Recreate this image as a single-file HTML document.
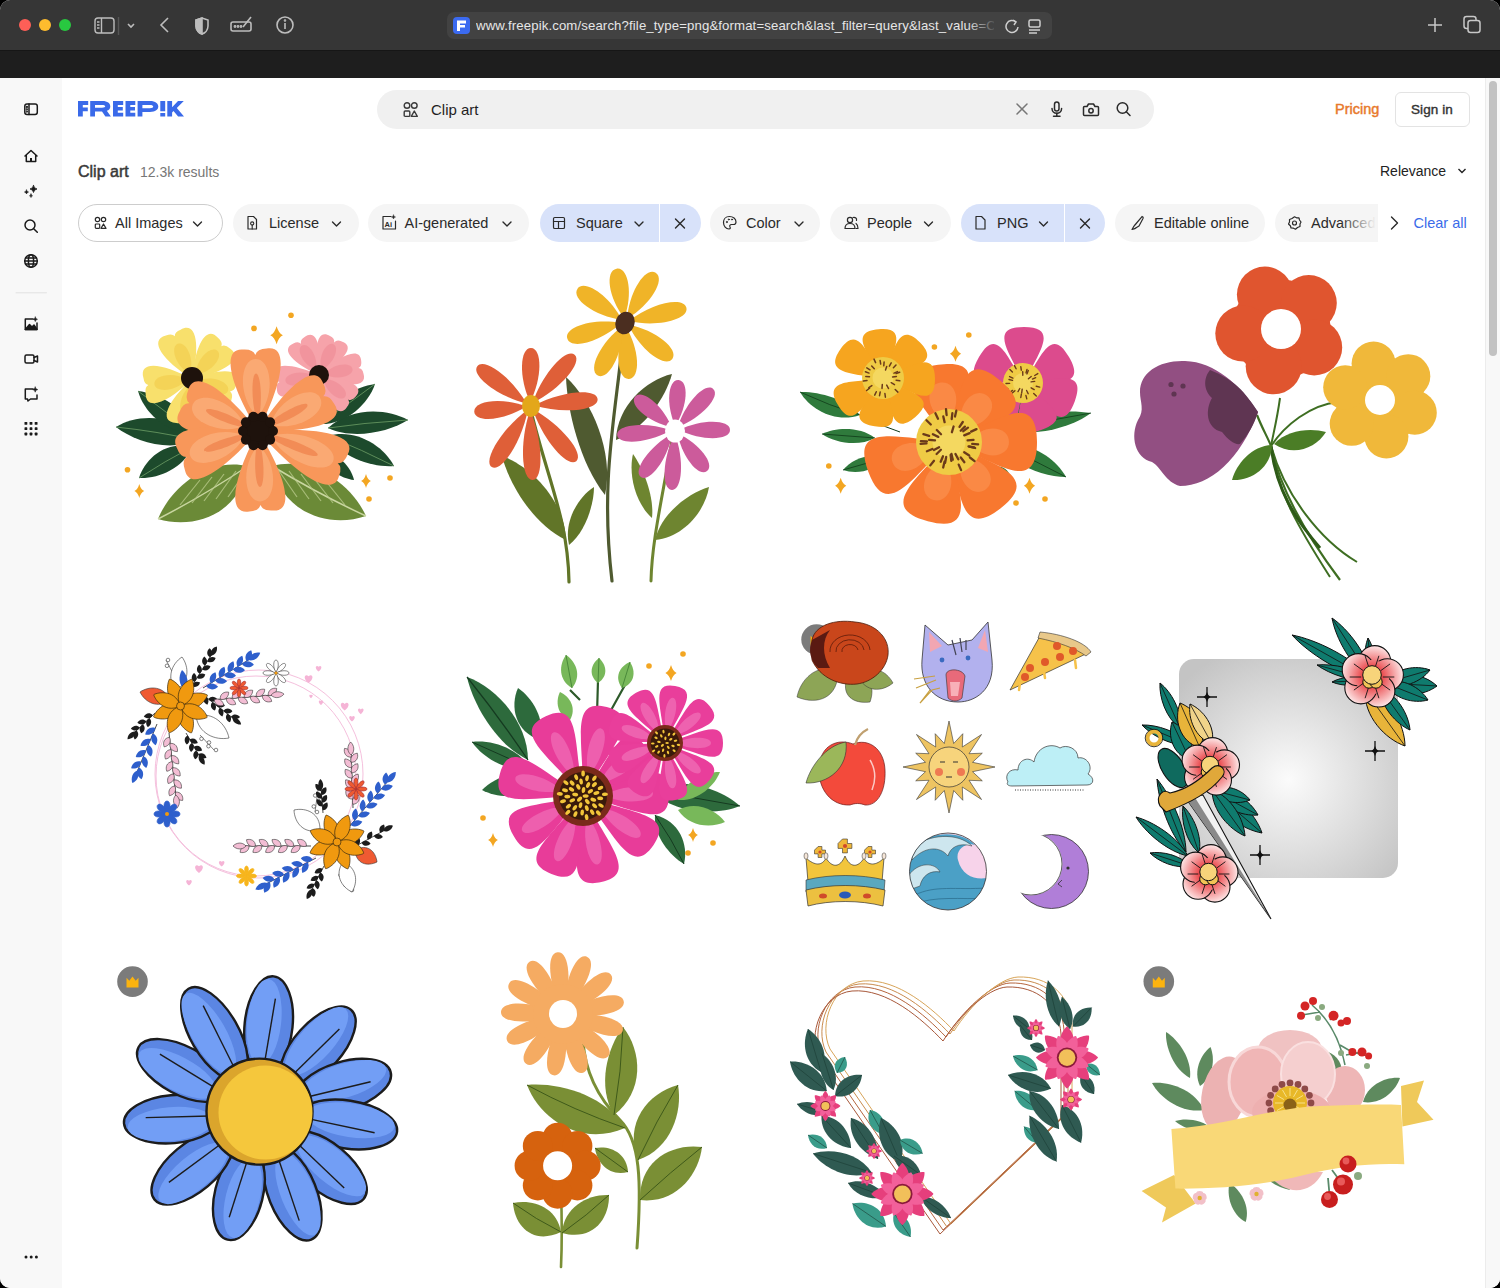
<!DOCTYPE html>
<html><head><meta charset="utf-8">
<style>
*{box-sizing:border-box;margin:0;padding:0}
html,body{width:1500px;height:1288px;overflow:hidden;background:#000;font-family:"Liberation Sans",sans-serif}
#win{position:absolute;left:0;top:0;width:1500px;height:1288px;border-radius:10px;overflow:hidden;background:#fff}
#title{position:absolute;left:0;top:0;width:1500px;height:51px;background:#363636;border-bottom:1px solid #161616}
#strip{position:absolute;left:0;top:51px;width:1500px;height:27px;background:#1e1e1e}
.dot{position:absolute;top:19px;width:12px;height:12px;border-radius:50%}
#url{position:absolute;left:447px;top:12px;width:605px;height:27px;border-radius:7px;background:#424242}
#url .txt{position:absolute;left:29px;top:6px;width:518px;overflow:hidden;font-size:13.2px;color:#e6e6e6;white-space:nowrap;letter-spacing:0.12px}
#side{position:absolute;left:0;top:78px;width:62px;height:1210px;background:#f8f8f8}
#main{position:absolute;left:62px;top:78px;width:1438px;height:1210px;background:#fff}
.ic{position:absolute}
#search{position:absolute;left:377px;top:90px;width:777px;height:39px;border-radius:20px;background:#f0f0f0}
.chip{position:absolute;top:204px;height:38px;border-radius:19px;background:#f5f5f5;font-size:14.5px;color:#333;white-space:nowrap}
.chip .t{position:absolute;top:11px}
.chip.sel{background:#d8e2fb}
.chip.out{background:#fff;border:1px solid #cfcfcf}
#scroll{position:absolute;left:1485px;top:78px;width:15px;height:1210px;background:#f8f8f8;border-left:1px solid #ececec}
#thumb{position:absolute;left:1489px;top:81px;width:8px;height:275px;border-radius:4px;background:#c2c2c2}
.tile{position:absolute}
.ct{position:absolute;top:215px;font-size:14.5px;color:#2a2a2a;white-space:nowrap;line-height:17px}
</style></head><body>
<div id="win">
 <div id="title">
  <div class="dot" style="left:19px;background:#fe5f57"></div>
  <div class="dot" style="left:39px;background:#febc2e"></div>
  <div class="dot" style="left:59px;background:#28c840"></div>
  <svg class="ic" style="left:94px;top:15px" width="60" height="22" viewBox="0 0 60 22" fill="none" stroke="#bdbdbd" stroke-width="1.4">
   <rect x="1" y="3" width="19" height="15" rx="3"/><line x1="7.5" y1="3" x2="7.5" y2="18"/>
   <line x1="3" y1="7" x2="5.5" y2="7"/><line x1="3" y1="10" x2="5.5" y2="10"/><line x1="3" y1="13" x2="5.5" y2="13"/>
   <line x1="24.5" y1="2" x2="24.5" y2="20" stroke="#555"/>
   <polyline points="34,9 37,12 40,9" stroke-width="1.6"/>
  </svg>
  <svg class="ic" style="left:155px;top:14px" width="145" height="24" viewBox="0 0 145 24" fill="none" stroke="#bdbdbd" stroke-width="1.6">
   <polyline points="13,4 6,11 13,18"/>
   <path d="M47,4 L41,6 L41,12 C41,16 44,19 47,20 C50,19 53,16 53,12 L53,6 Z"/><path d="M47,4 L47,20 C44,19 41,16 41,12 L41,6 Z" fill="#bdbdbd"/>
   <rect x="76" y="8" width="20" height="9" rx="2"/><path d="M88,13 L96,3"/>
   <circle cx="80" cy="12.5" r="0.6"/><circle cx="83" cy="12.5" r="0.6"/><circle cx="86" cy="12.5" r="0.6"/>
   <circle cx="130" cy="11" r="8"/><line x1="130" y1="9" x2="130" y2="15"/><circle cx="130" cy="6.5" r="0.5"/>
  </svg>
  <div id="url">
   <svg class="ic" style="left:6px;top:5px" width="17" height="17" viewBox="0 0 17 17"><rect width="17" height="17" rx="4" fill="#3b6af0"/><path d="M4,3.5h9v3h-6v1.5h5v2.5h-5v3.5h-3z" fill="#fff"/></svg>
   <div class="txt">www.freepik.com/search?file_type=png&amp;format=search&amp;last_filter=query&amp;last_value=C</div>
   <div style="position:absolute;left:520px;top:0;width:30px;height:27px;background:linear-gradient(90deg,rgba(66,66,66,0),#424242)"></div>
   <svg class="ic" style="left:556px;top:5px" width="45" height="18" viewBox="0 0 45 18" fill="none" stroke="#cfcfcf" stroke-width="1.5">
    <path d="M13,5 A6,6 0 1 0 15,10"/><polyline points="10,3 13,5 11,8"/>
    <rect x="26" y="3" width="11" height="7" rx="1.5"/><line x1="26" y1="13" x2="37" y2="13"/><line x1="26" y1="16" x2="34" y2="16"/>
   </svg>
  </div>
  <svg class="ic" style="left:1425px;top:15px" width="60" height="22" viewBox="0 0 60 22" fill="none" stroke="#c8c8c8" stroke-width="1.5">
   <line x1="10" y1="3" x2="10" y2="17"/><line x1="3" y1="10" x2="17" y2="10"/>
   <rect x="39" y="1.5" width="12" height="12" rx="2.5"/><rect x="43" y="5.5" width="12" height="12" rx="2.5" fill="#363636"/>
  </svg>
 </div>
 <div id="strip"></div>
 <div id="side"></div>
 <div id="main"></div>
 <div id="scroll"></div><div id="thumb"></div>
 <div id="search"></div>

 <!-- sidebar icons -->
 <svg class="ic" style="left:0;top:78px" width="62" height="1210" viewBox="0 78 62 1210" fill="none" stroke="#1a1a1a" stroke-width="1.5" stroke-linecap="round" stroke-linejoin="round">
  <rect x="24.8" y="104" width="12.5" height="10.5" rx="2.2"/><line x1="29" y1="104" x2="29" y2="114.5"/>
  <circle cx="26.9" cy="107" r="0.4" fill="#1a1a1a"/><circle cx="26.9" cy="109.3" r="0.4" fill="#1a1a1a"/><circle cx="26.9" cy="111.6" r="0.4" fill="#1a1a1a"/>
  <path d="M25,156 L31,150.5 L37,156 M26.3,155 V161.5 H35.7 V155"/><rect x="30" y="158" width="2" height="3.5" fill="#1a1a1a" stroke="none"/>
  <path d="M33.5,185.5 Q34,188.5 37,189 Q34,189.5 33.5,192.5 Q33,189.5 30,189 Q33,188.5 33.5,185.5Z" fill="#1a1a1a" stroke-width="0.8"/>
  <path d="M26.5,190 Q26.8,191.8 28.5,192 Q26.8,192.3 26.5,194 Q26.2,192.3 24.5,192 Q26.2,191.8 26.5,190Z" fill="#1a1a1a" stroke-width="0.6"/>
  <path d="M31,194 Q31.2,195.5 32.5,195.8 Q31.2,196.1 31,197.5 Q30.8,196.1 29.5,195.8 Q30.8,195.5 31,194Z" fill="#1a1a1a" stroke-width="0.6"/>
  <circle cx="30" cy="225" r="5"/><line x1="33.7" y1="228.7" x2="37.3" y2="232.3"/>
  <circle cx="31" cy="261" r="6.3"/><ellipse cx="31" cy="261" rx="2.6" ry="6.3"/><line x1="24.7" y1="261" x2="37.3" y2="261"/><line x1="25.6" y1="258" x2="36.4" y2="258"/><line x1="25.6" y1="264" x2="36.4" y2="264"/>
  <line x1="16" y1="292.8" x2="46.5" y2="292.8" stroke="#e2e2e2" stroke-width="1"/>
  <path d="M33,319 H25.3 V329.5 H37 V323"/><path d="M25.3,329.5 L29.5,324.5 L32,327 L34,325 L37,329.5Z" fill="#1a1a1a"/>
  <path d="M35.3,317 Q35.5,319 37.5,319.3 Q35.5,319.6 35.3,321.6 Q35.1,319.6 33.1,319.3 Q35.1,319 35.3,317Z" fill="#1a1a1a" stroke-width="0.5"/>
  <rect x="25" y="355" width="9" height="8" rx="1.5"/><path d="M34,357.5 L37.5,356 V362 L34,360.5"/>
  <path d="M33,389 H25.3 V399 H27.5 L28,401 L30.5,399 H37 V395"/>
  <path d="M35.2,387 Q35.5,389.3 37.8,389.6 Q35.5,390 35.2,392.2 Q34.9,390 32.6,389.6 Q34.9,389.3 35.2,387Z" fill="#1a1a1a" stroke-width="0.5"/>
  <g fill="#1a1a1a" stroke="none"><rect x="24.5" y="422" width="2.8" height="2.8" rx="0.6"/><rect x="29.6" y="422" width="2.8" height="2.8" rx="0.6"/><rect x="34.7" y="422" width="2.8" height="2.8" rx="0.6"/>
  <rect x="24.5" y="427.3" width="2.8" height="2.8" rx="0.6"/><rect x="29.6" y="427.3" width="2.8" height="2.8" rx="0.6"/><rect x="34.7" y="427.3" width="2.8" height="2.8" rx="0.6"/>
  <rect x="24.5" y="432.6" width="2.8" height="2.8" rx="0.6"/><rect x="29.6" y="432.6" width="2.8" height="2.8" rx="0.6"/><rect x="34.7" y="432.6" width="2.8" height="2.8" rx="0.6"/>
  <circle cx="26" cy="1257" r="1.5"/><circle cx="31.2" cy="1257" r="1.5"/><circle cx="36.4" cy="1257" r="1.5"/></g>
 </svg>
 <!-- logo -->
 <svg class="ic" style="left:78px;top:101px" width="106" height="16" viewBox="0 0 106 16" fill="#3a6ae9">
  <path d="M0,0H10.2V3.9H4.8V6.5H9.8V10.2H4.8V15.6H0Z"/>
  <path d="M12.2,0H24.5C29.5,0 32.3,2.3 32.3,5.4C32.3,7.6 31,9.1 28.8,9.8L32.9,15.6H27.4L24,10.6H17V15.6H12.2ZM17,3.9V6.8H24C26.3,6.8 27.2,6.2 27.2,5.35C27.2,4.5 26.3,3.9 24,3.9Z"/>
  <path d="M35,0H45.2V3.9H39.8V5.9H44.8V9.6H39.8V11.7H45.2V15.6H35Z"/>
  <path d="M47.5,0H57.3V3.9H52.3V5.9H57V9.6H52.3V11.7H57.3V15.6H47.5Z"/>
  <path d="M59.6,0H72C77.5,0 80.3,2.5 80.3,5.6C80.3,8.7 77.5,11 72,11H64.4V15.6H59.6ZM64.4,3.9V7.2H71.8C74.2,7.2 75.2,6.5 75.2,5.55C75.2,4.6 74.2,3.9 71.8,3.9Z"/>
  <path d="M82.3,0H87.2V10.2H82.3ZM82.3,12H87.2V15.6H82.3Z"/>
  <path d="M89.3,0H94.1V6.3L100,0H105.8L98.8,7.1L106,15.6H100.1L95.5,10L94.1,11.4V15.6H89.3Z"/>
 </svg>
 <!-- search contents -->
 <svg class="ic" style="left:402px;top:101px" width="18" height="17" viewBox="0 0 18 17" fill="none" stroke="#3a3a3a" stroke-width="1.4">
  <circle cx="5" cy="4.5" r="2.8"/><circle cx="12.3" cy="4.5" r="2.8"/><rect x="2.2" y="10" width="5.6" height="5.4" rx="1"/><path d="M12.3,10 L15.3,15.4 H9.3Z" stroke-linejoin="round"/>
 </svg>
 <div style="position:absolute;left:431px;top:101px;font-size:15px;color:#1f1f1f">Clip art</div>
 <svg class="ic" style="left:1013px;top:100px" width="125" height="19" viewBox="0 0 125 19" fill="none" stroke="#2a2a2a" stroke-width="1.5" stroke-linecap="round">
  <line x1="4" y1="4" x2="14" y2="14" stroke="#777"/><line x1="14" y1="4" x2="4" y2="14" stroke="#777"/>
  <rect x="41.5" y="2" width="4.5" height="9" rx="2.25"/><path d="M39,8.5 A4.8,4.8 0 0 0 48.6,8.5"/><line x1="43.8" y1="13.3" x2="43.8" y2="16"/><line x1="40.5" y1="16.2" x2="47" y2="16.2"/>
  <path d="M71.5,6.5 H74 L75.5,4 H80.5 L82,6.5 H84.5 Q85.5,6.5 85.5,7.5 V14.5 Q85.5,15.5 84.5,15.5 H71.5 Q70.5,15.5 70.5,14.5 V7.5 Q70.5,6.5 71.5,6.5Z" stroke-linejoin="round"/><circle cx="78" cy="10.8" r="2.2"/>
  <circle cx="109.5" cy="8" r="5.3"/><line x1="113.3" y1="11.8" x2="117" y2="15.5"/>
 </svg>
 <div style="position:absolute;left:1335px;top:101px;font-size:14.5px;font-weight:normal;-webkit-text-stroke:0.45px #e8792b;color:#e8792b;letter-spacing:0px">Pricing</div>
 <div style="position:absolute;left:1395px;top:92px;width:75px;height:35px;border:1px solid #e3e3e3;border-radius:6px;background:#fff"></div>
 <div style="position:absolute;left:1411px;top:102px;font-size:13.5px;font-weight:normal;-webkit-text-stroke:0.4px #333;color:#333;letter-spacing:0.1px">Sign in</div>

 <!-- chips -->
 <div style="position:absolute;left:78px;top:204px;width:145px;height:38px;border:1px solid #cdcdcd;border-radius:19px;background:#fff"></div>
 <div style="position:absolute;left:233px;top:204px;width:126px;height:38px;border-radius:19px;background:#f5f5f5"></div>
 <div style="position:absolute;left:368px;top:204px;width:161px;height:38px;border-radius:19px;background:#f5f5f5"></div>
 <div style="position:absolute;left:539.5px;top:204px;width:161px;height:38px;border-radius:19px;background:#d8e2fa"></div>
 <div style="position:absolute;left:658.5px;top:204px;width:1.2px;height:38px;background:#fff"></div>
 <div style="position:absolute;left:710px;top:204px;width:110px;height:38px;border-radius:19px;background:#f5f5f5"></div>
 <div style="position:absolute;left:830px;top:204px;width:120.5px;height:38px;border-radius:19px;background:#f5f5f5"></div>
 <div style="position:absolute;left:961px;top:204px;width:144px;height:38px;border-radius:19px;background:#d8e2fa"></div>
 <div style="position:absolute;left:1063.5px;top:204px;width:1.2px;height:38px;background:#fff"></div>
 <div style="position:absolute;left:1115px;top:204px;width:149.5px;height:38px;border-radius:19px;background:#f5f5f5"></div>
 <div style="position:absolute;left:1274.5px;top:204px;width:110px;height:38px;border-radius:19px 0 0 19px;background:#f5f5f5"></div>
 <div class="ct" style="left:115px">All Images</div>
 <div class="ct" style="left:269px">License</div>
 <div class="ct" style="left:404.5px">AI-generated</div>
 <div class="ct" style="left:576px">Square</div>
 <div class="ct" style="left:746px">Color</div>
 <div class="ct" style="left:867px">People</div>
 <div class="ct" style="left:997px">PNG</div>
 <div class="ct" style="left:1154px">Editable online</div>
 <div class="ct" style="left:1311px">Advanced</div>
 <div style="position:absolute;left:1340px;top:206px;width:45px;height:34px;background:linear-gradient(90deg,rgba(245,245,245,0),#f5f5f5 80%)"></div>
 <div style="position:absolute;left:1378px;top:204px;width:10px;height:38px;background:#fff"></div>
 <div class="ct" style="left:1413.5px;color:#3a6be9">Clear all</div>
 <svg class="ic" style="left:0;top:195px" width="1500" height="55" viewBox="0 195 1500 55" fill="none" stroke="#2a2a2a" stroke-width="1.35" stroke-linecap="round" stroke-linejoin="round">
  <!-- chevrons -->
  <polyline points="193.5,222 197.5,226 201.5,222"/>
  <polyline points="332.5,222 336.5,226 340.5,222"/>
  <polyline points="503,222 507,226 511,222"/>
  <polyline points="635,222 639,226 643,222"/>
  <polyline points="795,222 799,226 803,222"/>
  <polyline points="924.5,222 928.5,226 932.5,222"/>
  <polyline points="1039.5,222 1043.5,226 1047.5,222"/>
  <polyline points="1391.5,217 1397.5,223 1391.5,229" stroke-width="1.4"/>
  <!-- x -->
  <line x1="675.5" y1="219" x2="684.5" y2="228"/><line x1="684.5" y1="219" x2="675.5" y2="228"/>
  <line x1="1080.5" y1="219" x2="1089.5" y2="228"/><line x1="1089.5" y1="219" x2="1080.5" y2="228"/>
  <!-- all images icon -->
  <circle cx="97.5" cy="219.5" r="2.2" stroke-width="1.2"/><circle cx="103.5" cy="219.5" r="2.2" stroke-width="1.2"/><rect x="95.3" y="224" width="4.4" height="4.4" rx="0.8" stroke-width="1.2"/><path d="M103.5,224 L106,228.4 H101Z" stroke-width="1.2"/>
  <!-- license -->
  <path d="M248,216.5 H253.5 L256.5,219.5 V229 H248Z" stroke-width="1.2"/><circle cx="252.2" cy="223.5" r="1.6" stroke-width="1.1"/><line x1="252.2" y1="225" x2="252.2" y2="229" stroke-width="1.1"/>
  <!-- ai -->
  <path d="M391,216.5 H383 V229 H395.5 V221" stroke-width="1.2"/><text x="384.5" y="227" font-size="7.5" font-family="Liberation Sans" font-weight="bold" fill="#2a2a2a" stroke="none">Ai</text>
  <path d="M393.5,215 Q393.7,216.8 395.5,217 Q393.7,217.2 393.5,219 Q393.3,217.2 391.5,217 Q393.3,216.8 393.5,215Z" fill="#2a2a2a" stroke-width="0.5"/>
  <!-- square -->
  <rect x="553.5" y="217.5" width="11" height="11" rx="1.3" stroke-width="1.2"/><line x1="553.5" y1="221.5" x2="564.5" y2="221.5" stroke-width="1.2"/><line x1="558.5" y1="221.5" x2="558.5" y2="228.5" stroke-width="1.2"/>
  <!-- color palette -->
  <path d="M729.5,216.5 C725.5,216.5 723.5,219.5 723.5,222.5 C723.5,226 726,229 729,229 C730.5,229 730.5,227.8 730,227 C729.3,225.8 730,224.5 731.5,224.5 H733.5 C735,224.5 736,223.5 736,222 C736,218.8 733,216.5 729.5,216.5Z" stroke-width="1.2"/>
  <circle cx="726.8" cy="222" r="0.6" fill="#2a2a2a" stroke-width="0.8"/><circle cx="728.8" cy="219.5" r="0.6" fill="#2a2a2a" stroke-width="0.8"/><circle cx="732" cy="219.5" r="0.6" fill="#2a2a2a" stroke-width="0.8"/>
  <!-- people -->
  <circle cx="850" cy="220" r="2.6" stroke-width="1.2"/><path d="M845,228.5 C845,225 847,223.5 850,223.5 C853,223.5 855,225 855,228.5Z" stroke-width="1.2"/><path d="M853,217.5 C855.5,217 857,218.5 856.5,220.5 M856,223.5 C857.5,224.5 858,226 858,228.5 H856" stroke-width="1.2"/>
  <!-- png doc -->
  <path d="M976,216.5 H981.5 L985,220 V229 H976Z" stroke-width="1.2"/>
  <!-- brush -->
  <path d="M1142,216.5 L1136,224 M1139,226 L1143,218.5 C1143.5,217.5 1142.8,216.3 1141.8,216.8 L1134.5,225.5 C1133.5,226.5 1133,228 1132,229.5 C1134,229 1135.5,228.5 1136.5,227.5Z" stroke-width="1.2"/>
  <!-- gear -->
  <circle cx="1294.5" cy="223" r="2" stroke-width="1.2"/><path d="M1294.5,216.8 L1296.5,217.8 L1299,217.8 L1299.5,220 L1301,222 L1300,224 L1300,226.5 L1297.5,227.5 L1295.5,229.2 L1293.5,228.2 L1291,228 L1290.5,226 L1288.5,224 L1289.5,222 L1289.5,219.5 L1292,218.5Z" stroke-width="1.2"/>
 </svg>
 <svg class="ic" style="left:0;top:0" width="1500" height="1288" viewBox="0 0 1500 1288">
<!-- t01.py -->
<path d="M196,440 C175.6,413.9 138.8,413.2 116,427 C134.2,441.4 169.4,452.4 196,440 Z" fill="#1d4a2c" /><path d="M196,440 Q156.4,431.3 116,427" stroke="#5d8d5a" stroke-width="1.2" fill="none"/>
<path d="M195,432 C186.4,407.9 158.1,393.1 138,391 C144,412.7 167.1,434.7 195,432 Z" fill="#1d4a2c" /><path d="M195,432 Q165.6,412.7 138,391" stroke="#5d8d5a" stroke-width="1" fill="none"/>
<path d="M192,447 C166.8,440.3 145.1,458.1 139,478 C157.3,479 183.4,468.8 192,447 Z" fill="#1d4a2c" /><path d="M192,447 Q164.7,461.2 139,478" stroke="#5d8d5a" stroke-width="1" fill="none"/>
<path d="M328,428 C353.4,440 389,432 408,420 C386.6,408 350.2,407.2 328,428 Z" fill="#1d4a2c" /><path d="M328,428 Q367.9,422.5 408,420" stroke="#5d8d5a" stroke-width="1.2" fill="none"/>
<path d="M318,424 C344.9,425.9 368.2,404.6 375,384 C355.6,386.6 327.6,401.4 318,424 Z" fill="#1d4a2c" /><path d="M318,424 Q347.4,405.2 375,384" stroke="#5d8d5a" stroke-width="1" fill="none"/>
<path d="M328,436 C341.8,458.2 373.3,467.7 394,466 C383.3,445.7 355.5,428.2 328,436 Z" fill="#1d4a2c" /><path d="M328,436 Q361.6,449.6 394,466" stroke="#5d8d5a" stroke-width="1" fill="none"/>
<path d="M322,452 C324.7,468.3 340.9,478.8 354,480 C351.1,467.2 338.5,452.5 322,452 Z" fill="#1d4a2c" />
<path d="M248,466 C206.3,456.9 170.2,488.3 158,519 C194.8,530 239.8,513.8 248,466 Z" fill="#6b8a37" /><path d="M248,466 Q204.5,495.1 158,519" stroke="#c9d6a0" stroke-width="1.5" fill="none"/>
<path d="M272,466 C282.8,513.7 329.3,528.4 366,516 C352,485.7 313.8,455.4 272,466 Z" fill="#6b8a37" /><path d="M272,466 Q317.6,493.6 366,516" stroke="#c9d6a0" stroke-width="1.5" fill="none"/>
<line x1="180" y1="505" x2="200" y2="480" stroke="#b8c98a" stroke-width="1.2" opacity="0.8"/>
<line x1="345" y1="505" x2="325" y2="480" stroke="#b8c98a" stroke-width="1.2" opacity="0.8"/>
<line x1="192" y1="503" x2="212" y2="477" stroke="#b8c98a" stroke-width="1.2" opacity="0.8"/>
<line x1="333" y1="503" x2="313" y2="477" stroke="#b8c98a" stroke-width="1.2" opacity="0.8"/>
<line x1="204" y1="501" x2="224" y2="474" stroke="#b8c98a" stroke-width="1.2" opacity="0.8"/>
<line x1="321" y1="501" x2="301" y2="474" stroke="#b8c98a" stroke-width="1.2" opacity="0.8"/>
<line x1="216" y1="499" x2="236" y2="471" stroke="#b8c98a" stroke-width="1.2" opacity="0.8"/>
<line x1="309" y1="499" x2="289" y2="471" stroke="#b8c98a" stroke-width="1.2" opacity="0.8"/>
<line x1="228" y1="497" x2="248" y2="468" stroke="#b8c98a" stroke-width="1.2" opacity="0.8"/>
<line x1="297" y1="497" x2="277" y2="468" stroke="#b8c98a" stroke-width="1.2" opacity="0.8"/>
<path d="M192,379 C200.1,346.1 196.9,320.7 180.6,329.7 Q174.5,332.1 174.8,336.3 Q172,333.1 165.9,335.6 C148,340.5 163.3,360.9 192,379 Z" fill="#f8e06c" />
<path d="M192,379 C224.4,372.6 245.2,359.4 230,348.6 Q225.1,344.2 221.4,346.3 Q223.1,342.4 218.2,338 C206,324 195,346.1 192,379 Z" fill="#f8e06c" />
<path d="M192,379 C208.9,405.3 227.8,418.4 231.4,400.1 Q233.4,393.9 230,391.4 Q234.3,391.3 236.3,385.1 C244.1,368.2 221.1,367.6 192,379 Z" fill="#f8e06c" />
<path d="M192,379 C168.1,400.5 157.6,421.9 176.2,422.9 Q182.7,424.1 184.7,420.4 Q185.3,424.5 191.8,425.7 C209.6,431.1 207.1,407.4 192,379 Z" fill="#f8e06c" />
<path d="M192,379 C163.1,363.1 138.6,359.8 143.4,377.8 Q144.3,384.4 148.4,385.1 Q144.7,387 145.6,393.5 C146,412.1 168.6,402.3 192,379 Z" fill="#f8e06c" />
<path d="M189.8,373.4 C195.3,359.1 185.8,340.5 177.8,343.8 C169.7,347 175.8,367 189.8,373.4 Z" fill="#f2c94a" opacity="0.6"/>
<path d="M196,374.5 C211.3,373.2 223.9,356.6 217.4,350.8 C211,345 195.7,359.2 196,374.5 Z" fill="#f2c94a" opacity="0.6"/>
<path d="M197.7,380.9 C205.1,394.3 225.5,399 228.1,390.7 C230.8,382.5 211.6,374.3 197.7,380.9 Z" fill="#f2c94a" opacity="0.6"/>
<path d="M191,384.9 C178.7,394.1 176.9,414.9 185.4,416.4 C193.9,417.9 199.4,397.8 191,384.9 Z" fill="#f2c94a" opacity="0.6"/>
<path d="M186.1,379.8 C173.5,371 153.2,375.7 154.4,384.3 C155.6,392.9 176.4,391.8 186.1,379.8 Z" fill="#f2c94a" opacity="0.6"/>
<circle cx="192" cy="378" r="11" fill="#1e120c"/>
<path d="M319,375 C322,347.8 316.8,328 304.6,337.1 Q299.9,339.8 301,343.8 Q298.1,340.9 293.4,343.6 C279.4,349.6 294,364 319,375 Z" fill="#f6a3aa" />
<path d="M319,375 C343,361.9 356.2,346.2 341.8,341.5 Q336.9,339.2 334.2,342.4 Q334.9,338.3 330,336 C317.1,328 313.6,348.2 319,375 Z" fill="#f6a3aa" />
<path d="M319,375 C345.6,386.8 367.9,388.3 363.5,373.7 Q362.5,368.4 358.4,368.1 Q362.1,366.3 361.2,361 C360.4,345.8 340,354.8 319,375 Z" fill="#f6a3aa" />
<path d="M319,375 C326.3,402.3 338.7,419.7 347,407 Q350.5,402.8 348.1,399.4 Q351.9,401.2 355.3,397 C366.4,386.6 347.1,377.4 319,375 Z" fill="#f6a3aa" />
<path d="M319,375 C299.2,393.9 290.5,412.4 305.7,413.3 Q311,414.2 312.7,410.5 Q313.1,414.6 318.4,415.5 C333,419.9 331.1,399.5 319,375 Z" fill="#f6a3aa" />
<path d="M319,375 C292.4,363.2 270.1,361.7 274.5,376.3 Q275.5,381.6 279.6,381.9 Q275.9,383.7 276.8,389 C277.6,404.2 298,395.2 319,375 Z" fill="#f6a3aa" />
<path d="M316,369.8 C318.9,356.8 308.4,341.8 302,345.6 C295.6,349.3 303.3,365.8 316,369.8 Z" fill="#ee8a94" opacity="0.6"/>
<path d="M321.5,369.6 C333.8,364.5 340.1,347.3 333.4,344.2 C326.6,341 317.5,356.9 321.5,369.6 Z" fill="#ee8a94" opacity="0.6"/>
<path d="M324.9,374 C336.1,381.1 353.8,376.4 352.5,369.1 C351.2,361.8 333,363.4 324.9,374 Z" fill="#ee8a94" opacity="0.6"/>
<path d="M323.6,378.9 C325.3,392.1 340.3,402.6 345,396.9 C349.8,391.2 336.9,378.3 323.6,378.9 Z" fill="#ee8a94" opacity="0.6"/>
<path d="M318,380.9 C307.4,389 305.8,407.2 313.1,408.5 C320.4,409.8 325.1,392.1 318,380.9 Z" fill="#ee8a94" opacity="0.6"/>
<path d="M313.1,376 C301.9,368.9 284.2,373.6 285.5,380.9 C286.8,388.2 305,386.6 313.1,376 Z" fill="#ee8a94" opacity="0.6"/>
<circle cx="319" cy="375" r="10" fill="#1e120c"/>
<path d="M258,431 C282,385 290.2,344.6 266.7,348.6 Q257.1,349 255.3,355 Q253.2,349.1 243.6,349.5 C219.8,347.1 230.8,386.8 258,431 Z" fill="#f8975a" />
<path d="M258,431 C226.8,390.8 194,367.2 188.1,390.4 Q184.5,399.3 189.4,403.3 Q183.1,402.8 179.5,411.7 C167.7,432.5 207.6,438.3 258,431 Z" fill="#f8975a" />
<path d="M258,431 C206.9,422.4 165.9,427.1 177,448.2 Q180.3,457.2 186.6,457 Q181.6,460.8 184.9,469.9 C190,493.2 224.4,470.5 258,431 Z" fill="#f8975a" />
<path d="M258,431 C234,475.9 225.7,515.4 249.3,511.4 Q258.9,511 260.6,505 Q262.7,510.9 272.3,510.5 C296.1,512.9 285.1,474.1 258,431 Z" fill="#f8975a" />
<path d="M258,431 C295.3,473.7 333.1,499.3 339,476.1 Q342.6,467.2 337.7,463.2 Q344,463.7 347.6,454.8 C359.5,434 314.5,426.2 258,431 Z" fill="#f8975a" />
<path d="M258,431 C308.9,432.9 348,423 334,403.6 Q329.5,395.1 323.3,396.3 Q327.7,391.7 323.2,383.3 C314.9,360.9 284.8,387.7 258,431 Z" fill="#f8975a" />
<path d="M257.5,417 C276.3,396 271.6,358.3 255.5,358.9 C239.4,359.4 237.3,397.3 257.5,417 Z" fill="#fbb889" opacity="0.55"/>
<path d="M257.7,423 C263.1,405.5 261,373.5 256,373.6 C251,373.8 251.1,405.9 257.7,423 Z" fill="#e9703a" opacity="0.5"/>
<path d="M245,425.8 C234,400.3 198.8,389.7 192.7,404.6 C186.7,419.6 219.4,436.4 245,425.8 Z" fill="#fbb889" opacity="0.55"/>
<path d="M250.6,428 C237.3,416.1 207.9,405.4 206.1,410 C204.2,414.6 232.8,427.3 250.6,428 Z" fill="#e9703a" opacity="0.5"/>
<path d="M244.8,435.8 C219,424.4 184.7,440.5 190.2,455.7 C195.7,470.8 232.4,461.1 244.8,435.8 Z" fill="#fbb889" opacity="0.55"/>
<path d="M250.5,433.7 C232.2,434 202.4,446 204.1,450.6 C205.8,455.3 236.3,445.3 250.5,433.7 Z" fill="#e9703a" opacity="0.5"/>
<path d="M258.5,445 C239.7,465.4 244.3,501.9 260.5,501.4 C276.6,500.8 278.7,464 258.5,445 Z" fill="#fbb889" opacity="0.55"/>
<path d="M258.3,439 C252.9,456 255,487.1 260,487 C264.9,486.8 264.9,455.6 258.3,439 Z" fill="#e9703a" opacity="0.5"/>
<path d="M271,436.2 C285.4,463.1 327,476.3 333.1,461.3 C339.1,446.4 300,426.9 271,436.2 Z" fill="#fbb889" opacity="0.55"/>
<path d="M265.4,434 C281.5,447 315.9,459.7 317.7,455.1 C319.6,450.5 286,435.8 265.4,434 Z" fill="#e9703a" opacity="0.5"/>
<path d="M270.4,424.4 C296.9,432.4 327.7,412.2 320.2,397.9 C312.6,383.7 278.6,397.9 270.4,424.4 Z" fill="#fbb889" opacity="0.55"/>
<path d="M265.1,427.2 C282.7,424.7 309.8,409.1 307.4,404.7 C305.1,400.3 277.1,414.1 265.1,427.2 Z" fill="#e9703a" opacity="0.5"/>
<circle cx="258" cy="431" r="17" fill="#1e120c"/>
<circle cx="273" cy="431" r="5" fill="#1e120c"/>
<circle cx="270.1" cy="439.8" r="5" fill="#1e120c"/>
<circle cx="262.6" cy="445.3" r="5" fill="#1e120c"/>
<circle cx="253.4" cy="445.3" r="5" fill="#1e120c"/>
<circle cx="245.9" cy="439.8" r="5" fill="#1e120c"/>
<circle cx="243" cy="431" r="5" fill="#1e120c"/>
<circle cx="245.9" cy="422.2" r="5" fill="#1e120c"/>
<circle cx="253.4" cy="416.7" r="5" fill="#1e120c"/>
<circle cx="262.6" cy="416.7" r="5" fill="#1e120c"/>
<circle cx="270.1" cy="422.2" r="5" fill="#1e120c"/>
<path d="M276.6,326.2 Q278.6,333.2 282.9,335.2 Q278.6,337.2 276.6,344.2 Q274.6,337.2 270.3,335.2 Q274.6,333.2 276.6,326.2 Z" fill="#f3a622"/>
<path d="M139.3,484 Q140.8,489.5 144.2,491 Q140.8,492.5 139.3,498 Q137.8,492.5 134.4,491 Q137.8,489.5 139.3,484 Z" fill="#f3a622"/>
<path d="M366,474 Q367.5,479.5 370.9,481 Q367.5,482.5 366,488 Q364.5,482.5 361.1,481 Q364.5,479.5 366,474 Z" fill="#f3a622"/>
<circle cx="291" cy="315.2" r="2.8" fill="#f3a622"/>
<circle cx="254" cy="328.4" r="2.8" fill="#f3a622"/>
<circle cx="127.5" cy="469.8" r="2.8" fill="#f3a622"/>
<circle cx="390" cy="478" r="2.8" fill="#f3a622"/>
<circle cx="369" cy="499" r="2.8" fill="#f3a622"/>
<!-- t02.py -->
<path d="M624,330 C615,420 600,480 612,581" stroke="#4f5a30" stroke-width="3.2" fill="none" stroke-linecap="round"/>
<path d="M532,415 C548,480 568,520 569,582" stroke="#617528" stroke-width="3.2" fill="none" stroke-linecap="round"/>
<path d="M672,440 C662,500 652,540 651,581" stroke="#6e8530" stroke-width="3" fill="none" stroke-linecap="round"/>
<path d="M605,495 C614.2,452.7 592.1,401.1 566,377 C567,409.4 580,464 605,495 Z" fill="#4f5a30" />
<path d="M616,440 C644.2,429.9 665.8,397.1 672,374 C645.6,380 616.8,406.6 616,440 Z" fill="#4f5a30" />
<path d="M566,540 C564.7,501.2 531.8,466.5 502,456 C509,483.8 533.7,524.8 566,540 Z" fill="#617528" />
<path d="M569,545 C585.7,531.6 594,504.2 594,487 C577.8,497.2 563.6,522.1 569,545 Z" fill="#617528" />
<path d="M652,518 C654.4,496.4 643.2,468.4 633,454 C628.5,472.8 634.3,502.4 652,518 Z" fill="#6e8530" />
<path d="M655,540 C684.2,537.3 705.4,510.3 709,487 C688.4,493 661,513.8 655,540 Z" fill="#6e8530" />
<path d="M530.1,402 C542.5,377.9 542.2,348.2 531,348 C519.8,347.8 518.5,377.5 530.1,402 Z" fill="#df5f38" />
<path d="M532.6,403 C560.6,389.1 583.1,362 574.6,354.7 C566.2,347.3 542.5,373.4 532.6,403 Z" fill="#df5f38" />
<path d="M534,405.6 C563.9,414.5 598.8,410 597.6,398.9 C596.5,387.8 561.4,390.6 534,405.6 Z" fill="#df5f38" />
<path d="M532.6,409.1 C543,440.2 567.7,468.4 576.3,461.2 C584.9,454 561.4,424.8 532.6,409.1 Z" fill="#df5f38" />
<path d="M530.1,410 C519.2,441.9 521.4,480.3 532.6,480 C543.8,479.6 543.2,441.1 530.1,410 Z" fill="#df5f38" />
<path d="M527.9,409.4 C501.5,429 482.3,461.1 491.8,467.1 C501.3,473 521.8,441.7 527.9,409.4 Z" fill="#df5f38" />
<path d="M526,406.4 C501.5,396.9 473.1,400.7 474.3,411.9 C475.5,423 504,420.8 526,406.4 Z" fill="#df5f38" />
<path d="M526.8,403.6 C511.7,377.2 484,357.3 477.3,366.3 C470.5,375.2 497.3,396.4 526.8,403.6 Z" fill="#df5f38" />
<ellipse cx="531" cy="406" rx="9" ry="11" fill="#e3a71a"/>
<path d="M624.4,318 C633.4,293.8 628.3,266.8 616.6,268.7 C604.8,270.5 608.3,297.8 624.4,318 Z" fill="#f0b428" />
<path d="M627.1,318.6 C650.8,304.8 665.8,279.1 655.7,272.8 C645.6,266.5 629.2,291.2 627.1,318.6 Z" fill="#f0b428" />
<path d="M628.9,321.1 C657.6,327.6 689.1,319.4 686.4,307.8 C683.7,296.2 651.9,302.7 628.9,321.1 Z" fill="#f0b428" />
<path d="M628.2,324.5 C640.2,350 665,368.3 672.3,358.9 C679.6,349.6 655.9,329.9 628.2,324.5 Z" fill="#f0b428" />
<path d="M625.3,326 C614.2,350.7 617.1,379.7 629,378.9 C640.8,378 639.7,348.9 625.3,326 Z" fill="#f0b428" />
<path d="M623.2,325.6 C600.4,342.2 587.2,370.1 597.8,375.5 C608.4,380.9 623.1,353.8 623.2,325.6 Z" fill="#f0b428" />
<path d="M621.2,323.1 C593.4,317.8 564,327.1 567.3,338.5 C570.6,350 600.4,342.3 621.2,323.1 Z" fill="#f0b428" />
<path d="M621.7,319.7 C609.1,295.3 584.3,279 577.5,288.7 C570.7,298.5 594.5,316.2 621.7,319.7 Z" fill="#f0b428" />
<ellipse cx="625" cy="323" rx="9.5" ry="11.5" transform="rotate(20 625 323)" fill="#4b2e20"/>
<path d="M675.3,426 C687.9,406.1 689,380.9 678.5,380.1 C668,379.4 665.5,404.6 675.3,426 Z" fill="#cc5b9b" />
<path d="M677.7,427.1 C701.9,417.6 720.9,396.2 713.2,389 C705.5,381.9 685.5,402.3 677.7,427.1 Z" fill="#cc5b9b" />
<path d="M679,430 C702,441.2 730,440.5 730,430 C730,419.5 702,418.8 679,430 Z" fill="#cc5b9b" />
<path d="M677.5,433.2 C681.9,457.1 698.7,477.4 707,471 C715.3,464.5 699.6,443.2 677.5,433.2 Z" fill="#cc5b9b" />
<path d="M674.8,434 C662.2,458.6 661.4,489.4 671.9,489.9 C682.3,490.5 684.7,459.7 674.8,434 Z" fill="#cc5b9b" />
<path d="M672.6,433.2 C649.3,446.3 632.4,470.8 640.9,476.9 C649.4,483.1 667.5,459.5 672.6,433.2 Z" fill="#cc5b9b" />
<path d="M671,430.3 C645.8,421.3 616.3,424.6 617.2,435.1 C618.1,445.5 647.8,443.7 671,430.3 Z" fill="#cc5b9b" />
<path d="M671.9,427.4 C662.6,404.9 641.9,388.5 635.2,396.6 C628.4,404.6 648.2,422.2 671.9,427.4 Z" fill="#cc5b9b" />
<ellipse cx="675" cy="431" rx="10" ry="11.5" fill="#fff"/>
<!-- t03.py -->
<path d="M860,415 C845.8,398.3 817.5,391.3 800,392 C810.4,409.8 836.1,423.5 860,415 Z" fill="#2f7a3c" /><path d="M860,415 Q829.2,405.6 800,392" stroke="#0f3a18" stroke-width="0.8" fill="none"/>
<path d="M875,438 C859.9,426.3 835.8,427.3 822,434 C834.7,442.7 858.3,447.3 875,438 Z" fill="#2f7a3c" /><path d="M875,438 Q848.5,436 822,434" stroke="#0f3a18" stroke-width="0.8" fill="none"/>
<path d="M885,458 C869.5,451.5 851.4,459.6 843,470 C855.6,474.4 875.3,471.7 885,458 Z" fill="#2f7a3c" /><path d="M885,458 Q864,464 843,470" stroke="#0f3a18" stroke-width="0.8" fill="none"/>
<path d="M862,418 L900,432" stroke="#0f3a18" stroke-width="1"/>
<path d="M1000,428 C1029.8,438.8 1070.2,428.5 1091,413 C1067,409 1025.4,412.2 1000,428 Z" fill="#2f7a3c" /><path d="M1000,428 Q1045.7,422 1091,413" stroke="#0f3a18" stroke-width="0.8" fill="none"/>
<path d="M1000,445 C1014.1,466.3 1045.6,477.1 1066,477 C1055.2,457.3 1027.2,439.3 1000,445 Z" fill="#2f7a3c" /><path d="M1000,445 Q1033.7,459.7 1066,477" stroke="#0f3a18" stroke-width="0.8" fill="none"/>
<path d="M990,420 C1010.4,423.1 1034.1,410.6 1045,398 C1028.4,396.4 1002.6,403.7 990,420 Z" fill="#2f7a3c" /><path d="M990,420 Q1017.5,409 1045,398" stroke="#0f3a18" stroke-width="0.8" fill="none"/>
<path d="M990,470 C993.8,480.2 1003.4,480.2 1010,475 C1006.6,467.3 998.2,462.8 990,470 Z" fill="#2f7a3c" />
<path d="M1024,383 C1038.7,352.2 1059.7,327 1024,327 C988.3,327 1009.3,352.2 1024,383 Z" fill="#dc4b8d" />
<path d="M1024,383 C1056.1,381.4 1086.9,387.9 1069,357 C1051.2,326.1 1041.4,356 1024,383 Z" fill="#dc4b8d" />
<path d="M1024,383 C1046.9,407 1062.5,435 1074.7,401.5 C1087,367.9 1056.9,379.3 1024,383 Z" fill="#dc4b8d" />
<path d="M1024,383 C1019.6,413.9 1007.6,442.2 1041.1,430 C1074.6,417.8 1047.2,403.8 1024,383 Z" fill="#dc4b8d" />
<path d="M1024,383 C994.4,395.5 963.2,399.9 990.6,422.8 C1017.9,445.8 1016.9,414.4 1024,383 Z" fill="#dc4b8d" />
<path d="M1024,383 C1006.6,356 996.8,326.1 979,357 C961.1,387.9 991.9,381.4 1024,383 Z" fill="#dc4b8d" />
<circle cx="1023" cy="383" r="20" fill="#efcb45"/>
<circle cx="1023" cy="383" r="10" fill="#f4d860"/>
<line x1="1031.1" y1="381.9" x2="1034.7" y2="381.4" stroke="#6b3a1a" stroke-width="1.4" stroke-linecap="round"/>
<line x1="1036.2" y1="386.2" x2="1039.7" y2="387.1" stroke="#6b3a1a" stroke-width="1.4" stroke-linecap="round"/>
<line x1="1031.1" y1="387.8" x2="1034.2" y2="389.6" stroke="#6b3a1a" stroke-width="1.4" stroke-linecap="round"/>
<line x1="1033.7" y1="393.4" x2="1036.3" y2="395.9" stroke="#6b3a1a" stroke-width="1.4" stroke-linecap="round"/>
<line x1="1026.6" y1="390.5" x2="1028.2" y2="393.7" stroke="#6b3a1a" stroke-width="1.4" stroke-linecap="round"/>
<line x1="1025.9" y1="395.4" x2="1026.8" y2="398.9" stroke="#6b3a1a" stroke-width="1.4" stroke-linecap="round"/>
<line x1="1022.2" y1="389.2" x2="1021.7" y2="392.8" stroke="#6b3a1a" stroke-width="1.4" stroke-linecap="round"/>
<line x1="1021.4" y1="394" x2="1020.8" y2="397.5" stroke="#6b3a1a" stroke-width="1.4" stroke-linecap="round"/>
<line x1="1019.8" y1="388.5" x2="1018" y2="391.6" stroke="#6b3a1a" stroke-width="1.4" stroke-linecap="round"/>
<line x1="1014.9" y1="390.7" x2="1012.3" y2="393.1" stroke="#6b3a1a" stroke-width="1.4" stroke-linecap="round"/>
<line x1="1012.6" y1="390.4" x2="1009.7" y2="392.4" stroke="#6b3a1a" stroke-width="1.4" stroke-linecap="round"/>
<line x1="1007.8" y1="388.5" x2="1004.5" y2="389.7" stroke="#6b3a1a" stroke-width="1.4" stroke-linecap="round"/>
<line x1="1009.6" y1="383.4" x2="1006" y2="383.5" stroke="#6b3a1a" stroke-width="1.4" stroke-linecap="round"/>
<line x1="1012.5" y1="380.4" x2="1009" y2="379.5" stroke="#6b3a1a" stroke-width="1.4" stroke-linecap="round"/>
<line x1="1012.9" y1="378.1" x2="1009.6" y2="376.6" stroke="#6b3a1a" stroke-width="1.4" stroke-linecap="round"/>
<line x1="1012.4" y1="372.1" x2="1009.9" y2="369.5" stroke="#6b3a1a" stroke-width="1.4" stroke-linecap="round"/>
<line x1="1016.1" y1="368.8" x2="1014.5" y2="365.6" stroke="#6b3a1a" stroke-width="1.4" stroke-linecap="round"/>
<line x1="1021.3" y1="370.2" x2="1020.8" y2="366.6" stroke="#6b3a1a" stroke-width="1.4" stroke-linecap="round"/>
<line x1="1022.8" y1="375.2" x2="1022.7" y2="371.6" stroke="#6b3a1a" stroke-width="1.4" stroke-linecap="round"/>
<line x1="1026" y1="372.9" x2="1027" y2="369.5" stroke="#6b3a1a" stroke-width="1.4" stroke-linecap="round"/>
<line x1="1026.9" y1="373.9" x2="1028.3" y2="370.6" stroke="#6b3a1a" stroke-width="1.4" stroke-linecap="round"/>
<line x1="1028.4" y1="378.8" x2="1031.2" y2="376.5" stroke="#6b3a1a" stroke-width="1.4" stroke-linecap="round"/>
<line x1="1034.7" y1="375.5" x2="1037.8" y2="373.6" stroke="#6b3a1a" stroke-width="1.4" stroke-linecap="round"/>
<line x1="1032.4" y1="379.1" x2="1035.7" y2="377.7" stroke="#6b3a1a" stroke-width="1.4" stroke-linecap="round"/>
<path d="M949,442 C964.5,396.5 990.3,357.4 938.1,364.8 C886,372.1 921.5,402.5 949,442 Z" fill="#f8782f" />
<path d="M949,442 C993.9,422.2 1040.8,414.6 1000.4,380.7 C960.1,346.8 960.7,394.3 949,442 Z" fill="#f8782f" />
<path d="M949,442 C997.4,463.7 1037,494.7 1037,442 C1037,389.3 997.4,420.3 949,442 Z" fill="#f8782f" />
<path d="M949,442 C960.3,491.8 959.2,540.6 1000.7,508.2 C1042.2,475.7 994.5,465 949,442 Z" fill="#f8782f" />
<path d="M949,442 C916.4,479.9 876.9,507.6 927.8,521.2 C978.7,534.8 958.3,491.2 949,442 Z" fill="#f8782f" />
<path d="M949,442 C897.1,437.8 850.2,421.9 868.2,471.4 C886.2,520.9 912,478.6 949,442 Z" fill="#f8782f" />
<path d="M946.2,422.2 C963.6,405.6 956.6,380.3 940.6,382.6 C924.7,384.8 925,411 946.2,422.2 Z" fill="#fb9a5c" opacity="0.5"/>
<path d="M961.9,426.7 C985.8,428.5 999.9,406.4 987.6,396 C975.2,385.7 955.9,403.4 961.9,426.7 Z" fill="#fb9a5c" opacity="0.5"/>
<path d="M969,442 C983,461.5 1009,458.1 1009,442 C1009,425.9 983,422.5 969,442 Z" fill="#fb9a5c" opacity="0.5"/>
<path d="M961.3,457.8 C954.6,480.8 973.2,499.2 985.9,489.3 C998.6,479.4 985.3,456.8 961.3,457.8 Z" fill="#fb9a5c" opacity="0.5"/>
<path d="M943.8,461.3 C921.4,469.8 917.9,495.8 933.5,500 C949,504.1 959,479.9 943.8,461.3 Z" fill="#fb9a5c" opacity="0.5"/>
<path d="M930.2,448.8 C910.4,435.3 887.1,447.4 892.6,462.5 C898.1,477.7 923.7,472 930.2,448.8 Z" fill="#fb9a5c" opacity="0.5"/>
<circle cx="949" cy="442" r="33" fill="#efcb45"/>
<circle cx="949" cy="442" r="16.5" fill="#f4d860"/>
<line x1="972.2" y1="443.8" x2="978.1" y2="444.3" stroke="#6b3a1a" stroke-width="2.3" stroke-linecap="round"/>
<line x1="968.5" y1="446.3" x2="974.3" y2="447.5" stroke="#6b3a1a" stroke-width="2.3" stroke-linecap="round"/>
<line x1="969.4" y1="446.7" x2="975.2" y2="448" stroke="#6b3a1a" stroke-width="2.3" stroke-linecap="round"/>
<line x1="964.2" y1="452.2" x2="969.2" y2="455.5" stroke="#6b3a1a" stroke-width="2.3" stroke-linecap="round"/>
<line x1="969.9" y1="457.5" x2="974.6" y2="461.1" stroke="#6b3a1a" stroke-width="2.3" stroke-linecap="round"/>
<line x1="960.8" y1="457.5" x2="964.4" y2="462.2" stroke="#6b3a1a" stroke-width="2.3" stroke-linecap="round"/>
<line x1="955.4" y1="453.9" x2="958.3" y2="459.2" stroke="#6b3a1a" stroke-width="2.3" stroke-linecap="round"/>
<line x1="958.7" y1="464.6" x2="961.1" y2="470.1" stroke="#6b3a1a" stroke-width="2.3" stroke-linecap="round"/>
<line x1="951.5" y1="453.9" x2="952.8" y2="459.7" stroke="#6b3a1a" stroke-width="2.3" stroke-linecap="round"/>
<line x1="950.6" y1="454.9" x2="951.3" y2="460.8" stroke="#6b3a1a" stroke-width="2.3" stroke-linecap="round"/>
<line x1="946.2" y1="457" x2="945.1" y2="462.8" stroke="#6b3a1a" stroke-width="2.3" stroke-linecap="round"/>
<line x1="944.5" y1="461.7" x2="943.2" y2="467.5" stroke="#6b3a1a" stroke-width="2.3" stroke-linecap="round"/>
<line x1="943" y1="456.3" x2="940.7" y2="461.8" stroke="#6b3a1a" stroke-width="2.3" stroke-linecap="round"/>
<line x1="934" y1="460.8" x2="930.3" y2="465.4" stroke="#6b3a1a" stroke-width="2.3" stroke-linecap="round"/>
<line x1="940.9" y1="449.8" x2="936.6" y2="454" stroke="#6b3a1a" stroke-width="2.3" stroke-linecap="round"/>
<line x1="939.1" y1="447.2" x2="933.9" y2="450" stroke="#6b3a1a" stroke-width="2.3" stroke-linecap="round"/>
<line x1="932.4" y1="449" x2="926.9" y2="451.3" stroke="#6b3a1a" stroke-width="2.3" stroke-linecap="round"/>
<line x1="926.5" y1="443.4" x2="920.6" y2="443.8" stroke="#6b3a1a" stroke-width="2.3" stroke-linecap="round"/>
<line x1="926.9" y1="441.4" x2="920.9" y2="441.2" stroke="#6b3a1a" stroke-width="2.3" stroke-linecap="round"/>
<line x1="935" y1="440.4" x2="929.1" y2="439.8" stroke="#6b3a1a" stroke-width="2.3" stroke-linecap="round"/>
<line x1="929.1" y1="435.9" x2="923.4" y2="434.2" stroke="#6b3a1a" stroke-width="2.3" stroke-linecap="round"/>
<line x1="938.3" y1="436.9" x2="932.9" y2="434.3" stroke="#6b3a1a" stroke-width="2.3" stroke-linecap="round"/>
<line x1="930.8" y1="424.5" x2="926.5" y2="420.3" stroke="#6b3a1a" stroke-width="2.3" stroke-linecap="round"/>
<line x1="941" y1="434.2" x2="936.8" y2="430" stroke="#6b3a1a" stroke-width="2.3" stroke-linecap="round"/>
<line x1="938" y1="418.7" x2="935.4" y2="413.3" stroke="#6b3a1a" stroke-width="2.3" stroke-linecap="round"/>
<line x1="944.6" y1="422.2" x2="943.3" y2="416.4" stroke="#6b3a1a" stroke-width="2.3" stroke-linecap="round"/>
<line x1="946.6" y1="415" x2="946" y2="409.1" stroke="#6b3a1a" stroke-width="2.3" stroke-linecap="round"/>
<line x1="951.7" y1="419" x2="952.4" y2="413.1" stroke="#6b3a1a" stroke-width="2.3" stroke-linecap="round"/>
<line x1="951.9" y1="432.2" x2="953.6" y2="426.5" stroke="#6b3a1a" stroke-width="2.3" stroke-linecap="round"/>
<line x1="955" y1="416.5" x2="956.3" y2="410.7" stroke="#6b3a1a" stroke-width="2.3" stroke-linecap="round"/>
<line x1="959.5" y1="426.9" x2="962.8" y2="422" stroke="#6b3a1a" stroke-width="2.3" stroke-linecap="round"/>
<line x1="960.7" y1="430.7" x2="964.9" y2="426.6" stroke="#6b3a1a" stroke-width="2.3" stroke-linecap="round"/>
<line x1="963.3" y1="431.2" x2="968" y2="427.7" stroke="#6b3a1a" stroke-width="2.3" stroke-linecap="round"/>
<line x1="964.2" y1="435.4" x2="969.6" y2="433.1" stroke="#6b3a1a" stroke-width="2.3" stroke-linecap="round"/>
<line x1="971.1" y1="431.6" x2="976.5" y2="429.1" stroke="#6b3a1a" stroke-width="2.3" stroke-linecap="round"/>
<line x1="967.6" y1="440.4" x2="973.5" y2="439.9" stroke="#6b3a1a" stroke-width="2.3" stroke-linecap="round"/>
<path d="M883,379 C893.2,350.5 909.1,326.5 878.6,329.2 C848.2,331.9 868.1,352.7 883,379 Z" fill="#f6a51f" />
<path d="M883,379 C912.1,367.7 941.4,363.9 919.8,342.2 C898.1,320.6 894.3,349.9 883,379 Z" fill="#f6a51f" />
<path d="M883,379 C911.6,391.6 935,409.6 935,379 C935,348.4 911.6,366.4 883,379 Z" fill="#f6a51f" />
<path d="M883,379 C891,408.2 891.7,437 915.1,417.3 C938.6,397.6 910.3,392 883,379 Z" fill="#f6a51f" />
<path d="M883,379 C866,402.8 844.5,421 874.7,426.3 C904.8,431.6 890.8,407.2 883,379 Z" fill="#f6a51f" />
<path d="M883,379 C851.9,382.4 822.7,378.5 838,405 C853.3,431.5 864.5,404.2 883,379 Z" fill="#f6a51f" />
<path d="M883,379 C866.8,352.3 858,324.1 840.4,349.2 C822.9,374.2 852.3,372.9 883,379 Z" fill="#f6a51f" />
<circle cx="883" cy="378" r="21" fill="#efcb45"/>
<circle cx="883" cy="378" r="10.5" fill="#f4d860"/>
<line x1="892.6" y1="376.9" x2="896.4" y2="376.4" stroke="#6b3a1a" stroke-width="1.5" stroke-linecap="round"/>
<line x1="896.1" y1="380.2" x2="899.8" y2="380.8" stroke="#6b3a1a" stroke-width="1.5" stroke-linecap="round"/>
<line x1="891.2" y1="382.7" x2="894.5" y2="384.6" stroke="#6b3a1a" stroke-width="1.5" stroke-linecap="round"/>
<line x1="895.2" y1="389.5" x2="897.9" y2="392.1" stroke="#6b3a1a" stroke-width="1.5" stroke-linecap="round"/>
<line x1="886.7" y1="385.1" x2="888.5" y2="388.5" stroke="#6b3a1a" stroke-width="1.5" stroke-linecap="round"/>
<line x1="884.9" y1="393.5" x2="885.4" y2="397.2" stroke="#6b3a1a" stroke-width="1.5" stroke-linecap="round"/>
<line x1="882.3" y1="384.6" x2="882" y2="388.4" stroke="#6b3a1a" stroke-width="1.5" stroke-linecap="round"/>
<line x1="880.2" y1="392" x2="879.5" y2="395.7" stroke="#6b3a1a" stroke-width="1.5" stroke-linecap="round"/>
<line x1="876.3" y1="391.7" x2="874.7" y2="395.1" stroke="#6b3a1a" stroke-width="1.5" stroke-linecap="round"/>
<line x1="869.6" y1="388.2" x2="866.6" y2="390.5" stroke="#6b3a1a" stroke-width="1.5" stroke-linecap="round"/>
<line x1="871.9" y1="385.6" x2="868.8" y2="387.7" stroke="#6b3a1a" stroke-width="1.5" stroke-linecap="round"/>
<line x1="867" y1="380.5" x2="863.3" y2="381.1" stroke="#6b3a1a" stroke-width="1.5" stroke-linecap="round"/>
<line x1="869.5" y1="376.8" x2="865.8" y2="376.5" stroke="#6b3a1a" stroke-width="1.5" stroke-linecap="round"/>
<line x1="869" y1="373.1" x2="865.4" y2="371.8" stroke="#6b3a1a" stroke-width="1.5" stroke-linecap="round"/>
<line x1="870" y1="369.8" x2="866.8" y2="367.8" stroke="#6b3a1a" stroke-width="1.5" stroke-linecap="round"/>
<line x1="874.3" y1="368.8" x2="871.7" y2="366" stroke="#6b3a1a" stroke-width="1.5" stroke-linecap="round"/>
<line x1="875.6" y1="362.6" x2="874" y2="359.1" stroke="#6b3a1a" stroke-width="1.5" stroke-linecap="round"/>
<line x1="880.7" y1="364.1" x2="880.1" y2="360.4" stroke="#6b3a1a" stroke-width="1.5" stroke-linecap="round"/>
<line x1="883.8" y1="365.8" x2="884.1" y2="362" stroke="#6b3a1a" stroke-width="1.5" stroke-linecap="round"/>
<line x1="885.5" y1="370" x2="886.7" y2="366.4" stroke="#6b3a1a" stroke-width="1.5" stroke-linecap="round"/>
<line x1="889.4" y1="366.2" x2="891.2" y2="362.9" stroke="#6b3a1a" stroke-width="1.5" stroke-linecap="round"/>
<line x1="893.4" y1="367.8" x2="896" y2="365.1" stroke="#6b3a1a" stroke-width="1.5" stroke-linecap="round"/>
<line x1="894" y1="373.1" x2="897.5" y2="371.6" stroke="#6b3a1a" stroke-width="1.5" stroke-linecap="round"/>
<line x1="896.1" y1="373.5" x2="899.7" y2="372.3" stroke="#6b3a1a" stroke-width="1.5" stroke-linecap="round"/>
<path d="M955.5,345.7 Q957.3,351.9 961.1,353.7 Q957.3,355.5 955.5,361.7 Q953.7,355.5 949.9,353.7 Q953.7,351.9 955.5,345.7 Z" fill="#f3a622"/>
<path d="M840.7,477.7 Q842.5,483.9 846.3,485.7 Q842.5,487.5 840.7,493.7 Q838.9,487.5 835.1,485.7 Q838.9,483.9 840.7,477.7 Z" fill="#f3a622"/>
<path d="M1029.5,477.7 Q1031.3,483.9 1035.1,485.7 Q1031.3,487.5 1029.5,493.7 Q1027.7,487.5 1023.9,485.7 Q1027.7,483.9 1029.5,477.7 Z" fill="#f3a622"/>
<circle cx="968.8" cy="335" r="2.8" fill="#f3a622"/>
<circle cx="934.4" cy="347" r="2.8" fill="#f3a622"/>
<circle cx="828.8" cy="466" r="2.8" fill="#f3a622"/>
<circle cx="1016" cy="503" r="2.8" fill="#f3a622"/>
<circle cx="1045" cy="499" r="2.8" fill="#f3a622"/>
<!-- t04.py -->
<path d="M1257,415 C1262,428 1268,438 1271,446 C1280,490 1310,540 1340,580" stroke="#3e6e22" stroke-width="2.2" fill="none"/>
<path d="M1280,398 C1277,420 1273,435 1271,446 C1285,495 1320,540 1357,562" stroke="#3e6e22" stroke-width="2" fill="none"/>
<path d="M1338,402 C1310,405 1285,425 1271,446 C1276,490 1300,530 1330,577" stroke="#3e6e22" stroke-width="2" fill="none"/>
<path d="M1271,446 C1276,490 1296,520 1320,548" stroke="#2e5a18" stroke-width="3" fill="none"/>
<path d="M1272,445 C1251.4,445.7 1236.1,464.5 1232,480 C1250.6,481 1271.2,468.3 1272,445 Z" fill="#4b7d26" />
<path d="M1274,444 C1293.5,457.2 1316,448.1 1326,432 C1311.3,427.7 1287.1,429.4 1274,444 Z" fill="#4b7d26" />
<path d="M1258,412 C1240,385 1215,362 1185,361 C1160,360 1140,372 1140,392 C1140,402 1145,410 1138,420 C1130,436 1135,458 1152,462 C1162,468 1165,482 1180,486 C1210,486 1240,460 1258,412Z" fill="#924f82"/>
<path d="M1258,412 C1245,392 1235,380 1210,370 C1202,380 1205,392 1212,398 C1205,410 1206,428 1222,432 C1228,440 1235,445 1240,444 C1248,435 1254,425 1258,412Z" fill="#5f3552"/>
<circle cx="1171" cy="384.5" r="2.6" fill="#5f3552"/>
<circle cx="1183" cy="386" r="2.6" fill="#5f3552"/>
<circle cx="1174" cy="394" r="2.6" fill="#5f3552"/>
<circle cx="1281" cy="329" r="49.5" fill="#e0552f"/>
<circle cx="1264.9" cy="294.6" r="28" fill="#e0552f"/>
<circle cx="1308.8" cy="303.1" r="28" fill="#e0552f"/>
<circle cx="1314.2" cy="347.4" r="28" fill="#e0552f"/>
<circle cx="1273.7" cy="366.3" r="28" fill="#e0552f"/>
<circle cx="1243.3" cy="333.6" r="28" fill="#e0552f"/>
<circle cx="1281" cy="329" r="20" fill="#fff"/>
<circle cx="1380" cy="400" r="44.2" fill="#f0b83a"/>
<circle cx="1373.6" cy="363.6" r="22" fill="#f0b83a"/>
<circle cx="1408.3" cy="376.2" r="22" fill="#f0b83a"/>
<circle cx="1414.8" cy="412.7" r="22" fill="#f0b83a"/>
<circle cx="1386.4" cy="436.4" r="22" fill="#f0b83a"/>
<circle cx="1351.7" cy="423.8" r="22" fill="#f0b83a"/>
<circle cx="1345.2" cy="387.3" r="22" fill="#f0b83a"/>
<circle cx="1380" cy="400" r="15" fill="#fff"/>
<!-- t05.py -->
<circle cx="259" cy="774" r="104" fill="none" stroke="#f5c0dd" stroke-width="1"/>
<circle cx="256" cy="776" r="100" fill="none" stroke="#f5c0dd" stroke-width="1"/>
<line x1="178" y1="683" x2="166" y2="660" stroke="#333" stroke-width="0.6"/>
<circle cx="173" cy="677.2" r="1.8" fill="#fff" stroke="#333" stroke-width="0.6"/>
<circle cx="174" cy="671.5" r="1.8" fill="#fff" stroke="#333" stroke-width="0.6"/>
<circle cx="167" cy="665.8" r="1.8" fill="#fff" stroke="#333" stroke-width="0.6"/>
<circle cx="168" cy="660" r="1.8" fill="#fff" stroke="#333" stroke-width="0.6"/>
<line x1="200" y1="735" x2="214" y2="750" stroke="#333" stroke-width="0.6"/>
<circle cx="201.5" cy="738.8" r="1.8" fill="#fff" stroke="#333" stroke-width="0.6"/>
<circle cx="209" cy="742.5" r="1.8" fill="#fff" stroke="#333" stroke-width="0.6"/>
<circle cx="208.5" cy="746.2" r="1.8" fill="#fff" stroke="#333" stroke-width="0.6"/>
<circle cx="216" cy="750" r="1.8" fill="#fff" stroke="#333" stroke-width="0.6"/>
<path d="M176,690 C189.6,682.2 189.2,666.8 182,657 C171.8,663.7 166,678 176,690 Z" fill="#fff" stroke="#333" stroke-width="0.6"/>
<path d="M196,716 C198.4,733.8 215.3,740.7 229,738 C226.2,724.3 213.4,711.4 196,716 Z" fill="#fff" stroke="#333" stroke-width="0.6"/>
<line x1="190" y1="689" x2="212" y2="654" stroke="#222" stroke-width="0.8"/>
<path d="M191.8,686.1 C195.8,688.5 199.1,686 200.1,682.6 C197,681 192.8,681.6 191.8,686.1 Z" fill="#1c1c1c" />
<path d="M194.4,682 C198,679.1 196.8,675.1 194,673 C191.3,675.4 190.5,679.5 194.4,682 Z" fill="#1c1c1c" />
<path d="M197,677.9 C200.9,680.3 204.3,677.8 205.3,674.4 C202.1,672.7 198,673.4 197,677.9 Z" fill="#1c1c1c" />
<path d="M199.6,673.8 C203.2,670.9 202,666.9 199.1,664.8 C196.5,667.2 195.7,671.3 199.6,673.8 Z" fill="#1c1c1c" />
<path d="M202.2,669.6 C206.1,672.1 209.5,669.6 210.5,666.2 C207.3,664.5 203.2,665.1 202.2,669.6 Z" fill="#1c1c1c" />
<path d="M204.8,665.5 C208.4,662.6 207.2,658.7 204.3,656.5 C201.7,658.9 200.9,663 204.8,665.5 Z" fill="#1c1c1c" />
<path d="M207.3,661.4 C211.3,663.8 214.6,661.3 215.6,657.9 C212.5,656.3 208.4,656.9 207.3,661.4 Z" fill="#1c1c1c" />
<path d="M209.9,657.3 C213.5,654.4 212.3,650.4 209.5,648.3 C206.8,650.7 206,654.8 209.9,657.3 Z" fill="#1c1c1c" />
<path d="M210.9,655.7 C215.9,654.9 217.7,650.2 216.8,646.4 C213,647.2 209.5,650.9 210.9,655.7 Z" fill="#1c1c1c" />
<line x1="202" y1="694" x2="234" y2="719" stroke="#222" stroke-width="0.8"/>
<path d="M204.6,696.1 C201.8,699.7 204,703.3 207.3,704.7 C209.2,701.7 209,697.5 204.6,696.1 Z" fill="#1c1c1c" />
<path d="M208.4,699 C210.9,702.9 215,702.1 217.4,699.5 C215.3,696.6 211.3,695.4 208.4,699 Z" fill="#1c1c1c" />
<path d="M212.2,701.9 C209.4,705.6 211.5,709.2 214.8,710.5 C216.8,707.6 216.5,703.4 212.2,701.9 Z" fill="#1c1c1c" />
<path d="M215.9,704.9 C218.4,708.8 222.5,708 224.9,705.4 C222.8,702.5 218.8,701.3 215.9,704.9 Z" fill="#1c1c1c" />
<path d="M219.7,707.8 C216.9,711.5 219,715.1 222.3,716.4 C224.3,713.5 224.1,709.3 219.7,707.8 Z" fill="#1c1c1c" />
<path d="M223.5,710.8 C226,714.7 230.1,713.9 232.4,711.2 C230.3,708.4 226.4,707.2 223.5,710.8 Z" fill="#1c1c1c" />
<path d="M227.2,713.7 C224.4,717.4 226.6,721 229.9,722.3 C231.8,719.4 231.6,715.2 227.2,713.7 Z" fill="#1c1c1c" />
<path d="M231,716.6 C233.5,720.5 237.6,719.7 240,717.1 C237.9,714.3 233.9,713 231,716.6 Z" fill="#1c1c1c" />
<path d="M232.4,717.8 C232.7,722.8 237.2,725 241.1,724.5 C240.6,720.7 237.3,716.8 232.4,717.8 Z" fill="#1c1c1c" />
<line x1="186" y1="733" x2="200" y2="757" stroke="#222" stroke-width="0.8"/>
<path d="M187.5,735.6 C183.5,738 184.2,742.1 186.8,744.6 C189.7,742.5 191,738.6 187.5,735.6 Z" fill="#1c1c1c" />
<path d="M189.7,739.3 C190.5,743.8 194.6,744.6 197.8,743 C196.9,739.6 193.7,737 189.7,739.3 Z" fill="#1c1c1c" />
<path d="M191.8,743 C187.9,745.3 188.5,749.5 191.1,751.9 C194,749.9 195.3,746 191.8,743 Z" fill="#1c1c1c" />
<path d="M194,746.7 C194.9,751.2 198.9,752 202.1,750.4 C201.3,747 198,744.4 194,746.7 Z" fill="#1c1c1c" />
<path d="M196.1,750.4 C192.2,752.7 192.8,756.9 195.4,759.3 C198.3,757.3 199.6,753.4 196.1,750.4 Z" fill="#1c1c1c" />
<path d="M198.3,754 C199.2,758.6 203.3,759.4 206.5,757.8 C205.6,754.4 202.3,751.8 198.3,754 Z" fill="#1c1c1c" />
<path d="M199,755.3 C197.4,760 200.8,763.8 204.5,764.8 C205.5,761 203.9,756.2 199,755.3 Z" fill="#1c1c1c" />
<line x1="155" y1="713" x2="134" y2="733" stroke="#222" stroke-width="0.8"/>
<path d="M152.7,715.2 C149.5,711.8 145.7,713.4 143.8,716.5 C146.5,718.9 150.6,719.3 152.7,715.2 Z" fill="#1c1c1c" />
<path d="M149.5,718.2 C145.3,720.1 145.5,724.3 147.7,727.1 C150.9,725.4 152.7,721.6 149.5,718.2 Z" fill="#1c1c1c" />
<path d="M146.3,721.3 C143,718 139.2,719.6 137.4,722.7 C140,725 144.2,725.4 146.3,721.3 Z" fill="#1c1c1c" />
<path d="M143,724.4 C138.8,726.3 139,730.5 141.3,733.2 C144.4,731.5 146.2,727.8 143,724.4 Z" fill="#1c1c1c" />
<path d="M139.8,727.5 C136.6,724.2 132.7,725.8 130.9,728.8 C133.6,731.2 137.7,731.6 139.8,727.5 Z" fill="#1c1c1c" />
<path d="M136.6,730.5 C132.4,732.4 132.6,736.6 134.8,739.4 C137.9,737.7 139.7,733.9 136.6,730.5 Z" fill="#1c1c1c" />
<path d="M135.4,731.6 C130.5,731.2 127.6,735.3 127.5,739.2 C131.4,739.3 135.6,736.6 135.4,731.6 Z" fill="#1c1c1c" />
<line x1="203" y1="688" x2="250" y2="659" stroke="#1c1c1c" stroke-width="0.8"/>
<path d="M206.1,686.1 C209.5,690.8 214.9,689.9 218.1,686.8 C215.3,683.3 210,681.8 206.1,686.1 Z" fill="#2e5fcc" />
<path d="M210.6,683.3 C216.2,681.8 217.2,676.3 215.4,672.3 C211.1,673.7 207.9,678.2 210.6,683.3 Z" fill="#2e5fcc" />
<path d="M215.1,680.5 C218.4,685.2 223.9,684.4 227.1,681.2 C224.3,677.8 218.9,676.3 215.1,680.5 Z" fill="#2e5fcc" />
<path d="M219.6,677.8 C225.1,676.3 226.2,670.8 224.3,666.8 C220.1,668.2 216.9,672.7 219.6,677.8 Z" fill="#2e5fcc" />
<path d="M224,675 C227.4,679.7 232.8,678.8 236,675.7 C233.2,672.2 227.9,670.7 224,675 Z" fill="#2e5fcc" />
<path d="M228.5,672.3 C234.1,670.7 235.1,665.3 233.3,661.2 C229,662.7 225.8,667.2 228.5,672.3 Z" fill="#2e5fcc" />
<path d="M233,669.5 C236.3,674.2 241.8,673.3 245,670.2 C242.2,666.7 236.8,665.2 233,669.5 Z" fill="#2e5fcc" />
<path d="M237.5,666.7 C243,665.2 244.1,659.8 242.2,655.7 C238,657.2 234.8,661.6 237.5,666.7 Z" fill="#2e5fcc" />
<path d="M241.9,664 C245.3,668.7 250.7,667.8 253.9,664.7 C251.1,661.2 245.8,659.7 241.9,664 Z" fill="#2e5fcc" />
<path d="M246.4,661.2 C252,659.7 253,654.3 251.2,650.2 C247,651.6 243.7,656.1 246.4,661.2 Z" fill="#2e5fcc" />
<path d="M248.3,660.1 C254.2,661.7 259,657.3 260.2,652.7 C255.5,651.7 249.5,654 248.3,660.1 Z" fill="#2e5fcc" />
<line x1="157" y1="724" x2="137" y2="772" stroke="#1c1c1c" stroke-width="0.8"/>
<path d="M155.4,728 C149.9,726.1 146,730 145.2,734.4 C149.5,735.6 154.7,733.7 155.4,728 Z" fill="#2e5fcc" />
<path d="M153,733.6 C149.4,738.1 151.7,743.1 155.6,745.3 C158.2,741.7 158.2,736.2 153,733.6 Z" fill="#2e5fcc" />
<path d="M150.6,739.2 C145.2,737.4 141.3,741.3 140.5,745.7 C144.8,746.9 150,745 150.6,739.2 Z" fill="#2e5fcc" />
<path d="M148.3,744.9 C144.7,749.4 147,754.4 150.9,756.6 C153.4,753 153.5,747.4 148.3,744.9 Z" fill="#2e5fcc" />
<path d="M145.9,750.5 C140.5,748.7 136.6,752.6 135.8,757 C140.1,758.1 145.3,756.3 145.9,750.5 Z" fill="#2e5fcc" />
<path d="M143.6,756.2 C140,760.7 142.3,765.7 146.2,767.9 C148.7,764.3 148.8,758.7 143.6,756.2 Z" fill="#2e5fcc" />
<path d="M141.2,761.8 C135.8,760 131.9,763.9 131.1,768.3 C135.4,769.4 140.6,767.6 141.2,761.8 Z" fill="#2e5fcc" />
<path d="M138.9,767.5 C135.3,772 137.6,777 141.5,779.2 C144,775.6 144,770 138.9,767.5 Z" fill="#2e5fcc" />
<path d="M137.8,770.2 C132,772.3 130.7,778.6 132.4,783.1 C136.8,781.1 140.3,775.8 137.8,770.2 Z" fill="#2e5fcc" />
<line x1="210" y1="700" x2="273" y2="695" stroke="#1c1c1c" stroke-width="0.8"/>
<path d="M214.2,699.7 C214.8,705.2 219.6,706.7 223.7,705.2 C223,701 219.3,697.5 214.2,699.7 Z" fill="#f3bdd4" stroke="#333" stroke-width="0.6"/>
<path d="M220.2,699.2 C225.6,700.6 228.7,696.5 228.7,692.2 C224.5,691.4 219.9,693.6 220.2,699.2 Z" fill="#f3bdd4" stroke="#333" stroke-width="0.6"/>
<path d="M226.2,698.7 C226.8,704.3 231.6,705.7 235.7,704.3 C235,700.1 231.3,696.5 226.2,698.7 Z" fill="#f3bdd4" stroke="#333" stroke-width="0.6"/>
<path d="M232.2,698.2 C237.6,699.6 240.7,695.5 240.7,691.2 C236.5,690.4 231.9,692.7 232.2,698.2 Z" fill="#f3bdd4" stroke="#333" stroke-width="0.6"/>
<path d="M238.2,697.8 C238.8,703.3 243.6,704.8 247.7,703.3 C247,699.1 243.3,695.6 238.2,697.8 Z" fill="#f3bdd4" stroke="#333" stroke-width="0.6"/>
<path d="M244.2,697.3 C249.6,698.7 252.7,694.6 252.7,690.3 C248.5,689.5 243.9,691.7 244.2,697.3 Z" fill="#f3bdd4" stroke="#333" stroke-width="0.6"/>
<path d="M250.2,696.8 C250.8,702.4 255.6,703.8 259.7,702.4 C259,698.1 255.3,694.6 250.2,696.8 Z" fill="#f3bdd4" stroke="#333" stroke-width="0.6"/>
<path d="M256.2,696.3 C261.6,697.7 264.7,693.6 264.7,689.3 C260.5,688.5 255.9,690.8 256.2,696.3 Z" fill="#f3bdd4" stroke="#333" stroke-width="0.6"/>
<path d="M262.2,695.9 C262.8,701.4 267.6,702.9 271.7,701.4 C271,697.2 267.3,693.7 262.2,695.9 Z" fill="#f3bdd4" stroke="#333" stroke-width="0.6"/>
<path d="M268.2,695.4 C273.6,696.8 276.7,692.7 276.7,688.4 C272.5,687.6 267.9,689.8 268.2,695.4 Z" fill="#f3bdd4" stroke="#333" stroke-width="0.6"/>
<path d="M271,695.2 C275.3,699.3 281,697.7 284,694.1 C280.5,691.1 274.5,690.4 271,695.2 Z" fill="#f3bdd4" stroke="#333" stroke-width="0.6"/>
<line x1="169" y1="733" x2="176" y2="797" stroke="#1c1c1c" stroke-width="0.8"/>
<path d="M169.5,737.3 C163.9,738 162.6,742.9 164.2,746.9 C168.4,746.1 171.8,742.3 169.5,737.3 Z" fill="#f3bdd4" stroke="#333" stroke-width="0.6"/>
<path d="M170.1,743.4 C168.9,748.8 173.1,751.7 177.4,751.6 C178.1,747.4 175.7,742.9 170.1,743.4 Z" fill="#f3bdd4" stroke="#333" stroke-width="0.6"/>
<path d="M170.8,749.5 C165.3,750.2 163.9,755.1 165.5,759.1 C169.7,758.3 173.2,754.5 170.8,749.5 Z" fill="#f3bdd4" stroke="#333" stroke-width="0.6"/>
<path d="M171.5,755.6 C170.3,761 174.4,763.9 178.7,763.8 C179.4,759.6 177,755.1 171.5,755.6 Z" fill="#f3bdd4" stroke="#333" stroke-width="0.6"/>
<path d="M172.1,761.6 C166.6,762.4 165.3,767.3 166.8,771.3 C171.1,770.5 174.5,766.7 172.1,761.6 Z" fill="#f3bdd4" stroke="#333" stroke-width="0.6"/>
<path d="M172.8,767.7 C171.6,773.2 175.8,776.1 180.1,776 C180.7,771.8 178.4,767.3 172.8,767.7 Z" fill="#f3bdd4" stroke="#333" stroke-width="0.6"/>
<path d="M173.5,773.8 C167.9,774.6 166.6,779.5 168.2,783.5 C172.4,782.7 175.8,778.9 173.5,773.8 Z" fill="#f3bdd4" stroke="#333" stroke-width="0.6"/>
<path d="M174.1,779.9 C172.9,785.4 177.1,788.3 181.4,788.2 C182.1,784 179.7,779.4 174.1,779.9 Z" fill="#f3bdd4" stroke="#333" stroke-width="0.6"/>
<path d="M174.8,786 C169.3,786.8 167.9,791.7 169.5,795.7 C173.7,794.8 177.2,791.1 174.8,786 Z" fill="#f3bdd4" stroke="#333" stroke-width="0.6"/>
<path d="M175.5,792.1 C174.3,797.6 178.4,800.5 182.7,800.4 C183.4,796.2 181,791.6 175.5,792.1 Z" fill="#f3bdd4" stroke="#333" stroke-width="0.6"/>
<path d="M175.8,795 C171.7,799.4 173.6,805.1 177.2,807.9 C180.1,804.3 180.7,798.4 175.8,795 Z" fill="#f3bdd4" stroke="#333" stroke-width="0.6"/>
<path d="M185,690 C190,683.1 187.1,674.3 182,670 C178.4,675.7 178.2,684.9 185,690 Z" fill="#2e5fcc" />
<path d="M170,700 C164.1,686 149.8,685.5 140,692 C145.2,702.5 157.9,709.2 170,700 Z" fill="#ef5a32" stroke="#333" stroke-width="0.6"/>
<path d="M180.5,706 C189.5,688.3 170.7,678.7 169.6,679.1 C168.5,679.6 161.7,699.5 180.5,706 Z" fill="#f0990f" stroke="#3a2a10" stroke-width="0.7"/>
<path d="M180.5,706 C198.2,715 207.8,696.2 207.4,695.1 C206.9,694 187,687.2 180.5,706 Z" fill="#f0990f" stroke="#3a2a10" stroke-width="0.7"/>
<path d="M180.5,706 C171.5,723.7 190.3,733.3 191.4,732.9 C192.5,732.4 199.3,712.5 180.5,706 Z" fill="#f0990f" stroke="#3a2a10" stroke-width="0.7"/>
<path d="M180.5,706 C162.8,697 153.2,715.8 153.6,716.9 C154.1,718 174,724.8 180.5,706 Z" fill="#f0990f" stroke="#3a2a10" stroke-width="0.7"/>
<path d="M180.5,706 C199.4,699.8 192.9,679.8 191.8,679.3 C190.7,678.8 171.8,688.1 180.5,706 Z" fill="#f0990f" stroke="#3a2a10" stroke-width="0.7"/>
<path d="M180.5,706 C186.7,724.9 206.7,718.4 207.2,717.3 C207.7,716.2 198.4,697.3 180.5,706 Z" fill="#f0990f" stroke="#3a2a10" stroke-width="0.7"/>
<path d="M180.5,706 C161.6,712.2 168.1,732.2 169.2,732.7 C170.3,733.2 189.2,723.9 180.5,706 Z" fill="#f0990f" stroke="#3a2a10" stroke-width="0.7"/>
<path d="M180.5,706 C174.3,687.1 154.3,693.6 153.8,694.7 C153.3,695.8 162.6,714.7 180.5,706 Z" fill="#f0990f" stroke="#3a2a10" stroke-width="0.7"/>
<circle cx="180.5" cy="706" r="4" fill="#f0990f" stroke="#3a2a10" stroke-width="0.7"/>
<path d="M239,688 C241.7,683.5 240.8,679 239,679 C237.2,679 236.3,683.5 239,688 Z" fill="#ef5a32" stroke="#a33" stroke-width="0.7"/>
<path d="M239,688 C244.1,686.7 246.6,682.9 245.4,681.6 C244.1,680.4 240.3,682.9 239,688 Z" fill="#ef5a32" stroke="#a33" stroke-width="0.7"/>
<path d="M239,688 C243.5,690.7 248,689.8 248,688 C248,686.2 243.5,685.3 239,688 Z" fill="#ef5a32" stroke="#a33" stroke-width="0.7"/>
<path d="M239,688 C240.3,693.1 244.1,695.6 245.4,694.4 C246.6,693.1 244.1,689.3 239,688 Z" fill="#ef5a32" stroke="#a33" stroke-width="0.7"/>
<path d="M239,688 C236.3,692.5 237.2,697 239,697 C240.8,697 241.7,692.5 239,688 Z" fill="#ef5a32" stroke="#a33" stroke-width="0.7"/>
<path d="M239,688 C233.9,689.3 231.4,693.1 232.6,694.4 C233.9,695.6 237.7,693.1 239,688 Z" fill="#ef5a32" stroke="#a33" stroke-width="0.7"/>
<path d="M239,688 C234.5,685.3 230,686.2 230,688 C230,689.8 234.5,690.7 239,688 Z" fill="#ef5a32" stroke="#a33" stroke-width="0.7"/>
<path d="M239,688 C237.7,682.9 233.9,680.4 232.6,681.6 C231.4,682.9 233.9,686.7 239,688 Z" fill="#ef5a32" stroke="#a33" stroke-width="0.7"/>
<path d="M276,673 C279.6,666.5 278.4,660 276,660 C273.6,660 272.4,666.5 276,673 Z" fill="#fff" stroke="#555" stroke-width="0.7"/>
<path d="M276,673 C283.1,670.9 286.9,665.5 285.2,663.8 C283.5,662.1 278.1,665.9 276,673 Z" fill="#fff" stroke="#555" stroke-width="0.7"/>
<path d="M276,673 C282.5,676.6 289,675.4 289,673 C289,670.6 282.5,669.4 276,673 Z" fill="#fff" stroke="#555" stroke-width="0.7"/>
<path d="M276,673 C278.1,680.1 283.5,683.9 285.2,682.2 C286.9,680.5 283.1,675.1 276,673 Z" fill="#fff" stroke="#555" stroke-width="0.7"/>
<path d="M276,673 C272.4,679.5 273.6,686 276,686 C278.4,686 279.6,679.5 276,673 Z" fill="#fff" stroke="#555" stroke-width="0.7"/>
<path d="M276,673 C268.9,675.1 265.1,680.5 266.8,682.2 C268.5,683.9 273.9,680.1 276,673 Z" fill="#fff" stroke="#555" stroke-width="0.7"/>
<path d="M276,673 C269.5,669.4 263,670.6 263,673 C263,675.4 269.5,676.6 276,673 Z" fill="#fff" stroke="#555" stroke-width="0.7"/>
<path d="M276,673 C273.9,665.9 268.5,662.1 266.8,663.8 C265.1,665.5 268.9,670.9 276,673 Z" fill="#fff" stroke="#555" stroke-width="0.7"/>
<circle cx="276" cy="673" r="1.5" fill="#f0990f"/>
<path d="M167,814 C171.8,807.5 170.2,801 167,801 C163.8,801 162.2,807.5 167,814 Z" fill="#2e5fcc" stroke="#2e5fcc" stroke-width="0.7"/>
<path d="M167,814 C175,812.8 178.5,807.1 176.2,804.8 C173.9,802.5 168.2,806 167,814 Z" fill="#2e5fcc" stroke="#2e5fcc" stroke-width="0.7"/>
<path d="M167,814 C173.5,818.8 180,817.2 180,814 C180,810.8 173.5,809.2 167,814 Z" fill="#2e5fcc" stroke="#2e5fcc" stroke-width="0.7"/>
<path d="M167,814 C168.2,822 173.9,825.5 176.2,823.2 C178.5,820.9 175,815.2 167,814 Z" fill="#2e5fcc" stroke="#2e5fcc" stroke-width="0.7"/>
<path d="M167,814 C162.2,820.5 163.8,827 167,827 C170.2,827 171.8,820.5 167,814 Z" fill="#2e5fcc" stroke="#2e5fcc" stroke-width="0.7"/>
<path d="M167,814 C159,815.2 155.5,820.9 157.8,823.2 C160.1,825.5 165.8,822 167,814 Z" fill="#2e5fcc" stroke="#2e5fcc" stroke-width="0.7"/>
<path d="M167,814 C160.5,809.2 154,810.8 154,814 C154,817.2 160.5,818.8 167,814 Z" fill="#2e5fcc" stroke="#2e5fcc" stroke-width="0.7"/>
<path d="M167,814 C165.8,806 160.1,802.5 157.8,804.8 C155.5,807.1 159,812.8 167,814 Z" fill="#2e5fcc" stroke="#2e5fcc" stroke-width="0.7"/>
<circle cx="167" cy="814" r="2" fill="#f0990f"/>
<line x1="318" y1="790" x2="315" y2="812" stroke="#333" stroke-width="0.6"/>
<circle cx="315.2" cy="795.5" r="1.8" fill="#fff" stroke="#333" stroke-width="0.6"/>
<circle cx="318.5" cy="801" r="1.8" fill="#fff" stroke="#333" stroke-width="0.6"/>
<circle cx="313.8" cy="806.5" r="1.8" fill="#fff" stroke="#333" stroke-width="0.6"/>
<circle cx="317" cy="812" r="1.8" fill="#fff" stroke="#333" stroke-width="0.6"/>
<line x1="340" y1="870" x2="350" y2="890" stroke="#333" stroke-width="0.6"/>
<circle cx="340.5" cy="875" r="1.8" fill="#fff" stroke="#333" stroke-width="0.6"/>
<circle cx="347" cy="880" r="1.8" fill="#fff" stroke="#333" stroke-width="0.6"/>
<circle cx="345.5" cy="885" r="1.8" fill="#fff" stroke="#333" stroke-width="0.6"/>
<circle cx="352" cy="890" r="1.8" fill="#fff" stroke="#333" stroke-width="0.6"/>
<path d="M320,830 C320.4,813.3 306.5,807.2 294,810 C294.5,822.8 304,834.7 320,830 Z" fill="#fff" stroke="#333" stroke-width="0.6"/>
<path d="M343,862 C334.2,874.4 341.3,887 352,892 C358.2,882 357.2,867.6 343,862 Z" fill="#fff" stroke="#333" stroke-width="0.6"/>
<line x1="323" y1="813" x2="321" y2="788" stroke="#222" stroke-width="0.8"/>
<path d="M322.8,810.3 C327.4,809.9 328.6,805.9 327.3,802.5 C323.8,803.1 320.9,806.1 322.8,810.3 Z" fill="#1c1c1c" />
<path d="M322.5,806.5 C323.6,802 320.3,799.5 316.7,799.5 C316.1,803 317.9,806.8 322.5,806.5 Z" fill="#1c1c1c" />
<path d="M322.2,802.6 C326.8,802.2 328,798.2 326.7,794.9 C323.2,795.4 320.3,798.4 322.2,802.6 Z" fill="#1c1c1c" />
<path d="M321.9,798.8 C323,794.3 319.7,791.8 316.1,791.8 C315.4,795.3 317.3,799.1 321.9,798.8 Z" fill="#1c1c1c" />
<path d="M321.6,794.9 C326.2,794.5 327.3,790.5 326.1,787.2 C322.6,787.7 319.7,790.7 321.6,794.9 Z" fill="#1c1c1c" />
<path d="M321.2,791.1 C322.4,786.6 319.1,784.1 315.5,784.1 C314.8,787.6 316.6,791.4 321.2,791.1 Z" fill="#1c1c1c" />
<path d="M321.2,790 C324.6,786.4 323.2,781.6 320.3,779 C317.8,782 317.2,787 321.2,790 Z" fill="#1c1c1c" />
<line x1="324" y1="866" x2="311" y2="891" stroke="#222" stroke-width="0.8"/>
<path d="M322.6,868.7 C318.5,866.6 315.3,869.4 314.6,872.9 C317.9,874.3 321.9,873.3 322.6,868.7 Z" fill="#1c1c1c" />
<path d="M320.6,872.5 C317.2,875.7 318.8,879.6 321.8,881.5 C324.2,878.9 324.7,874.7 320.6,872.5 Z" fill="#1c1c1c" />
<path d="M318.6,876.4 C314.5,874.3 311.3,877.1 310.6,880.5 C313.9,881.9 317.9,881 318.6,876.4 Z" fill="#1c1c1c" />
<path d="M316.6,880.2 C313.2,883.4 314.8,887.3 317.8,889.2 C320.2,886.6 320.7,882.4 316.6,880.2 Z" fill="#1c1c1c" />
<path d="M314.6,884.1 C310.5,882 307.3,884.8 306.6,888.2 C309.9,889.6 313.9,888.7 314.6,884.1 Z" fill="#1c1c1c" />
<path d="M312.6,887.9 C309.2,891.1 310.8,895 313.8,896.8 C316.2,894.3 316.7,890.1 312.6,887.9 Z" fill="#1c1c1c" />
<path d="M311.9,889.2 C307.1,890.4 305.7,895.3 306.8,899 C310.6,897.8 313.7,893.9 311.9,889.2 Z" fill="#1c1c1c" />
<line x1="345" y1="852" x2="385" y2="830" stroke="#222" stroke-width="0.8"/>
<path d="M349.3,849.6 C351.6,853.7 355.7,853.1 358.3,850.6 C356.3,847.6 352.4,846.2 349.3,849.6 Z" fill="#1c1c1c" />
<path d="M355.5,846.2 C360,845.5 360.9,841.4 359.4,838.2 C356,839 353.3,842.2 355.5,846.2 Z" fill="#1c1c1c" />
<path d="M361.6,842.9 C363.9,846.9 368,846.3 370.6,843.8 C368.6,840.9 364.7,839.4 361.6,842.9 Z" fill="#1c1c1c" />
<path d="M367.8,839.5 C372.3,838.7 373.2,834.6 371.7,831.4 C368.3,832.2 365.6,835.4 367.8,839.5 Z" fill="#1c1c1c" />
<path d="M373.9,836.1 C376.2,840.1 380.3,839.6 382.9,837.1 C380.9,834.1 377,832.7 373.9,836.1 Z" fill="#1c1c1c" />
<path d="M380.1,832.7 C384.6,831.9 385.5,827.9 384,824.6 C380.6,825.4 377.9,828.6 380.1,832.7 Z" fill="#1c1c1c" />
<path d="M383.2,831 C387.9,832.7 391.8,829.4 392.9,825.7 C389.2,824.6 384.3,826.1 383.2,831 Z" fill="#1c1c1c" />
<line x1="348" y1="828" x2="388" y2="781" stroke="#1c1c1c" stroke-width="0.8"/>
<path d="M350.7,824.9 C355.3,828.3 360.2,825.8 362.3,821.8 C358.5,819.4 353,819.6 350.7,824.9 Z" fill="#2e5fcc" />
<path d="M354.5,820.4 C359.3,817.2 358.6,811.7 355.6,808.4 C352,811.1 350.3,816.4 354.5,820.4 Z" fill="#2e5fcc" />
<path d="M358.3,815.9 C362.9,819.4 367.8,816.8 369.9,812.9 C366.2,810.5 360.6,810.7 358.3,815.9 Z" fill="#2e5fcc" />
<path d="M362.1,811.4 C366.9,808.3 366.2,802.8 363.2,799.5 C359.7,802.2 358,807.4 362.1,811.4 Z" fill="#2e5fcc" />
<path d="M365.9,807 C370.5,810.4 375.4,807.9 377.5,803.9 C373.8,801.5 368.3,801.7 365.9,807 Z" fill="#2e5fcc" />
<path d="M369.7,802.5 C374.5,799.3 373.8,793.8 370.8,790.5 C367.3,793.2 365.6,798.5 369.7,802.5 Z" fill="#2e5fcc" />
<path d="M373.5,798 C378.1,801.5 383.1,798.9 385.1,795 C381.4,792.5 375.9,792.7 373.5,798 Z" fill="#2e5fcc" />
<path d="M377.3,793.5 C382.2,790.4 381.5,784.9 378.5,781.6 C374.9,784.3 373.2,789.5 377.3,793.5 Z" fill="#2e5fcc" />
<path d="M381.1,789.1 C385.8,792.5 390.7,790 392.8,786 C389,783.6 383.5,783.8 381.1,789.1 Z" fill="#2e5fcc" />
<path d="M385,784.6 C389.8,781.4 389.1,775.9 386.1,772.6 C382.5,775.3 380.8,780.6 385,784.6 Z" fill="#2e5fcc" />
<path d="M386.7,782.5 C392.9,782.2 396,776.7 395.8,771.9 C391,772.4 386,776.4 386.7,782.5 Z" fill="#2e5fcc" />
<line x1="316" y1="858" x2="266" y2="884" stroke="#1c1c1c" stroke-width="0.8"/>
<path d="M312.7,859.7 C309.7,854.8 304.2,855.3 300.8,858.2 C303.3,861.8 308.5,863.7 312.7,859.7 Z" fill="#2e5fcc" />
<path d="M307.9,862.2 C302.3,863.3 300.8,868.7 302.4,872.9 C306.7,871.7 310.2,867.5 307.9,862.2 Z" fill="#2e5fcc" />
<path d="M303.1,864.7 C300.2,859.8 294.7,860.2 291.2,863.1 C293.8,866.8 299,868.7 303.1,864.7 Z" fill="#2e5fcc" />
<path d="M298.4,867.2 C292.7,868.3 291.3,873.6 292.8,877.8 C297.1,876.7 300.7,872.4 298.4,867.2 Z" fill="#2e5fcc" />
<path d="M293.6,869.6 C290.6,864.7 285.1,865.2 281.7,868.1 C284.3,871.7 289.5,873.6 293.6,869.6 Z" fill="#2e5fcc" />
<path d="M288.9,872.1 C283.2,873.2 281.8,878.6 283.3,882.8 C287.6,881.6 291.2,877.4 288.9,872.1 Z" fill="#2e5fcc" />
<path d="M284.1,874.6 C281.1,869.7 275.6,870.1 272.2,873 C274.7,876.7 279.9,878.6 284.1,874.6 Z" fill="#2e5fcc" />
<path d="M279.3,877.1 C273.7,878.2 272.2,883.5 273.8,887.7 C278.1,886.6 281.7,882.3 279.3,877.1 Z" fill="#2e5fcc" />
<path d="M274.6,879.5 C271.6,874.6 266.1,875.1 262.7,878 C265.2,881.6 270.4,883.5 274.6,879.5 Z" fill="#2e5fcc" />
<path d="M269.8,882 C264.2,883.1 262.7,888.5 264.3,892.7 C268.6,891.5 272.1,887.3 269.8,882 Z" fill="#2e5fcc" />
<path d="M267.8,883.1 C262,881 256.9,885 255.4,889.5 C260,890.8 266.1,889 267.8,883.1 Z" fill="#2e5fcc" />
<line x1="353" y1="808" x2="351" y2="753" stroke="#1c1c1c" stroke-width="0.8"/>
<path d="M352.9,804.3 C358.4,804 360.1,799.2 358.8,795.1 C354.6,795.6 350.9,799.1 352.9,804.3 Z" fill="#f3bdd4" stroke="#333" stroke-width="0.6"/>
<path d="M352.7,799.1 C354.3,793.7 350.3,790.5 346,790.3 C345.1,794.5 347.1,799.2 352.7,799.1 Z" fill="#f3bdd4" stroke="#333" stroke-width="0.6"/>
<path d="M352.5,793.9 C358.1,793.5 359.7,788.7 358.5,784.6 C354.2,785.1 350.5,788.6 352.5,793.9 Z" fill="#f3bdd4" stroke="#333" stroke-width="0.6"/>
<path d="M352.3,788.6 C353.9,783.3 350,780 345.7,779.8 C344.7,784 346.7,788.7 352.3,788.6 Z" fill="#f3bdd4" stroke="#333" stroke-width="0.6"/>
<path d="M352.1,783.4 C357.7,783.1 359.4,778.2 358.1,774.1 C353.8,774.7 350.1,778.2 352.1,783.4 Z" fill="#f3bdd4" stroke="#333" stroke-width="0.6"/>
<path d="M351.9,778.1 C353.5,772.8 349.6,769.6 345.3,769.4 C344.3,773.6 346.3,778.2 351.9,778.1 Z" fill="#f3bdd4" stroke="#333" stroke-width="0.6"/>
<path d="M351.7,772.9 C357.3,772.6 359,767.8 357.7,763.7 C353.4,764.2 349.7,767.7 351.7,772.9 Z" fill="#f3bdd4" stroke="#333" stroke-width="0.6"/>
<path d="M351.5,767.7 C353.1,762.3 349.2,759.1 344.9,758.9 C343.9,763.1 346,767.7 351.5,767.7 Z" fill="#f3bdd4" stroke="#333" stroke-width="0.6"/>
<path d="M351.3,762.4 C356.9,762.1 358.6,757.3 357.3,753.2 C353.1,753.7 349.4,757.2 351.3,762.4 Z" fill="#f3bdd4" stroke="#333" stroke-width="0.6"/>
<path d="M351.2,757.2 C352.8,751.8 348.8,748.6 344.5,748.4 C343.5,752.6 345.6,757.3 351.2,757.2 Z" fill="#f3bdd4" stroke="#333" stroke-width="0.6"/>
<path d="M351.1,755 C355.4,750.9 354,745.1 350.6,742 C347.4,745.4 346.4,751.3 351.1,755 Z" fill="#f3bdd4" stroke="#333" stroke-width="0.6"/>
<line x1="311" y1="846" x2="244" y2="846" stroke="#1c1c1c" stroke-width="0.8"/>
<path d="M306.5,846 C306.4,840.4 301.7,838.6 297.5,839.7 C297.9,844 301.2,847.8 306.5,846 Z" fill="#f3bdd4" stroke="#333" stroke-width="0.6"/>
<path d="M300.2,846 C294.9,844.2 291.5,848 291.1,852.3 C295.3,853.4 300,851.6 300.2,846 Z" fill="#f3bdd4" stroke="#333" stroke-width="0.6"/>
<path d="M293.8,846 C293.6,840.4 288.9,838.6 284.8,839.7 C285.1,844 288.5,847.8 293.8,846 Z" fill="#f3bdd4" stroke="#333" stroke-width="0.6"/>
<path d="M287.4,846 C282.1,844.2 278.7,848 278.4,852.3 C282.5,853.4 287.3,851.6 287.4,846 Z" fill="#f3bdd4" stroke="#333" stroke-width="0.6"/>
<path d="M281,846 C280.9,840.4 276.1,838.6 272,839.7 C272.4,844 275.7,847.8 281,846 Z" fill="#f3bdd4" stroke="#333" stroke-width="0.6"/>
<path d="M274.6,846 C269.3,844.2 266,848 265.6,852.3 C269.8,853.4 274.5,851.6 274.6,846 Z" fill="#f3bdd4" stroke="#333" stroke-width="0.6"/>
<path d="M268.2,846 C268.1,840.4 263.4,838.6 259.2,839.7 C259.6,844 263,847.8 268.2,846 Z" fill="#f3bdd4" stroke="#333" stroke-width="0.6"/>
<path d="M261.9,846 C256.6,844.2 253.2,848 252.9,852.3 C257,853.4 261.7,851.6 261.9,846 Z" fill="#f3bdd4" stroke="#333" stroke-width="0.6"/>
<path d="M255.5,846 C255.4,840.4 250.6,838.6 246.5,839.7 C246.8,844 250.2,847.8 255.5,846 Z" fill="#f3bdd4" stroke="#333" stroke-width="0.6"/>
<path d="M249.1,846 C243.8,844.2 240.5,848 240.1,852.3 C244.2,853.4 249,851.6 249.1,846 Z" fill="#f3bdd4" stroke="#333" stroke-width="0.6"/>
<path d="M246,846 C242.1,841.5 236.2,842.7 233,846 C236.2,849.3 242.1,850.5 246,846 Z" fill="#f3bdd4" stroke="#333" stroke-width="0.6"/>
<path d="M355,850 C355.9,864.1 367.3,866.7 377,862 C375.7,851.3 367.3,843.1 355,850 Z" fill="#ef5a32" stroke="#333" stroke-width="0.6"/>
<path d="M337,842 C346,824.3 327.2,814.7 326.1,815.1 C325,815.6 318.2,835.5 337,842 Z" fill="#f0990f" stroke="#3a2a10" stroke-width="0.7"/>
<path d="M337,842 C354.7,851 364.3,832.2 363.9,831.1 C363.4,830 343.5,823.2 337,842 Z" fill="#f0990f" stroke="#3a2a10" stroke-width="0.7"/>
<path d="M337,842 C328,859.7 346.8,869.3 347.9,868.9 C349,868.4 355.8,848.5 337,842 Z" fill="#f0990f" stroke="#3a2a10" stroke-width="0.7"/>
<path d="M337,842 C319.3,833 309.7,851.8 310.1,852.9 C310.6,854 330.5,860.8 337,842 Z" fill="#f0990f" stroke="#3a2a10" stroke-width="0.7"/>
<path d="M337,842 C355.9,835.8 349.4,815.8 348.3,815.3 C347.2,814.8 328.3,824.1 337,842 Z" fill="#f0990f" stroke="#3a2a10" stroke-width="0.7"/>
<path d="M337,842 C343.2,860.9 363.2,854.4 363.7,853.3 C364.2,852.2 354.9,833.3 337,842 Z" fill="#f0990f" stroke="#3a2a10" stroke-width="0.7"/>
<path d="M337,842 C318.1,848.2 324.6,868.2 325.7,868.7 C326.8,869.2 345.7,859.9 337,842 Z" fill="#f0990f" stroke="#3a2a10" stroke-width="0.7"/>
<path d="M337,842 C330.8,823.1 310.8,829.6 310.3,830.7 C309.8,831.8 319.1,850.7 337,842 Z" fill="#f0990f" stroke="#3a2a10" stroke-width="0.7"/>
<circle cx="337" cy="842" r="4" fill="#f0990f" stroke="#3a2a10" stroke-width="0.7"/>
<path d="M356,789 C359,783.5 358,778 356,778 C354,778 353,783.5 356,789 Z" fill="#ef5a32" stroke="#a33" stroke-width="0.7"/>
<path d="M356,789 C362,787.2 365.2,782.6 363.8,781.2 C362.4,779.8 357.8,783 356,789 Z" fill="#ef5a32" stroke="#a33" stroke-width="0.7"/>
<path d="M356,789 C361.5,792 367,791 367,789 C367,787 361.5,786 356,789 Z" fill="#ef5a32" stroke="#a33" stroke-width="0.7"/>
<path d="M356,789 C357.8,795 362.4,798.2 363.8,796.8 C365.2,795.4 362,790.8 356,789 Z" fill="#ef5a32" stroke="#a33" stroke-width="0.7"/>
<path d="M356,789 C353,794.5 354,800 356,800 C358,800 359,794.5 356,789 Z" fill="#ef5a32" stroke="#a33" stroke-width="0.7"/>
<path d="M356,789 C350,790.8 346.8,795.4 348.2,796.8 C349.6,798.2 354.2,795 356,789 Z" fill="#ef5a32" stroke="#a33" stroke-width="0.7"/>
<path d="M356,789 C350.5,786 345,787 345,789 C345,791 350.5,792 356,789 Z" fill="#ef5a32" stroke="#a33" stroke-width="0.7"/>
<path d="M356,789 C354.2,783 349.6,779.8 348.2,781.2 C346.8,782.6 350,787.2 356,789 Z" fill="#ef5a32" stroke="#a33" stroke-width="0.7"/>
<path d="M246.5,876 C249.5,871 248.5,866 246.5,866 C244.5,866 243.5,871 246.5,876 Z" fill="#f7b51c" stroke="#f7b51c" stroke-width="0.7"/>
<path d="M246.5,876 C252.2,874.6 255,870.3 253.6,868.9 C252.2,867.5 247.9,870.3 246.5,876 Z" fill="#f7b51c" stroke="#f7b51c" stroke-width="0.7"/>
<path d="M246.5,876 C251.5,879 256.5,878 256.5,876 C256.5,874 251.5,873 246.5,876 Z" fill="#f7b51c" stroke="#f7b51c" stroke-width="0.7"/>
<path d="M246.5,876 C247.9,881.7 252.2,884.5 253.6,883.1 C255,881.7 252.2,877.4 246.5,876 Z" fill="#f7b51c" stroke="#f7b51c" stroke-width="0.7"/>
<path d="M246.5,876 C243.5,881 244.5,886 246.5,886 C248.5,886 249.5,881 246.5,876 Z" fill="#f7b51c" stroke="#f7b51c" stroke-width="0.7"/>
<path d="M246.5,876 C240.8,877.4 238,881.7 239.4,883.1 C240.8,884.5 245.1,881.7 246.5,876 Z" fill="#f7b51c" stroke="#f7b51c" stroke-width="0.7"/>
<path d="M246.5,876 C241.5,873 236.5,874 236.5,876 C236.5,878 241.5,879 246.5,876 Z" fill="#f7b51c" stroke="#f7b51c" stroke-width="0.7"/>
<path d="M246.5,876 C245.1,870.3 240.8,867.5 239.4,868.9 C238,870.3 240.8,874.6 246.5,876 Z" fill="#f7b51c" stroke="#f7b51c" stroke-width="0.7"/>
<path d="M308.6,683 C301.9,678 305.2,673 308.6,676.3 C312,673 315.3,678 308.6,683 Z" fill="#f5b4d6"/>
<path d="M318.6,671.6 C313.8,668 316.2,664.4 318.6,666.8 C321,664.4 323.4,668 318.6,671.6 Z" fill="#f5b4d6"/>
<path d="M344.7,710.6 C338,705.6 341.3,700.6 344.7,703.9 C348.1,700.6 351.4,705.6 344.7,710.6 Z" fill="#f5b4d6"/>
<path d="M352,721.6 C347.2,718 349.6,714.4 352,716.8 C354.4,714.4 356.8,718 352,721.6 Z" fill="#f5b4d6"/>
<path d="M360.8,714.2 C356,710.6 358.4,707 360.8,709.4 C363.2,707 365.6,710.6 360.8,714.2 Z" fill="#f5b4d6"/>
<path d="M321,704.9 C317.2,702 319.1,699.1 321,701 C322.9,699.1 324.8,702 321,704.9 Z" fill="#f5b4d6"/>
<path d="M199,873 C192.3,868 195.6,863 199,866.3 C202.4,863 205.7,868 199,873 Z" fill="#f5b4d6"/>
<path d="M189,885.6 C184.2,882 186.6,878.4 189,880.8 C191.4,878.4 193.8,882 189,885.6 Z" fill="#f5b4d6"/>
<path d="M221.7,866.6 C216.9,863 219.3,859.4 221.7,861.8 C224.1,859.4 226.5,863 221.7,866.6 Z" fill="#f5b4d6"/>
<path d="M311,698.2 C308.1,696 309.6,693.8 311,695.3 C312.4,693.8 313.9,696 311,698.2 Z" fill="#f5b4d6"/>
<!-- t06.py -->
<path d="M528,760 C527.8,721.8 496.2,687.5 467,677 C473.1,704.4 496.4,744.9 528,760 Z" fill="#2d6a3c" /><path d="M528,760 Q499.3,717.2 467,677" stroke="#153a20" stroke-width="1.2" fill="none"/>
<path d="M530,768 C518.1,747.9 490.5,739.5 472,742 C482.5,757.5 507.1,772.5 530,768 Z" fill="#2d6a3c" /><path d="M530,768 Q501,755 472,742" stroke="#153a20" stroke-width="1" fill="none"/>
<path d="M545,780 C523.5,766.7 495.9,775.5 482,790 C499.6,799.5 528.7,799.3 545,780 Z" fill="#2d6a3c" />
<path d="M540,740 C545.8,719.1 531.9,697.5 518,688 C509.6,706.9 515.4,732 540,740 Z" fill="#2d6a3c" />
<path d="M650,790 C673.6,814 715,816.1 740,806 C720,787.9 680.4,775.6 650,790 Z" fill="#2d6a3c" /><path d="M650,790 Q695,798 740,806" stroke="#153a20" stroke-width="1" fill="none"/>
<path d="M655,815 C653.4,835.8 669.9,855.8 684,864 C688.8,844.6 679.2,820.5 655,815 Z" fill="#2d6a3c" /><path d="M655,815 Q671.4,838.4 684,864" stroke="#153a20" stroke-width="1" fill="none"/>
<path d="M678,810 C688.8,826.7 710.8,828.6 725,822 C715.7,809.4 695.4,800.5 678,810 Z" fill="#78b85a" />
<path d="M678,800 C697.3,801.6 714.4,786.3 720,772 C704.6,771.7 683.9,781.6 678,800 Z" fill="#78b85a" />
<path d="M580,700 L570,690 M597,715 L598,680 M610,712 L625,685" stroke="#2d5a2a" stroke-width="2.2"/>
<path d="M572,688 C582,676 576.2,661.7 566,655 C558.8,664.8 558.4,680.2 572,688 Z" fill="#78b85a" /><path d="M572,688 Q569,671.5 566,655" stroke="#4a8a3a" stroke-width="1" fill="none"/>
<path d="M598,683 C608.8,675.9 606.4,664.6 599,658 C591.1,663.9 587.8,675.1 598,683 Z" fill="#78b85a" /><path d="M598,683 Q598.5,670.5 599,658" stroke="#4a8a3a" stroke-width="1" fill="none"/>
<path d="M622,688 C635.2,683.5 635.9,670.9 630,662 C620.1,666.1 613.6,676.9 622,688 Z" fill="#78b85a" /><path d="M622,688 Q626,675 630,662" stroke="#4a8a3a" stroke-width="1" fill="none"/>
<path d="M570,720 C576.9,708.1 569.8,696.4 560,692 C555.2,701.6 557.1,715.1 570,720 Z" fill="#78b85a" />
<path d="M583,796 C573.7,742.1 580.6,700 545.8,716.2 C511,732.5 547.6,754.2 583,796 Z" fill="#e83c99" />
<path d="M583,796 C611.2,746.4 643.9,717.1 606.8,707.1 C569.7,697.2 583.4,739 583,796 Z" fill="#e83c99" />
<path d="M583,796 C629.7,777.8 669.7,777 646,746.7 C622.4,716.5 612,755.1 583,796 Z" fill="#e83c99" />
<path d="M583,796 C635.1,808.6 670.3,831.4 668.9,793 C667.6,754.6 634.1,779.8 583,796 Z" fill="#e83c99" />
<path d="M583,796 C617,837.4 631.4,876.8 653.4,845.3 C675.5,813.9 633.5,813.8 583,796 Z" fill="#e83c99" />
<path d="M583,796 C579.9,850.6 563.7,890.1 601.3,882.1 C638.9,874.1 608.1,844.7 583,796 Z" fill="#e83c99" />
<path d="M583,796 C550.8,837.3 515.9,859.5 551.5,873.9 C587.1,888.3 577.5,848.1 583,796 Z" fill="#e83c99" />
<path d="M583,796 C534.2,807.5 494.5,802.7 513.7,836 C532.9,869.3 548.6,832.5 583,796 Z" fill="#e83c99" />
<path d="M583,796 C536.9,768.7 509.9,736.7 499.9,773.7 C490,810.8 529.4,796.6 583,796 Z" fill="#e83c99" />
<path d="M573.7,776.1 C576.1,756.4 561.3,728.9 553.4,732.6 C545.5,736.2 557.1,765.3 573.7,776.1 Z" fill="#f37cbf" opacity="0.55"/>
<path d="M588.7,774.7 C603.2,761.2 609.5,730.6 601.1,728.4 C592.7,726.1 582.9,755.8 588.7,774.7 Z" fill="#f37cbf" opacity="0.55"/>
<path d="M600.3,782.5 C620,780.4 643.5,759.7 638.2,752.9 C632.8,746.1 607.1,763.8 600.3,782.5 Z" fill="#f37cbf" opacity="0.55"/>
<path d="M605,795.2 C622.1,805.1 653.3,802.2 653,793.6 C652.7,784.9 621.4,784.2 605,795.2 Z" fill="#f37cbf" opacity="0.55"/>
<path d="M601,808.6 C608.8,826.9 635.4,843.3 640.3,836.2 C645.3,829 620.8,809.7 601,808.6 Z" fill="#f37cbf" opacity="0.55"/>
<path d="M587.6,817.5 C580.8,836.1 589.1,866.3 597.6,864.5 C606,862.7 601.3,831.8 587.6,817.5 Z" fill="#f37cbf" opacity="0.55"/>
<path d="M574.8,816.4 C558.7,828 548.7,857.7 556.8,860.9 C564.8,864.2 578.2,835.9 574.8,816.4 Z" fill="#f37cbf" opacity="0.55"/>
<path d="M563.9,807 C544.1,806.3 518,823.5 522.4,831 C526.7,838.5 554.6,824.5 563.9,807 Z" fill="#f37cbf" opacity="0.55"/>
<path d="M561.7,790.3 C548.2,775.8 517.6,769.5 515.4,777.9 C513.1,786.3 542.8,796.1 561.7,790.3 Z" fill="#f37cbf" opacity="0.55"/>
<circle cx="583" cy="796" r="30" fill="#7a2a1a"/>
<circle cx="583" cy="796" r="24" fill="#3a1a0a"/>
<ellipse cx="585.6" cy="796" rx="3" ry="1.8" fill="#f2c53a" transform="rotate(0 585.6 796)"/>
<ellipse cx="579.6" cy="799.1" rx="3" ry="1.8" fill="#f2c53a" transform="rotate(137.5 579.6 799.1)"/>
<ellipse cx="583.5" cy="790.1" rx="3" ry="1.8" fill="#f2c53a" transform="rotate(275 583.5 790.1)"/>
<ellipse cx="587.3" cy="801.6" rx="3" ry="1.8" fill="#f2c53a" transform="rotate(412.5 587.3 801.6)"/>
<ellipse cx="575.2" cy="794.6" rx="3" ry="1.8" fill="#f2c53a" transform="rotate(550 575.2 794.6)"/>
<ellipse cx="590.4" cy="791.3" rx="3" ry="1.8" fill="#f2c53a" transform="rotate(687.5 590.4 791.3)"/>
<ellipse cx="580.5" cy="805.2" rx="3" ry="1.8" fill="#f2c53a" transform="rotate(825 580.5 805.2)"/>
<ellipse cx="578.3" cy="786.9" rx="3" ry="1.8" fill="#f2c53a" transform="rotate(962.6 578.3 786.9)"/>
<ellipse cx="593.3" cy="799.7" rx="3" ry="1.8" fill="#f2c53a" transform="rotate(1100.1 593.3 799.7)"/>
<ellipse cx="572.3" cy="800.4" rx="3" ry="1.8" fill="#f2c53a" transform="rotate(1237.6 572.3 800.4)"/>
<ellipse cx="588.1" cy="785" rx="3" ry="1.8" fill="#f2c53a" transform="rotate(1375.1 588.1 785)"/>
<ellipse cx="586.8" cy="808.1" rx="3" ry="1.8" fill="#f2c53a" transform="rotate(1512.6 586.8 808.1)"/>
<ellipse cx="571.5" cy="789.4" rx="3" ry="1.8" fill="#f2c53a" transform="rotate(1650.1 571.5 789.4)"/>
<ellipse cx="596.4" cy="793" rx="3" ry="1.8" fill="#f2c53a" transform="rotate(1787.6 596.4 793)"/>
<ellipse cx="574.8" cy="807.7" rx="3" ry="1.8" fill="#f2c53a" transform="rotate(1925.1 574.8 807.7)"/>
<ellipse cx="581.1" cy="781.4" rx="3" ry="1.8" fill="#f2c53a" transform="rotate(2062.6 581.1 781.4)"/>
<ellipse cx="594.6" cy="805.8" rx="3" ry="1.8" fill="#f2c53a" transform="rotate(2200.1 594.6 805.8)"/>
<ellipse cx="567.3" cy="796.6" rx="3" ry="1.8" fill="#f2c53a" transform="rotate(2337.6 567.3 796.6)"/>
<ellipse cx="594.4" cy="784.6" rx="3" ry="1.8" fill="#f2c53a" transform="rotate(2475.1 594.4 784.6)"/>
<ellipse cx="582.2" cy="812.5" rx="3" ry="1.8" fill="#f2c53a" transform="rotate(2612.6 582.2 812.5)"/>
<ellipse cx="572.1" cy="783" rx="3" ry="1.8" fill="#f2c53a" transform="rotate(2750.2 572.1 783)"/>
<ellipse cx="600.2" cy="798.3" rx="3" ry="1.8" fill="#f2c53a" transform="rotate(2887.7 600.2 798.3)"/>
<ellipse cx="568.4" cy="806.2" rx="3" ry="1.8" fill="#f2c53a" transform="rotate(3025.2 568.4 806.2)"/>
<ellipse cx="587" cy="778.3" rx="3" ry="1.8" fill="#f2c53a" transform="rotate(3162.7 587 778.3)"/>
<ellipse cx="592.2" cy="812.1" rx="3" ry="1.8" fill="#f2c53a" transform="rotate(3300.2 592.2 812.1)"/>
<ellipse cx="565" cy="790.3" rx="3" ry="1.8" fill="#f2c53a" transform="rotate(3437.7 565 790.3)"/>
<ellipse cx="600.5" cy="787.9" rx="3" ry="1.8" fill="#f2c53a" transform="rotate(3575.2 600.5 787.9)"/>
<ellipse cx="575.4" cy="814.1" rx="3" ry="1.8" fill="#f2c53a" transform="rotate(3712.7 575.4 814.1)"/>
<ellipse cx="576.2" cy="777.2" rx="3" ry="1.8" fill="#f2c53a" transform="rotate(3850.2 576.2 777.2)"/>
<ellipse cx="601" cy="805.5" rx="3" ry="1.8" fill="#f2c53a" transform="rotate(3987.7 601 805.5)"/>
<ellipse cx="563" cy="801.3" rx="3" ry="1.8" fill="#f2c53a" transform="rotate(4125.2 563 801.3)"/>
<ellipse cx="594.4" cy="778.3" rx="3" ry="1.8" fill="#f2c53a" transform="rotate(4262.7 594.4 778.3)"/>
<ellipse cx="586.6" cy="817.1" rx="3" ry="1.8" fill="#f2c53a" transform="rotate(4400.2 586.6 817.1)"/>
<ellipse cx="565.9" cy="782.7" rx="3" ry="1.8" fill="#f2c53a" transform="rotate(4537.8 565.9 782.7)"/>
<ellipse cx="604.9" cy="794.2" rx="3" ry="1.8" fill="#f2c53a" transform="rotate(4675.3 604.9 794.2)"/>
<ellipse cx="567.8" cy="812.4" rx="3" ry="1.8" fill="#f2c53a" transform="rotate(4812.8 567.8 812.4)"/>
<ellipse cx="583.1" cy="773.4" rx="3" ry="1.8" fill="#f2c53a" transform="rotate(4950.3 583.1 773.4)"/>
<ellipse cx="598.4" cy="813" rx="3" ry="1.8" fill="#f2c53a" transform="rotate(5087.8 598.4 813)"/>
<ellipse cx="559.8" cy="793.9" rx="3" ry="1.8" fill="#f2c53a" transform="rotate(5225.3 559.8 793.9)"/>
<path d="M665,743 C680.5,710.4 700.3,690.3 675.1,685.9 C649.9,681.4 661.6,707.1 665,743 Z" fill="#e93e9b" />
<path d="M665,743 C697.8,728 725.9,725.3 709.4,705.7 C693,686.1 685.5,713.3 665,743 Z" fill="#e93e9b" />
<path d="M665,743 C699.8,752.6 723,768.6 723,743 C723,717.4 699.8,733.4 665,743 Z" fill="#e93e9b" />
<path d="M665,743 C685.5,772.7 693,799.9 709.4,780.3 C725.9,760.7 697.8,758 665,743 Z" fill="#e93e9b" />
<path d="M665,743 C661.6,778.9 649.9,804.6 675.1,800.1 C700.3,795.7 680.5,775.6 665,743 Z" fill="#e93e9b" />
<path d="M665,743 C639.3,768.3 613.8,780.4 636,793.2 C658.2,806 655.9,777.9 665,743 Z" fill="#e93e9b" />
<path d="M665,743 C629,745.9 601.7,738.8 610.5,762.8 C619.3,786.9 635.6,763.9 665,743 Z" fill="#e93e9b" />
<path d="M665,743 C635.6,722.1 619.3,699.1 610.5,723.2 C601.7,747.2 629,740.1 665,743 Z" fill="#e93e9b" />
<path d="M665,743 C655.9,708.1 658.2,680 636,692.8 C613.8,705.6 639.3,717.7 665,743 Z" fill="#e93e9b" />
<path d="M667.1,731.2 C676.5,720.8 679.1,698.8 673,697.7 C666.9,696.6 661.8,718.2 667.1,731.2 Z" fill="#f27bbd" opacity="0.6"/>
<path d="M674.2,735.3 C688.1,733.4 704.2,718.2 700.2,713.4 C696.3,708.7 678.5,721.9 674.2,735.3 Z" fill="#f27bbd" opacity="0.6"/>
<path d="M677,743 C688.9,750.5 711,749.2 711,743 C711,736.8 688.9,735.5 677,743 Z" fill="#f27bbd" opacity="0.6"/>
<path d="M674.2,750.7 C678.5,764.1 696.3,777.3 700.2,772.6 C704.2,767.8 688.1,752.6 674.2,750.7 Z" fill="#f27bbd" opacity="0.6"/>
<path d="M667.1,754.8 C661.8,767.8 666.9,789.4 673,788.3 C679.1,787.2 676.5,765.2 667.1,754.8 Z" fill="#f27bbd" opacity="0.6"/>
<path d="M659,753.4 C646.6,759.9 636.6,779.7 642,782.8 C647.4,785.9 659.5,767.4 659,753.4 Z" fill="#f27bbd" opacity="0.6"/>
<path d="M653.7,747.1 C640,744.1 619.7,752.9 621.8,758.7 C623.9,764.6 645.1,758.2 653.7,747.1 Z" fill="#f27bbd" opacity="0.6"/>
<path d="M653.7,738.9 C645.1,727.8 623.9,721.4 621.8,727.3 C619.7,733.1 640,741.9 653.7,738.9 Z" fill="#f27bbd" opacity="0.6"/>
<path d="M659,732.6 C659.5,718.6 647.4,700.1 642,703.2 C636.6,706.3 646.6,726.1 659,732.6 Z" fill="#f27bbd" opacity="0.6"/>
<circle cx="665" cy="743" r="18" fill="#7a2a1a"/>
<circle cx="665" cy="743" r="14.4" fill="#3a1a0a"/>
<ellipse cx="667.1" cy="743" rx="1.8" ry="1.1" fill="#f2c53a" transform="rotate(0 667.1 743)"/>
<ellipse cx="662.4" cy="745.4" rx="1.8" ry="1.1" fill="#f2c53a" transform="rotate(137.5 662.4 745.4)"/>
<ellipse cx="665.4" cy="738.4" rx="1.8" ry="1.1" fill="#f2c53a" transform="rotate(275 665.4 738.4)"/>
<ellipse cx="668.3" cy="747.3" rx="1.8" ry="1.1" fill="#f2c53a" transform="rotate(412.5 668.3 747.3)"/>
<ellipse cx="658.9" cy="741.9" rx="1.8" ry="1.1" fill="#f2c53a" transform="rotate(550 658.9 741.9)"/>
<ellipse cx="670.8" cy="739.3" rx="1.8" ry="1.1" fill="#f2c53a" transform="rotate(687.5 670.8 739.3)"/>
<ellipse cx="663.1" cy="750.2" rx="1.8" ry="1.1" fill="#f2c53a" transform="rotate(825 663.1 750.2)"/>
<ellipse cx="661.3" cy="735.9" rx="1.8" ry="1.1" fill="#f2c53a" transform="rotate(962.6 661.3 735.9)"/>
<ellipse cx="673" cy="745.9" rx="1.8" ry="1.1" fill="#f2c53a" transform="rotate(1100.1 673 745.9)"/>
<ellipse cx="656.7" cy="746.4" rx="1.8" ry="1.1" fill="#f2c53a" transform="rotate(1237.6 656.7 746.4)"/>
<ellipse cx="669" cy="734.4" rx="1.8" ry="1.1" fill="#f2c53a" transform="rotate(1375.1 669 734.4)"/>
<ellipse cx="668" cy="752.5" rx="1.8" ry="1.1" fill="#f2c53a" transform="rotate(1512.6 668 752.5)"/>
<ellipse cx="656" cy="737.8" rx="1.8" ry="1.1" fill="#f2c53a" transform="rotate(1650.1 656 737.8)"/>
<ellipse cx="675.5" cy="740.7" rx="1.8" ry="1.1" fill="#f2c53a" transform="rotate(1787.6 675.5 740.7)"/>
<ellipse cx="658.6" cy="752.1" rx="1.8" ry="1.1" fill="#f2c53a" transform="rotate(1925.1 658.6 752.1)"/>
<ellipse cx="663.5" cy="731.6" rx="1.8" ry="1.1" fill="#f2c53a" transform="rotate(2062.6 663.5 731.6)"/>
<ellipse cx="674.1" cy="750.7" rx="1.8" ry="1.1" fill="#f2c53a" transform="rotate(2200.1 674.1 750.7)"/>
<ellipse cx="652.8" cy="743.5" rx="1.8" ry="1.1" fill="#f2c53a" transform="rotate(2337.6 652.8 743.5)"/>
<ellipse cx="673.9" cy="734.1" rx="1.8" ry="1.1" fill="#f2c53a" transform="rotate(2475.1 673.9 734.1)"/>
<ellipse cx="664.4" cy="755.9" rx="1.8" ry="1.1" fill="#f2c53a" transform="rotate(2612.6 664.4 755.9)"/>
<ellipse cx="656.5" cy="732.8" rx="1.8" ry="1.1" fill="#f2c53a" transform="rotate(2750.2 656.5 732.8)"/>
<ellipse cx="678.5" cy="744.8" rx="1.8" ry="1.1" fill="#f2c53a" transform="rotate(2887.7 678.5 744.8)"/>
<ellipse cx="653.6" cy="750.9" rx="1.8" ry="1.1" fill="#f2c53a" transform="rotate(3025.2 653.6 750.9)"/>
<path d="M671,665 Q672.8,671.2 676.6,673 Q672.8,674.8 671,681 Q669.2,674.8 665.4,673 Q669.2,671.2 671,665 Z" fill="#f3a622"/>
<path d="M493,833 Q494.5,838.5 497.9,840 Q494.5,841.5 493,847 Q491.5,841.5 488.1,840 Q491.5,838.5 493,833 Z" fill="#f3a622"/>
<path d="M693,828 Q694.5,833.5 697.9,835 Q694.5,836.5 693,842 Q691.5,836.5 688.1,835 Q691.5,833.5 693,828 Z" fill="#f3a622"/>
<circle cx="683" cy="654" r="2.8" fill="#f3a622"/>
<circle cx="649" cy="666" r="2.8" fill="#f3a622"/>
<circle cx="483" cy="818" r="2.8" fill="#f3a622"/>
<circle cx="713" cy="843" r="2.8" fill="#f3a622"/>
<circle cx="688" cy="853" r="2.8" fill="#f3a622"/>
<!-- t07.py -->
<circle cx="816.6" cy="639.5" r="15.3" fill="#7b7b7b"/><path d="M810.6,635.7 L813.4,638.7 L816.6,634.5 L819.8,638.7 L822.6,635.7 V645.5 H810.6 Z" fill="#fbb30f"/>
<path d="M838,670 C815.8,663.1 800.4,679.9 797,697 C817.4,705.6 838.9,698.1 838,670 Z" fill="#8da556" stroke="#333" stroke-width="0.5"/>
<path d="M848,675 C839.5,695.4 853.4,704.3 870,702 C875.6,686.2 869.7,670.8 848,675 Z" fill="#8da556" stroke="#333" stroke-width="0.5"/>
<path d="M858,676 C865.6,692.8 882.1,692 893,683 C886.4,670.5 871.4,663.4 858,676 Z" fill="#8da556" stroke="#333" stroke-width="0.5"/>
<path d="M812,640 C815,625 835,619 855,622 C878,624 890,640 888,655 C886,670 872,682 857,684 C840,686 820,678 812,660 Z" fill="#c9461b" stroke="#4a1a0a" stroke-width="0.8"/>
<path d="M812,640 C808,650 810,660 818,668 L830,668 C822,655 822,640 830,630 Z" fill="#5a1a12"/>
<path d="M842,652 A8,6.4 0 1 1 858,650" fill="none" stroke="#5a1a0a" stroke-width="0.8"/>
<path d="M836,652 A14,11.200000000000001 0 1 1 864,650" fill="none" stroke="#5a1a0a" stroke-width="0.8"/>
<path d="M830,652 A20,16.0 0 1 1 870,650" fill="none" stroke="#5a1a0a" stroke-width="0.8"/>
<path d="M925,625 L948,645 L972,640 L988,622 L992,660 C995,690 975,702 958,702 C935,702 920,685 922,660 Z" fill="#b2b1ee" stroke="#333" stroke-width="0.8"/>
<path d="M929,632 L942,646 L930,652Z M985,630 L978,648 L988,652Z" fill="#f2a6b2"/>
<path d="M946,675 C946,668 962,668 965,676 L962,698 C958,702 952,702 948,698Z" fill="#e86a7a" stroke="#333" stroke-width="0.6"/>
<path d="M950,682 L960,682 L958,696 L951,696Z" fill="#f8b0b8"/>
<circle cx="942" cy="660" r="2.4" fill="#3a6ac0"/><circle cx="968" cy="658" r="2.4" fill="#3a6ac0"/>
<path d="M952,640 L956,655 M960,638 L962,652 M966,640 L966,650" stroke="#445" stroke-width="1.2"/>
<path d="M935,676 L914,679 M936,680 L916,688 M930,690 L920,703 L932,690 L940,688" stroke="#c8a040" stroke-width="1.2" fill="none"/>
<path d="M1010,690 L1040,636 C1060,640 1080,645 1090,652 Z" fill="#f6c24a" stroke="#333" stroke-width="0.7"/>
<path d="M1040,632 C1062,634 1085,642 1091,652 L1086,656 C1075,648 1058,642 1038,638 Z" fill="#e8c88a" stroke="#333" stroke-width="0.6"/>
<circle cx="1057" cy="646" r="4" fill="#e0592a"/>
<circle cx="1073" cy="651" r="4" fill="#e0592a"/>
<circle cx="1045" cy="662" r="4" fill="#e0592a"/>
<circle cx="1060" cy="657" r="4" fill="#e0592a"/>
<circle cx="1030" cy="668" r="4" fill="#e0592a"/>
<circle cx="1025" cy="677" r="4" fill="#e0592a"/>
<path d="M1020,683 L1019,690 M1044,672 L1045,678 M1075,660 L1076,668" stroke="#f6c24a" stroke-width="2.5" stroke-linecap="round"/>
<path d="M853,744 C838,738 820,745 819,768 C818,790 832,806 850,805 C855,803 860,803 865,805 C878,806 886,790 885,770 C884,748 868,738 853,744Z" fill="#f34a3b" stroke="#6a1a1a" stroke-width="0.7"/>
<path d="M855,745 C857,737 862,732 868,729" stroke="#c0a070" stroke-width="2.2" fill="none"/>
<path d="M846,742 C825.1,745.6 810.2,767.1 806,783 C827.5,784 848.7,768.6 846,742 Z" fill="#9bb75a" stroke="#333" stroke-width="0.6"/>
<path d="M870,760 C876,770 876,780 872,790" stroke="#fff" stroke-width="1.5" fill="none" opacity="0.7"/>
<polygon points="949,721 953.7,743.5 962.8,733.7 962.3,747 981.5,734.5 969,753.7 982.3,753.2 972.5,762.3 995,767 972.5,771.7 982.3,780.8 969,780.3 981.5,799.5 962.3,787 962.8,800.3 953.7,790.5 949,813 944.3,790.5 935.2,800.3 935.7,787 916.5,799.5 929,780.3 915.7,780.8 925.5,771.7 903,767 925.5,762.3 915.7,753.2 929,753.7 916.5,734.5 935.7,747 935.2,733.7 944.3,743.5" fill="#eec462" stroke="#333" stroke-width="0.6"/>
<circle cx="949" cy="767" r="20" fill="#f7d47c" stroke="#333" stroke-width="0.7"/>
<circle cx="939" cy="772" r="4" fill="#ef7a52"/><circle cx="961" cy="772" r="4" fill="#ef7a52"/>
<path d="M940,762 h5 M953,762 h5 M946,777 h6" stroke="#333" stroke-width="1"/>
<path d="M1008,782 C1004,775 1010,768 1018,770 C1018,760 1028,756 1034,762 C1036,748 1050,742 1060,748 C1066,744 1078,748 1078,758 C1086,756 1094,766 1088,774 C1095,778 1094,785 1087,785 L1012,786 C1008,786 1006,784 1008,782Z" fill="#bdeff6" stroke="#333" stroke-width="0.7"/>
<path d="M1015,790 L1085,790" stroke="#999" stroke-width="2" stroke-dasharray="1 1.5"/>
<path d="M808,882 L806,858 C815,866 822,866 826,858 C832,868 840,868 845,856 C850,868 858,868 864,858 C868,866 876,866 884,858 L882,882 Z" fill="#f2c53c" stroke="#333" stroke-width="0.7"/>
<path d="M842.5,839 h4.9 v4.5 h4.5 v4.9 h-4.5 v4.5 h-4.9 v-4.5 h-4.5 v-4.9 Z" fill="#f0b83a" stroke="#333" stroke-width="0.6"/>
<circle cx="845" cy="846" r="2.1" fill="#d04a2a"/>
<path d="M818.1,846.5 h3.8 v3.6 h3.6 v3.8 h-3.6 v3.6 h-3.8 v-3.6 h-3.6 v-3.8 Z" fill="#f0b83a" stroke="#333" stroke-width="0.6"/>
<circle cx="820" cy="852" r="1.6" fill="#d04a2a"/>
<path d="M868.1,846.5 h3.8 v3.6 h3.6 v3.8 h-3.6 v3.6 h-3.8 v-3.6 h-3.6 v-3.8 Z" fill="#f0b83a" stroke="#333" stroke-width="0.6"/>
<circle cx="870" cy="852" r="1.6" fill="#d04a2a"/>
<path d="M806,880 C830,874 860,874 885,880 L884,892 C860,886 830,886 806,892Z" fill="#5aa8c0" stroke="#333" stroke-width="0.6"/>
<path d="M806,890 C830,884 860,884 885,890 L883,906 C860,900 830,900 808,906Z" fill="#ecc040" stroke="#333" stroke-width="0.7"/>
<ellipse cx="845" cy="895" rx="6" ry="3.5" fill="#2a5ab8"/><ellipse cx="823" cy="896" rx="4" ry="2.5" fill="#d04a2a"/><ellipse cx="867" cy="896" rx="4" ry="2.5" fill="#d04a2a"/>
<ellipse cx="806" cy="856" rx="2" ry="3.2" fill="#f5e6d8" stroke="#333" stroke-width="0.5"/>
<ellipse cx="826" cy="856" rx="2" ry="3.2" fill="#f5e6d8" stroke="#333" stroke-width="0.5"/>
<ellipse cx="864" cy="856" rx="2" ry="3.2" fill="#f5e6d8" stroke="#333" stroke-width="0.5"/>
<ellipse cx="884" cy="856" rx="2" ry="3.2" fill="#f5e6d8" stroke="#333" stroke-width="0.5"/>
<clipPath id="wc"><circle cx="948" cy="871.5" r="38.5"/></clipPath>
<g clip-path="url(#wc)"><rect x="909" y="833" width="78" height="78" fill="#f7d3ea"/>
<path d="M909,850 C925,832 960,828 975,845 C966,842 955,850 958,860 C962,876 975,880 987,878 L987,911 L909,911Z" fill="#4ba0c6"/>
<path d="M912,848 C928,834 958,832 972,846 C958,842 950,848 948,856 C940,846 925,846 912,860Z" fill="#cde6ee" stroke="#333" stroke-width="0.5"/>
<path d="M909,875 C918,862 935,862 940,872 C930,870 922,876 920,886 L909,890Z" fill="#cde6ee" stroke="#333" stroke-width="0.5"/>
<path d="M915,895 C935,885 955,890 987,888 M912,905 C935,895 960,900 987,898" stroke="#2a6a8a" stroke-width="0.7" fill="none"/></g>
<circle cx="948" cy="871.5" r="38.5" fill="none" stroke="#333" stroke-width="0.8"/>
<clipPath id="mc"><circle cx="1051.5" cy="871.5" r="37.5"/></clipPath>
<circle cx="1051.5" cy="871.5" r="37" fill="#b07ed8" stroke="#333" stroke-width="0.8"/>
<circle cx="1031" cy="864" r="31.5" fill="#fff"/><g clip-path="url(#mc)"><circle cx="1031" cy="864" r="31" fill="none" stroke="#333" stroke-width="0.8"/></g>
<path d="M1062,880 L1058,884 L1062,887" stroke="#333" stroke-width="0.8" fill="none"/><circle cx="1068" cy="868" r="1.6" fill="#333"/>
<!-- t08.py -->
<defs><radialGradient id="tfg" gradientUnits="objectBoundingBox" cx="0.5" cy="0.5" r="0.5"><stop offset="0" stop-color="#ec4a4a"/><stop offset="1" stop-color="#fbd6d6"/></radialGradient><radialGradient id="gsq" cx="0.5" cy="0.55" r="0.65"><stop offset="0" stop-color="#fbfbfb"/><stop offset="1" stop-color="#c4c4c4"/></radialGradient></defs>
<rect x="1179" y="659" width="219" height="219" rx="15" fill="url(#gsq)"/>
<path d="M1372,680 C1353.1,657.3 1315.8,639.5 1292,635 C1308.2,653 1342.9,675.7 1372,680 Z" fill="#0f7b6e" stroke="#111" stroke-width="1"/><path d="M1372,680 Q1332,657.5 1292,635" stroke="#111" stroke-width="0.8" fill="none"/>
<path d="M1372,680 C1368.8,655.7 1348.5,629.3 1332,618 C1335.5,637.7 1351.2,667.1 1372,680 Z" fill="#0f7b6e" stroke="#111" stroke-width="1"/><path d="M1372,680 Q1352,649 1332,618" stroke="#111" stroke-width="0.8" fill="none"/>
<path d="M1372,680 C1378.3,666.7 1374.5,648 1368,638 C1363.5,649 1363.3,668.1 1372,680 Z" fill="#0f7b6e" stroke="#111" stroke-width="1"/><path d="M1372,680 Q1370,659 1368,638" stroke="#111" stroke-width="0.8" fill="none"/>
<path d="M1372,680 C1357.5,668.3 1332.2,663.4 1317,665 C1329.3,674.1 1353.5,682.7 1372,680 Z" fill="#0f7b6e" stroke="#111" stroke-width="1"/><path d="M1372,680 Q1344.5,672.5 1317,665" stroke="#111" stroke-width="0.8" fill="none"/>
<path d="M1372,680 C1359.7,673.9 1341.8,676.6 1332,682 C1342.2,686.4 1360.3,687.3 1372,680 Z" fill="#0f7b6e" stroke="#111" stroke-width="1"/><path d="M1372,680 Q1352,681 1332,682" stroke="#111" stroke-width="0.8" fill="none"/>
<path d="M1385,683 C1399.7,698.9 1423.4,696.2 1437,686 C1424.6,674.3 1401.5,668.9 1385,683 Z" fill="#0f7b6e" stroke="#111" stroke-width="1"/><path d="M1385,683 Q1411,684.5 1437,686" stroke="#111" stroke-width="0.8" fill="none"/>
<path d="M1385,683 C1401.8,690.6 1421.2,681.7 1430,670 C1416.3,664.8 1395.2,667.6 1385,683 Z" fill="#0f7b6e" stroke="#111" stroke-width="1"/><path d="M1385,683 Q1407.5,676.5 1430,670" stroke="#111" stroke-width="0.8" fill="none"/>
<path d="M1385,683 C1393.5,699.3 1414,703.9 1428,700 C1420.5,687.6 1402.3,676.9 1385,683 Z" fill="#0f7b6e" stroke="#111" stroke-width="1"/><path d="M1385,683 Q1406.5,691.5 1428,700" stroke="#111" stroke-width="0.8" fill="none"/>
<path d="M1365,690 C1363.6,716.4 1385.2,739 1405,746 C1404.8,725 1390.4,697.2 1365,690 Z" fill="#e8b43a" stroke="#111" stroke-width="1"/><path d="M1365,690 Q1385,718 1405,746" stroke="#111" stroke-width="0.8" fill="none"/>
<path d="M1380,688 C1380.5,706.7 1396.2,724 1410,730 C1408.8,715 1397.5,694.5 1380,688 Z" fill="#0f7b6e" stroke="#111" stroke-width="1"/><path d="M1380,688 Q1395,709 1410,730" stroke="#111" stroke-width="0.8" fill="none"/>
<radialGradient id="tfg1" gradientUnits="userSpaceOnUse" cx="1372" cy="677" r="31"><stop offset="0.25" stop-color="#e8383c"/><stop offset="1" stop-color="#fde4e4"/></radialGradient>
<circle cx="1374.7" cy="661.7" r="16.1" fill="url(#tfg1)" stroke="#111" stroke-width="1.1"/>
<circle cx="1387.3" cy="674.8" r="16.1" fill="url(#tfg1)" stroke="#111" stroke-width="1.1"/>
<circle cx="1378.8" cy="690.9" r="16.1" fill="url(#tfg1)" stroke="#111" stroke-width="1.1"/>
<circle cx="1360.9" cy="687.8" r="16.1" fill="url(#tfg1)" stroke="#111" stroke-width="1.1"/>
<circle cx="1358.3" cy="669.7" r="16.1" fill="url(#tfg1)" stroke="#111" stroke-width="1.1"/>
<circle cx="1372" cy="677" r="17.1" fill="url(#tfg1)"/>
<line x1="1375.4" y1="666.7" x2="1378.9" y2="655.8" stroke="#111" stroke-width="0.9"/>
<line x1="1380.8" y1="670.6" x2="1390.1" y2="663.9" stroke="#111" stroke-width="0.9"/>
<line x1="1382.8" y1="677" x2="1394.3" y2="677" stroke="#111" stroke-width="0.9"/>
<line x1="1380.8" y1="683.4" x2="1390.1" y2="690.1" stroke="#111" stroke-width="0.9"/>
<line x1="1375.4" y1="687.3" x2="1378.9" y2="698.2" stroke="#111" stroke-width="0.9"/>
<line x1="1368.6" y1="687.3" x2="1365.1" y2="698.2" stroke="#111" stroke-width="0.9"/>
<line x1="1363.2" y1="683.4" x2="1353.9" y2="690.1" stroke="#111" stroke-width="0.9"/>
<line x1="1361.2" y1="677" x2="1349.7" y2="677" stroke="#111" stroke-width="0.9"/>
<line x1="1363.2" y1="670.6" x2="1353.9" y2="663.9" stroke="#111" stroke-width="0.9"/>
<line x1="1368.6" y1="666.7" x2="1365.1" y2="655.8" stroke="#111" stroke-width="0.9"/>
<circle cx="1369" cy="682" r="6.2" fill="#f2c456" stroke="#111" stroke-width="1"/>
<circle cx="1376" cy="682" r="6.2" fill="#f2c456" stroke="#111" stroke-width="1"/>
<circle cx="1372" cy="675" r="9.3" fill="#f7d47a" stroke="#111" stroke-width="1"/>
<path d="M1180,728 C1182.2,710.8 1171,691.6 1160,683 C1159,696.9 1165.8,718.2 1180,728 Z" fill="#0f7b6e" stroke="#111" stroke-width="1"/><path d="M1180,728 Q1170,705.5 1160,683" stroke="#111" stroke-width="0.8" fill="none"/>
<path d="M1190,745 C1178.8,731.4 1156.3,724.4 1142,725 C1151.7,735.6 1172.4,746.6 1190,745 Z" fill="#0f7b6e" stroke="#111" stroke-width="1"/><path d="M1190,745 Q1166,735 1142,725" stroke="#111" stroke-width="0.8" fill="none"/>
<path d="M1186,852 C1185.7,826.8 1170.4,794.8 1157,779 C1158.1,799.7 1168.9,833.4 1186,852 Z" fill="#0f7b6e" stroke="#111" stroke-width="1"/><path d="M1186,852 Q1171.5,815.5 1157,779" stroke="#111" stroke-width="0.8" fill="none"/>
<path d="M1188,856 C1177.8,837.1 1153,821.5 1136,817 C1145,832 1167,851.5 1188,856 Z" fill="#0f7b6e" stroke="#111" stroke-width="1"/><path d="M1188,856 Q1162,836.5 1136,817" stroke="#111" stroke-width="0.8" fill="none"/>
<path d="M1190,866 C1180.3,855 1161.7,851 1150,853 C1158.3,861.5 1175.7,869.2 1190,866 Z" fill="#0f7b6e" stroke="#111" stroke-width="1"/><path d="M1190,866 Q1170,859.5 1150,853" stroke="#111" stroke-width="0.8" fill="none"/>
<path d="M1199,853 C1202.7,836 1193.2,815.6 1183,806 C1180.8,819.9 1185.7,841.8 1199,853 Z" fill="#0f7b6e" stroke="#111" stroke-width="1"/><path d="M1199,853 Q1191,829.5 1183,806" stroke="#111" stroke-width="0.8" fill="none"/>
<path d="M1212,790 C1218.2,813.1 1243,829.8 1262,833 C1256,814.7 1235.8,792.7 1212,790 Z" fill="#0f7b6e" stroke="#111" stroke-width="1"/><path d="M1212,790 Q1237,811.5 1262,833" stroke="#111" stroke-width="0.8" fill="none"/>
<path d="M1212,790 C1220.1,808 1242.3,816.5 1258,815 C1250.7,801 1231.5,787 1212,790 Z" fill="#0f7b6e" stroke="#111" stroke-width="1"/><path d="M1212,790 Q1235,802.5 1258,815" stroke="#111" stroke-width="0.8" fill="none"/>
<path d="M1212,790 C1220.7,803.2 1238.5,804.9 1250,800 C1242.5,790.1 1226.1,782.8 1212,790 Z" fill="#0f7b6e" stroke="#111" stroke-width="1"/><path d="M1212,790 Q1231,795 1250,800" stroke="#111" stroke-width="0.8" fill="none"/>
<path d="M1212,790 C1212.1,810.8 1229.6,829.6 1245,836 C1243.9,819.4 1231.7,796.8 1212,790 Z" fill="#0f7b6e" stroke="#111" stroke-width="1"/><path d="M1212,790 Q1228.5,813 1245,836" stroke="#111" stroke-width="0.8" fill="none"/>
<path d="M1190,760 C1196.8,742.8 1185.4,727.3 1172,722 C1167.6,735.7 1172.4,754.4 1190,760 Z" fill="#0f7b6e" stroke="#111" stroke-width="1"/><path d="M1190,760 Q1181,741 1172,722" stroke="#111" stroke-width="0.8" fill="none"/>
<path d="M1200,748 C1209.1,727.8 1196.1,709.3 1180,703 C1173.9,719.2 1178.9,741.2 1200,748 Z" fill="#e8b43a" stroke="#111" stroke-width="1"/><path d="M1200,748 Q1190,725.5 1180,703" stroke="#111" stroke-width="0.8" fill="none"/>
<path d="M1212,744 C1215.9,726.2 1203.2,709.8 1190,704 C1187.8,718.2 1194.9,737.8 1212,744 Z" fill="#f0d48a" stroke="#111" stroke-width="1"/><path d="M1212,744 Q1201,724 1190,704" stroke="#111" stroke-width="0.8" fill="none"/>
<path d="M1185,797 L1203,795 L1271,919 Z" fill="#f2f2f2" stroke="#111" stroke-width="1.1"/>
<path d="M1185,797 L1194,796 L1271,919 Z" fill="#8a8a8a"/>
<circle cx="1154" cy="738" r="6.5" fill="none" stroke="#e8b43a" stroke-width="4"/><circle cx="1154" cy="738" r="8.8" fill="none" stroke="#111" stroke-width="0.8"/>
<ellipse cx="1173" cy="768" rx="11" ry="22" transform="rotate(-32 1173 768)" fill="#0f6a5e" stroke="#111" stroke-width="1.1"/>
<radialGradient id="tfg2" gradientUnits="userSpaceOnUse" cx="1210" cy="767" r="29"><stop offset="0.25" stop-color="#e8383c"/><stop offset="1" stop-color="#fde4e4"/></radialGradient>
<circle cx="1212.5" cy="752.7" r="15.1" fill="url(#tfg2)" stroke="#111" stroke-width="1.1"/>
<circle cx="1224.4" cy="765" r="15.1" fill="url(#tfg2)" stroke="#111" stroke-width="1.1"/>
<circle cx="1216.4" cy="780" r="15.1" fill="url(#tfg2)" stroke="#111" stroke-width="1.1"/>
<circle cx="1199.6" cy="777.1" r="15.1" fill="url(#tfg2)" stroke="#111" stroke-width="1.1"/>
<circle cx="1197.2" cy="760.2" r="15.1" fill="url(#tfg2)" stroke="#111" stroke-width="1.1"/>
<circle cx="1210" cy="767" r="16" fill="url(#tfg2)"/>
<line x1="1213.1" y1="757.3" x2="1216.5" y2="747.1" stroke="#111" stroke-width="0.9"/>
<line x1="1218.2" y1="761" x2="1226.9" y2="754.7" stroke="#111" stroke-width="0.9"/>
<line x1="1220.2" y1="767" x2="1230.9" y2="767" stroke="#111" stroke-width="0.9"/>
<line x1="1218.2" y1="773" x2="1226.9" y2="779.3" stroke="#111" stroke-width="0.9"/>
<line x1="1213.1" y1="776.7" x2="1216.5" y2="786.9" stroke="#111" stroke-width="0.9"/>
<line x1="1206.9" y1="776.7" x2="1203.5" y2="786.9" stroke="#111" stroke-width="0.9"/>
<line x1="1201.8" y1="773" x2="1193.1" y2="779.3" stroke="#111" stroke-width="0.9"/>
<line x1="1199.8" y1="767" x2="1189.1" y2="767" stroke="#111" stroke-width="0.9"/>
<line x1="1201.8" y1="761" x2="1193.1" y2="754.7" stroke="#111" stroke-width="0.9"/>
<line x1="1206.9" y1="757.3" x2="1203.5" y2="747.1" stroke="#111" stroke-width="0.9"/>
<circle cx="1207" cy="772" r="5.8" fill="#f2c456" stroke="#111" stroke-width="1"/>
<circle cx="1214" cy="772" r="5.8" fill="#f2c456" stroke="#111" stroke-width="1"/>
<circle cx="1210" cy="765" r="8.7" fill="#f7d47a" stroke="#111" stroke-width="1"/>
<path d="M1160,806 C1155,796 1163,788 1170,793 C1185,790 1200,780 1212,768 C1220,762 1228,770 1222,777 C1210,792 1192,802 1166,812Z" fill="#e0a83a" stroke="#111" stroke-width="1.1"/>
<radialGradient id="tfg3" gradientUnits="userSpaceOnUse" cx="1208.5" cy="874" r="29"><stop offset="0.25" stop-color="#e8383c"/><stop offset="1" stop-color="#fde4e4"/></radialGradient>
<circle cx="1211" cy="859.7" r="15.1" fill="url(#tfg3)" stroke="#111" stroke-width="1.1"/>
<circle cx="1222.9" cy="872" r="15.1" fill="url(#tfg3)" stroke="#111" stroke-width="1.1"/>
<circle cx="1214.9" cy="887" r="15.1" fill="url(#tfg3)" stroke="#111" stroke-width="1.1"/>
<circle cx="1198.1" cy="884.1" r="15.1" fill="url(#tfg3)" stroke="#111" stroke-width="1.1"/>
<circle cx="1195.7" cy="867.2" r="15.1" fill="url(#tfg3)" stroke="#111" stroke-width="1.1"/>
<circle cx="1208.5" cy="874" r="16" fill="url(#tfg3)"/>
<line x1="1211.6" y1="864.3" x2="1215" y2="854.1" stroke="#111" stroke-width="0.9"/>
<line x1="1216.7" y1="868" x2="1225.4" y2="861.7" stroke="#111" stroke-width="0.9"/>
<line x1="1218.7" y1="874" x2="1229.4" y2="874" stroke="#111" stroke-width="0.9"/>
<line x1="1216.7" y1="880" x2="1225.4" y2="886.3" stroke="#111" stroke-width="0.9"/>
<line x1="1211.6" y1="883.7" x2="1215" y2="893.9" stroke="#111" stroke-width="0.9"/>
<line x1="1205.4" y1="883.7" x2="1202" y2="893.9" stroke="#111" stroke-width="0.9"/>
<line x1="1200.3" y1="880" x2="1191.6" y2="886.3" stroke="#111" stroke-width="0.9"/>
<line x1="1198.3" y1="874" x2="1187.6" y2="874" stroke="#111" stroke-width="0.9"/>
<line x1="1200.3" y1="868" x2="1191.6" y2="861.7" stroke="#111" stroke-width="0.9"/>
<line x1="1205.4" y1="864.3" x2="1202" y2="854.1" stroke="#111" stroke-width="0.9"/>
<circle cx="1205.5" cy="879" r="5.8" fill="#f2c456" stroke="#111" stroke-width="1"/>
<circle cx="1212.5" cy="879" r="5.8" fill="#f2c456" stroke="#111" stroke-width="1"/>
<circle cx="1208.5" cy="872" r="8.7" fill="#f7d47a" stroke="#111" stroke-width="1"/>
<path d="M1207,687 V707 M1197,697 H1217" stroke="#111" stroke-width="1.3"/><path d="M1207,692 Q1208.1,695.9 1210.5,697 Q1208.1,698.1 1207,702 Q1205.9,698.1 1203.5,697 Q1205.9,695.9 1207,692 Z" fill="#111"/>
<path d="M1375,741 V761 M1365,751 H1385" stroke="#111" stroke-width="1.3"/><path d="M1375,746 Q1376.1,749.9 1378.5,751 Q1376.1,752.1 1375,756 Q1373.9,752.1 1371.5,751 Q1373.9,749.9 1375,746 Z" fill="#111"/>
<path d="M1260,845 V865 M1250,855 H1270" stroke="#111" stroke-width="1.3"/><path d="M1260,850 Q1261.1,853.9 1263.5,855 Q1261.1,856.1 1260,860 Q1258.9,856.1 1256.5,855 Q1258.9,853.9 1260,850 Z" fill="#111"/>
<!-- t09.py -->
<circle cx="132.5" cy="981.6" r="15.3" fill="#7b7b7b"/><path d="M126.5,977.8 L129.3,980.8 L132.5,976.6 L135.7,980.8 L138.5,977.8 V987.6 H126.5 Z" fill="#fbb30f"/>
<ellipse cx="268.6" cy="1025.1" rx="49" ry="24" transform="rotate(-84 268.6 1025.1)" fill="#5b86e3" stroke="#1c1c1c" stroke-width="2.4"/>
<ellipse cx="264.2" cy="1021.7" rx="43" ry="17" transform="rotate(-84 264.2 1021.7)" fill="#729ef5"/>
<line x1="264.7" y1="1061.9" x2="275.4" y2="998.7" stroke="#1c1c1c" stroke-width="1.4"/>
<ellipse cx="318" cy="1046.6" rx="49.5" ry="24" transform="rotate(-48 318 1046.6)" fill="#5b86e3" stroke="#1c1c1c" stroke-width="2.4"/>
<ellipse cx="316.5" cy="1041.3" rx="43.5" ry="17" transform="rotate(-48 316.5 1041.3)" fill="#729ef5"/>
<line x1="293" y1="1074.4" x2="339.4" y2="1028.9" stroke="#1c1c1c" stroke-width="1.4"/>
<ellipse cx="343.2" cy="1086" rx="49.5" ry="24" transform="rotate(-17 343.2 1086)" fill="#5b86e3" stroke="#1c1c1c" stroke-width="2.4"/>
<ellipse cx="344.5" cy="1080.6" rx="43.5" ry="17" transform="rotate(-17 344.5 1080.6)" fill="#729ef5"/>
<line x1="307.3" y1="1097" x2="370.6" y2="1081.8" stroke="#1c1c1c" stroke-width="1.4"/>
<ellipse cx="347.1" cy="1124.5" rx="50.5" ry="24" transform="rotate(8.4 347.1 1124.5)" fill="#5b86e3" stroke="#1c1c1c" stroke-width="2.4"/>
<ellipse cx="350.6" cy="1120.2" rx="44.5" ry="17" transform="rotate(8.4 350.6 1120.2)" fill="#729ef5"/>
<line x1="309" y1="1118.9" x2="374.6" y2="1132.7" stroke="#1c1c1c" stroke-width="1.4"/>
<ellipse cx="326.1" cy="1167.5" rx="49" ry="24" transform="rotate(40 326.1 1167.5)" fill="#5b86e3" stroke="#1c1c1c" stroke-width="2.4"/>
<ellipse cx="331.4" cy="1165.8" rx="43" ry="17" transform="rotate(40 331.4 1165.8)" fill="#729ef5"/>
<line x1="297.8" y1="1143.7" x2="344.2" y2="1187.9" stroke="#1c1c1c" stroke-width="1.4"/>
<ellipse cx="292.5" cy="1193.2" rx="50" ry="24" transform="rotate(68 292.5 1193.2)" fill="#5b86e3" stroke="#1c1c1c" stroke-width="2.4"/>
<ellipse cx="298" cy="1194.1" rx="44" ry="17" transform="rotate(68 298 1194.1)" fill="#729ef5"/>
<line x1="278.2" y1="1158" x2="299.2" y2="1220.6" stroke="#1c1c1c" stroke-width="1.4"/>
<ellipse cx="238.9" cy="1194.1" rx="47" ry="24" transform="rotate(104 238.9 1194.1)" fill="#5b86e3" stroke="#1c1c1c" stroke-width="2.4"/>
<ellipse cx="242.7" cy="1198" rx="41" ry="17" transform="rotate(104 242.7 1198)" fill="#729ef5"/>
<line x1="247.4" y1="1160.1" x2="229.2" y2="1217.3" stroke="#1c1c1c" stroke-width="1.4"/>
<ellipse cx="192.5" cy="1167.8" rx="49.5" ry="24" transform="rotate(140 192.5 1167.8)" fill="#5b86e3" stroke="#1c1c1c" stroke-width="2.4"/>
<ellipse cx="193.3" cy="1173.3" rx="43.5" ry="17" transform="rotate(140 193.3 1173.3)" fill="#729ef5"/>
<line x1="221.2" y1="1143.7" x2="168.9" y2="1182.4" stroke="#1c1c1c" stroke-width="1.4"/>
<ellipse cx="172.8" cy="1119.2" rx="49" ry="24" transform="rotate(175 172.8 1119.2)" fill="#5b86e3" stroke="#1c1c1c" stroke-width="2.4"/>
<ellipse cx="170.4" cy="1124.1" rx="43" ry="17" transform="rotate(175 170.4 1124.1)" fill="#729ef5"/>
<line x1="209.7" y1="1116" x2="145.7" y2="1117.6" stroke="#1c1c1c" stroke-width="1.4"/>
<ellipse cx="182.2" cy="1070.5" rx="49.5" ry="24" transform="rotate(-152 182.2 1070.5)" fill="#5b86e3" stroke="#1c1c1c" stroke-width="2.4"/>
<ellipse cx="177.5" cy="1073.4" rx="43.5" ry="17" transform="rotate(-152 177.5 1073.4)" fill="#729ef5"/>
<line x1="215.4" y1="1088.1" x2="159.9" y2="1054.1" stroke="#1c1c1c" stroke-width="1.4"/>
<ellipse cx="214.5" cy="1033.7" rx="52" ry="24" transform="rotate(-120 214.5 1033.7)" fill="#5b86e3" stroke="#1c1c1c" stroke-width="2.4"/>
<ellipse cx="208.8" cy="1033.6" rx="46" ry="17" transform="rotate(-120 208.8 1033.6)" fill="#729ef5"/>
<line x1="234.5" y1="1068.3" x2="203.2" y2="1005.6" stroke="#1c1c1c" stroke-width="1.4"/>
<circle cx="259.5" cy="1111.6" r="53" fill="#dba52c" stroke="#1c1c1c" stroke-width="2.4"/>
<circle cx="265.5" cy="1112.6" r="47" fill="#f5c73c"/>
<!-- t10.py -->
<path d="M583,1040 C585,1075 600,1100 620,1120 C640,1140 642,1180 637,1248" stroke="#7a8f35" stroke-width="3" fill="none" stroke-linecap="round"/>
<path d="M561,1190 C562,1220 562,1245 561,1267" stroke="#7a8f35" stroke-width="2.6" fill="none" stroke-linecap="round"/>
<path d="M625,1128 C604.6,1094.5 557.5,1082.1 527,1085 C540.7,1120.4 581.7,1146.7 625,1128 Z" fill="#7a8f35" /><path d="M625,1128 Q574.2,1110.6 527,1085" stroke="#3f5a1a" stroke-width="1" fill="none"/>
<path d="M614,1115 C644.6,1091.4 642.2,1051.2 623,1027 C607.2,1047.6 596.8,1086.6 614,1115 Z" fill="#7a8f35" /><path d="M614,1115 Q621.5,1071.3 623,1027" stroke="#3f5a1a" stroke-width="1" fill="none"/>
<path d="M638,1160 C671.2,1148.8 682.8,1111.7 678,1085 C647.9,1093 623.5,1123.4 638,1160 Z" fill="#7a8f35" /><path d="M638,1160 Q656,1121.4 678,1085" stroke="#3f5a1a" stroke-width="1" fill="none"/>
<path d="M640,1200 C675.8,1204.2 698.8,1174.6 702,1147 C671.6,1142.8 638.8,1160.9 640,1200 Z" fill="#7a8f35" /><path d="M640,1200 Q670,1172.4 702,1147" stroke="#3f5a1a" stroke-width="1" fill="none"/>
<path d="M628,1172 C626.9,1152.7 609.7,1145.1 595,1148 C596.8,1162.9 609.3,1176.9 628,1172 Z" fill="#7a8f35" /><path d="M628,1172 Q611.5,1160 595,1148" stroke="#3f5a1a" stroke-width="1" fill="none"/>
<path d="M561,1232 C556.7,1206.6 532,1198.7 513,1203 C514.9,1226.9 533.4,1245.1 561,1232 Z" fill="#7a8f35" /><path d="M561,1232 Q535.8,1219.4 513,1203" stroke="#3f5a1a" stroke-width="1" fill="none"/>
<path d="M562,1233 C592.1,1241.4 609.5,1219.7 609,1195 C588.8,1194 563.8,1206.4 562,1233 Z" fill="#7a8f35" /><path d="M562,1233 Q586.9,1215.7 609,1195" stroke="#3f5a1a" stroke-width="1" fill="none"/>
<path d="M563,1014 C572.2,982.1 569.5,951.2 557.6,952.2 C545.7,953.3 548.4,984.2 563,1014 Z" fill="#f5ab62" />
<path d="M563,1014 C585.9,990 597.9,961.4 586.9,956.8 C575.9,952.2 564,980.8 563,1014 Z" fill="#f5ab62" />
<path d="M563,1014 C594.5,1003.4 618.3,983.6 610.8,974.5 C603.2,965.3 579.3,985.1 563,1014 Z" fill="#f5ab62" />
<path d="M563,1014 C595.8,1019.2 626.1,1012.8 623.7,1001.2 C621.2,989.5 590.9,996 563,1014 Z" fill="#f5ab62" />
<path d="M563,1014 C589.6,1033.9 619.4,1042.3 622.7,1030.8 C625.9,1019.4 596.1,1011 563,1014 Z" fill="#f5ab62" />
<path d="M563,1014 C577.3,1044 599.8,1065.3 608,1056.6 C616.2,1048 593.7,1026.7 563,1014 Z" fill="#f5ab62" />
<path d="M563,1014 C561.8,1047.2 571.8,1076.5 583,1072.7 C594.3,1068.8 584.3,1039.5 563,1014 Z" fill="#f5ab62" />
<path d="M563,1014 C546.5,1042.8 541.7,1073.4 553.5,1075.3 C565.2,1077.1 570,1046.5 563,1014 Z" fill="#f5ab62" />
<path d="M563,1014 C535,1031.8 516.5,1056.7 526.1,1063.8 C535.6,1070.9 554.1,1046 563,1014 Z" fill="#f5ab62" />
<path d="M563,1014 C529.9,1016.8 502,1030.2 507.2,1041 C512.3,1051.7 540.3,1038.2 563,1014 Z" fill="#f5ab62" />
<path d="M563,1014 C532.4,1001.1 501.4,1000 501,1011.9 C500.6,1023.8 531.6,1024.9 563,1014 Z" fill="#f5ab62" />
<path d="M563,1014 C541.9,988.3 515,973 509.1,983.4 C503.2,993.7 530.2,1009 563,1014 Z" fill="#f5ab62" />
<path d="M563,1014 C556.3,981.5 539.5,955.4 529.5,961.8 C519.5,968.2 536.2,994.3 563,1014 Z" fill="#f5ab62" />
<circle cx="563" cy="1014" r="30" fill="#f5ab62"/>
<circle cx="563" cy="1014" r="14" fill="#fff"/>
<circle cx="557.6" cy="1165.7" r="32.2" fill="#d6620e"/>
<circle cx="557.6" cy="1137.7" r="15" fill="#d6620e"/>
<circle cx="577.4" cy="1145.9" r="15" fill="#d6620e"/>
<circle cx="585.6" cy="1165.7" r="15" fill="#d6620e"/>
<circle cx="577.4" cy="1185.5" r="15" fill="#d6620e"/>
<circle cx="557.6" cy="1193.7" r="15" fill="#d6620e"/>
<circle cx="537.8" cy="1185.5" r="15" fill="#d6620e"/>
<circle cx="529.6" cy="1165.7" r="15" fill="#d6620e"/>
<circle cx="537.8" cy="1145.9" r="15" fill="#d6620e"/>
<circle cx="557.6" cy="1165.7" r="14.5" fill="#fff"/>
<!-- t11.py -->
<path d="M943,1230 L822,1055 C810,1030 825,990 855,987 C890,984 925,1015 946,1037 C962,1012 990,984 1010,983 C1040,982 1062,1000 1064,1030 L1064,1115 Z" transform="translate(0 0)" fill="none" stroke="#b5653e" stroke-width="1"/>
<path d="M943,1230 L822,1055 C810,1030 825,990 855,987 C890,984 925,1015 946,1037 C962,1012 990,984 1010,983 C1040,982 1062,1000 1064,1030 L1064,1115 Z" transform="translate(4 -3)" fill="none" stroke="#c98b4e" stroke-width="1"/>
<path d="M943,1230 L822,1055 C810,1030 825,990 855,987 C890,984 925,1015 946,1037 C962,1012 990,984 1010,983 C1040,982 1062,1000 1064,1030 L1064,1115 Z" transform="translate(8 -6)" fill="none" stroke="#d8a55a" stroke-width="1"/>
<path d="M943,1230 L822,1055 C810,1030 825,990 855,987 C890,984 925,1015 946,1037 C962,1012 990,984 1010,983 C1040,982 1062,1000 1064,1030 L1064,1115 Z" transform="translate(-3 4)" fill="none" stroke="#a8583a" stroke-width="1"/>
<path d="M826.8,1091 C825.1,1070.5 806.1,1060.4 790,1061.6 C792.3,1077.5 806.4,1093.9 826.8,1091 Z" fill="#2f5a52" /><path d="M826.8,1091 Q808.4,1076.3 790,1061.6" stroke="#1a3a32" stroke-width="0.6" fill="none"/>
<path d="M821,1072 C830,1055.2 820.7,1036.9 808,1029 C801.8,1042.6 804.2,1063 821,1072 Z" fill="#2f5a52" /><path d="M821,1072 Q814.5,1050.5 808,1029" stroke="#1a3a32" stroke-width="0.6" fill="none"/>
<path d="M833.5,1090 C840.1,1075.9 832.2,1060.3 822,1053.5 C817.5,1064.9 820,1082.2 833.5,1090 Z" fill="#2f5a52" /><path d="M833.5,1090 Q827.8,1071.8 822,1053.5" stroke="#1a3a32" stroke-width="0.6" fill="none"/>
<path d="M835,1096 C850.5,1099.2 860.7,1087.2 862,1075 C849.8,1073.3 835.7,1080.2 835,1096 Z" fill="#2f5a52" /><path d="M835,1096 Q848.5,1085.5 862,1075" stroke="#1a3a32" stroke-width="0.6" fill="none"/>
<path d="M837,1073 C847.4,1072.2 848.9,1064 845,1057 C837.1,1058 831.4,1064.2 837,1073 Z" fill="#3a9c8a" /><path d="M837,1073 Q841,1065 845,1057" stroke="#1a3a32" stroke-width="0.6" fill="none"/>
<path d="M827,1113 C820.6,1101.7 806.4,1099.9 797,1104 C802.6,1112.6 815.4,1118.9 827,1113 Z" fill="#2f5a52" /><path d="M827,1113 Q812,1108.5 797,1104" stroke="#1a3a32" stroke-width="0.6" fill="none"/>
<path d="M827,1148 C826.4,1136.7 816.5,1132.8 808,1135 C809,1143.7 816.2,1151.5 827,1148 Z" fill="#3a9c8a" /><path d="M827,1148 Q817.5,1141.5 808,1135" stroke="#1a3a32" stroke-width="0.6" fill="none"/>
<path d="M821.5,1115.7 C820.4,1134.5 836.3,1146.6 851,1148 C850.9,1133.2 840.3,1116.3 821.5,1115.7 Z" fill="#2f5a52" /><path d="M821.5,1115.7 Q836.2,1131.8 851,1148" stroke="#1a3a32" stroke-width="0.6" fill="none"/>
<path d="M872,1172.7 C858.9,1152.7 831.2,1147.8 813,1153.5 C824.3,1168.8 849.7,1181.2 872,1172.7 Z" fill="#2f5a52" /><path d="M872,1172.7 Q842.5,1163.1 813,1153.5" stroke="#1a3a32" stroke-width="0.6" fill="none"/>
<path d="M851,1118 C847.8,1137.7 863,1154.2 878,1159 C879.5,1143.3 870.4,1122.9 851,1118 Z" fill="#2f5a52" /><path d="M851,1118 Q864.5,1138.5 878,1159" stroke="#1a3a32" stroke-width="0.6" fill="none"/>
<path d="M870,1110 C864.8,1122.4 873.4,1132.2 883.5,1134.6 C886.9,1124.7 883.3,1112.3 870,1110 Z" fill="#3a9c8a" /><path d="M870,1110 Q876.8,1122.3 883.5,1134.6" stroke="#1a3a32" stroke-width="0.6" fill="none"/>
<path d="M900,1162 C908.1,1142.9 895.8,1124.6 881,1118 C875.7,1133.4 880.5,1154.7 900,1162 Z" fill="#2f5a52" /><path d="M900,1162 Q890.5,1140 881,1118" stroke="#1a3a32" stroke-width="0.6" fill="none"/>
<path d="M900,1140 C901.4,1153.1 913.1,1156.7 922.7,1153.5 C921,1143.5 912.2,1135 900,1140 Z" fill="#3a9c8a" /><path d="M900,1140 Q911.4,1146.8 922.7,1153.5" stroke="#1a3a32" stroke-width="0.6" fill="none"/>
<path d="M894,1156 C896.1,1170.3 909.8,1176.5 921,1175 C918.7,1164 908.1,1153.1 894,1156 Z" fill="#2f5a52" /><path d="M894,1156 Q907.5,1165.5 921,1175" stroke="#1a3a32" stroke-width="0.6" fill="none"/>
<path d="M848,1183 C855.8,1197.1 873.8,1200.7 886,1197 C879.2,1186.3 863,1177.3 848,1183 Z" fill="#2f5a52" /><path d="M848,1183 Q867,1190 886,1197" stroke="#1a3a32" stroke-width="0.6" fill="none"/>
<path d="M886,1226.5 C884.4,1207.2 867,1200.2 852.4,1203.5 C854.6,1218.3 867.4,1232 886,1226.5 Z" fill="#3a9c8a" /><path d="M886,1226.5 Q869.2,1215 852.4,1203.5" stroke="#1a3a32" stroke-width="0.6" fill="none"/>
<path d="M894,1213 C890.3,1226.1 900,1235.4 910.5,1237 C912.7,1226.6 907.6,1214.3 894,1213 Z" fill="#3a9c8a" /><path d="M894,1213 Q902.2,1225 910.5,1237" stroke="#1a3a32" stroke-width="0.6" fill="none"/>
<path d="M921,1197 C924.8,1210.7 939.7,1218.2 951,1218 C947.3,1207.3 935.2,1195.9 921,1197 Z" fill="#2f5a52" /><path d="M921,1197 Q936,1207.5 951,1218" stroke="#1a3a32" stroke-width="0.6" fill="none"/>
<path d="M1059,1026.5 C1065.9,1010.3 1058.2,990.2 1048,980.5 C1043.3,993.8 1045.5,1015.1 1059,1026.5 Z" fill="#2f5a52" /><path d="M1059,1026.5 Q1053.5,1003.5 1048,980.5" stroke="#1a3a32" stroke-width="0.6" fill="none"/>
<path d="M1070,1029 C1076.3,1017.2 1070.4,1003.4 1062,997 C1057.6,1006.6 1058.9,1021.6 1070,1029 Z" fill="#2f5a52" /><path d="M1070,1029 Q1066,1013 1062,997" stroke="#1a3a32" stroke-width="0.6" fill="none"/>
<path d="M1073,1026.5 C1086.1,1028.2 1092.4,1017.7 1091.6,1007.6 C1081.5,1006.9 1071.1,1013.5 1073,1026.5 Z" fill="#2f5a52" /><path d="M1073,1026.5 Q1082.3,1017 1091.6,1007.6" stroke="#1a3a32" stroke-width="0.6" fill="none"/>
<path d="M1029.5,1029 C1029.3,1019.2 1020.6,1014.7 1013,1015.7 C1013.7,1023.3 1019.8,1030.8 1029.5,1029 Z" fill="#2f5a52" /><path d="M1029.5,1029 Q1021.2,1022.4 1013,1015.7" stroke="#1a3a32" stroke-width="0.6" fill="none"/>
<path d="M1037.6,1070 C1035.4,1056.7 1023,1052.8 1013,1056 C1015.3,1066.2 1025,1074.9 1037.6,1070 Z" fill="#3a9c8a" /><path d="M1037.6,1070 Q1025.3,1063 1013,1056" stroke="#1a3a32" stroke-width="0.6" fill="none"/>
<path d="M1051,1088.6 C1042.2,1071.6 1021.7,1069 1008,1075 C1015.8,1087.8 1034,1097.4 1051,1088.6 Z" fill="#2f5a52" /><path d="M1051,1088.6 Q1029.5,1081.8 1008,1075" stroke="#1a3a32" stroke-width="0.6" fill="none"/>
<path d="M1037.6,1110 C1037.4,1096.2 1025.3,1089.8 1014.6,1091 C1015.4,1101.7 1024,1112.4 1037.6,1110 Z" fill="#3a9c8a" /><path d="M1037.6,1110 Q1026.1,1100.5 1014.6,1091" stroke="#1a3a32" stroke-width="0.6" fill="none"/>
<path d="M1029.5,1091 C1027.7,1110.7 1043.8,1125.6 1059,1129 C1059.4,1113.4 1049,1094.1 1029.5,1091 Z" fill="#2f5a52" /><path d="M1029.5,1091 Q1044.2,1110 1059,1129" stroke="#1a3a32" stroke-width="0.6" fill="none"/>
<path d="M1037.6,1142.7 C1039.3,1133 1031.6,1127 1024,1126.5 C1023.2,1134.1 1027.8,1142.7 1037.6,1142.7 Z" fill="#3a9c8a" /><path d="M1037.6,1142.7 Q1030.8,1134.6 1024,1126.5" stroke="#1a3a32" stroke-width="0.6" fill="none"/>
<path d="M1056.5,1161.6 C1060,1141 1044.8,1122.2 1029.5,1115.7 C1027.7,1132.2 1036.8,1154.7 1056.5,1161.6 Z" fill="#2f5a52" /><path d="M1056.5,1161.6 Q1043,1138.7 1029.5,1115.7" stroke="#1a3a32" stroke-width="0.6" fill="none"/>
<path d="M1062,1105 C1055.6,1122.4 1067.4,1137.7 1081,1142.7 C1085.1,1128.8 1079.8,1110.2 1062,1105 Z" fill="#2f5a52" /><path d="M1062,1105 Q1071.5,1123.8 1081,1142.7" stroke="#1a3a32" stroke-width="0.6" fill="none"/>
<path d="M1086,1064 C1085.6,1073.2 1093.1,1076.6 1100,1075 C1099.9,1067.9 1094.8,1061.4 1086,1064 Z" fill="#3a9c8a" /><path d="M1086,1064 Q1093,1069.5 1100,1075" stroke="#1a3a32" stroke-width="0.6" fill="none"/>
<path d="M1081,1075 C1077.5,1085.8 1085.3,1093 1094,1094 C1096.2,1085.5 1092.3,1075.6 1081,1075 Z" fill="#2f5a52" /><path d="M1081,1075 Q1087.5,1084.5 1094,1094" stroke="#1a3a32" stroke-width="0.6" fill="none"/>
<path d="M1032,1040 C1034.3,1030.8 1027.3,1025.3 1020,1025 C1018.7,1032.2 1022.5,1040.2 1032,1040 Z" fill="#2f5a52" /><path d="M1032,1040 Q1026,1032.5 1020,1025" stroke="#1a3a32" stroke-width="0.6" fill="none"/>
<path d="M1045,1050 C1042.9,1041.4 1035.5,1041 1030,1045 C1032,1051.5 1038.1,1055.6 1045,1050 Z" fill="#2f5a52" /><path d="M1045,1050 Q1037.5,1047.5 1030,1045" stroke="#1a3a32" stroke-width="0.6" fill="none"/>
<path d="M902.4,1194 C917.8,1180 903.9,1163 902.4,1163 C900.9,1163 887,1180 902.4,1194 Z" fill="#e63f7c" />
<path d="M902.4,1194 C923.1,1195 925.4,1173.2 924.3,1172.1 C923.2,1171 901.4,1173.3 902.4,1194 Z" fill="#e63f7c" />
<path d="M902.4,1194 C916.4,1209.4 933.4,1195.5 933.4,1194 C933.4,1192.5 916.4,1178.6 902.4,1194 Z" fill="#e63f7c" />
<path d="M902.4,1194 C901.4,1214.7 923.2,1217 924.3,1215.9 C925.4,1214.8 923.1,1193 902.4,1194 Z" fill="#e63f7c" />
<path d="M902.4,1194 C887,1208 900.9,1225 902.4,1225 C903.9,1225 917.8,1208 902.4,1194 Z" fill="#e63f7c" />
<path d="M902.4,1194 C881.7,1193 879.4,1214.8 880.5,1215.9 C881.6,1217 903.4,1214.7 902.4,1194 Z" fill="#e63f7c" />
<path d="M902.4,1194 C888.4,1178.6 871.4,1192.5 871.4,1194 C871.4,1195.5 888.4,1209.4 902.4,1194 Z" fill="#e63f7c" />
<path d="M902.4,1194 C903.4,1173.3 881.6,1171 880.5,1172.1 C879.4,1173.2 881.7,1195 902.4,1194 Z" fill="#e63f7c" />
<path d="M902.4,1194 C917.9,1189.1 912.4,1173 911.3,1172.5 C910.2,1172 894.9,1179.6 902.4,1194 Z" fill="#f2609a" />
<path d="M902.4,1194 C916.8,1201.5 924.4,1186.2 923.9,1185.1 C923.4,1184 907.3,1178.5 902.4,1194 Z" fill="#f2609a" />
<path d="M902.4,1194 C907.3,1209.5 923.4,1204 923.9,1202.9 C924.4,1201.8 916.8,1186.5 902.4,1194 Z" fill="#f2609a" />
<path d="M902.4,1194 C894.9,1208.4 910.2,1216 911.3,1215.5 C912.4,1215 917.9,1198.9 902.4,1194 Z" fill="#f2609a" />
<path d="M902.4,1194 C886.9,1198.9 892.4,1215 893.5,1215.5 C894.6,1216 909.9,1208.4 902.4,1194 Z" fill="#f2609a" />
<path d="M902.4,1194 C888,1186.5 880.4,1201.8 880.9,1202.9 C881.4,1204 897.5,1209.5 902.4,1194 Z" fill="#f2609a" />
<path d="M902.4,1194 C897.5,1178.5 881.4,1184 880.9,1185.1 C880.4,1186.2 888,1201.5 902.4,1194 Z" fill="#f2609a" />
<path d="M902.4,1194 C909.9,1179.6 894.6,1172 893.5,1172.5 C892.4,1173 886.9,1189.1 902.4,1194 Z" fill="#f2609a" />
<circle cx="902.4" cy="1194" r="10.2" fill="#8a1a3a"/>
<circle cx="902.4" cy="1194" r="8.4" fill="#f2c05a"/>
<path d="M825.4,1106 C832.8,1099.2 826.1,1091 825.4,1091 C824.7,1091 818,1099.2 825.4,1106 Z" fill="#e63f7c" />
<path d="M825.4,1106 C835.4,1106.5 836.5,1095.9 836,1095.4 C835.5,1094.9 824.9,1096 825.4,1106 Z" fill="#e63f7c" />
<path d="M825.4,1106 C832.1,1113.4 840.4,1106.7 840.4,1106 C840.4,1105.3 832.1,1098.6 825.4,1106 Z" fill="#e63f7c" />
<path d="M825.4,1106 C824.9,1116 835.5,1117.1 836,1116.6 C836.5,1116.1 835.4,1105.5 825.4,1106 Z" fill="#e63f7c" />
<path d="M825.4,1106 C818,1112.8 824.7,1121 825.4,1121 C826.1,1121 832.8,1112.8 825.4,1106 Z" fill="#e63f7c" />
<path d="M825.4,1106 C815.4,1105.5 814.3,1116.1 814.8,1116.6 C815.3,1117.1 825.9,1116 825.4,1106 Z" fill="#e63f7c" />
<path d="M825.4,1106 C818.6,1098.6 810.4,1105.3 810.4,1106 C810.4,1106.7 818.6,1113.4 825.4,1106 Z" fill="#e63f7c" />
<path d="M825.4,1106 C825.9,1096 815.3,1094.9 814.8,1095.4 C814.3,1095.9 815.4,1106.5 825.4,1106 Z" fill="#e63f7c" />
<path d="M825.4,1106 C832.9,1103.6 830.3,1095.8 829.7,1095.6 C829.2,1095.4 821.8,1099 825.4,1106 Z" fill="#f2609a" />
<path d="M825.4,1106 C832.4,1109.6 836,1102.2 835.8,1101.7 C835.6,1101.1 827.8,1098.5 825.4,1106 Z" fill="#f2609a" />
<path d="M825.4,1106 C827.8,1113.5 835.6,1110.9 835.8,1110.3 C836,1109.8 832.4,1102.4 825.4,1106 Z" fill="#f2609a" />
<path d="M825.4,1106 C821.8,1113 829.2,1116.6 829.7,1116.4 C830.3,1116.2 832.9,1108.4 825.4,1106 Z" fill="#f2609a" />
<path d="M825.4,1106 C817.9,1108.4 820.5,1116.2 821.1,1116.4 C821.6,1116.6 829,1113 825.4,1106 Z" fill="#f2609a" />
<path d="M825.4,1106 C818.4,1102.4 814.8,1109.8 815,1110.3 C815.2,1110.9 823,1113.5 825.4,1106 Z" fill="#f2609a" />
<path d="M825.4,1106 C823,1098.5 815.2,1101.1 815,1101.7 C814.8,1102.2 818.4,1109.6 825.4,1106 Z" fill="#f2609a" />
<path d="M825.4,1106 C829,1099 821.6,1095.4 821.1,1095.6 C820.5,1095.8 817.9,1103.6 825.4,1106 Z" fill="#f2609a" />
<circle cx="825.4" cy="1106" r="5" fill="#8a1a3a"/>
<circle cx="825.4" cy="1106" r="4.1" fill="#f2c05a"/>
<path d="M874,1151 C878,1147.4 874.4,1143 874,1143 C873.6,1143 870,1147.4 874,1151 Z" fill="#e63f7c" />
<path d="M874,1151 C879.4,1151.3 879.9,1145.6 879.7,1145.3 C879.4,1145.1 873.7,1145.6 874,1151 Z" fill="#e63f7c" />
<path d="M874,1151 C877.6,1155 882,1151.4 882,1151 C882,1150.6 877.6,1147 874,1151 Z" fill="#e63f7c" />
<path d="M874,1151 C873.7,1156.4 879.4,1156.9 879.7,1156.7 C879.9,1156.4 879.4,1150.7 874,1151 Z" fill="#e63f7c" />
<path d="M874,1151 C870,1154.6 873.6,1159 874,1159 C874.4,1159 878,1154.6 874,1151 Z" fill="#e63f7c" />
<path d="M874,1151 C868.6,1150.7 868.1,1156.4 868.3,1156.7 C868.6,1156.9 874.3,1156.4 874,1151 Z" fill="#e63f7c" />
<path d="M874,1151 C870.4,1147 866,1150.6 866,1151 C866,1151.4 870.4,1155 874,1151 Z" fill="#e63f7c" />
<path d="M874,1151 C874.3,1145.6 868.6,1145.1 868.3,1145.3 C868.1,1145.6 868.6,1151.3 874,1151 Z" fill="#e63f7c" />
<path d="M874,1151 C878,1149.7 876.6,1145.6 876.3,1145.5 C876,1145.3 872.1,1147.3 874,1151 Z" fill="#f2609a" />
<path d="M874,1151 C877.7,1152.9 879.7,1149 879.5,1148.7 C879.4,1148.4 875.3,1147 874,1151 Z" fill="#f2609a" />
<path d="M874,1151 C875.3,1155 879.4,1153.6 879.5,1153.3 C879.7,1153 877.7,1149.1 874,1151 Z" fill="#f2609a" />
<path d="M874,1151 C872.1,1154.7 876,1156.7 876.3,1156.5 C876.6,1156.4 878,1152.3 874,1151 Z" fill="#f2609a" />
<path d="M874,1151 C870,1152.3 871.4,1156.4 871.7,1156.5 C872,1156.7 875.9,1154.7 874,1151 Z" fill="#f2609a" />
<path d="M874,1151 C870.3,1149.1 868.3,1153 868.5,1153.3 C868.6,1153.6 872.7,1155 874,1151 Z" fill="#f2609a" />
<path d="M874,1151 C872.7,1147 868.6,1148.4 868.5,1148.7 C868.3,1149 870.3,1152.9 874,1151 Z" fill="#f2609a" />
<path d="M874,1151 C875.9,1147.3 872,1145.3 871.7,1145.5 C871.4,1145.6 870,1149.7 874,1151 Z" fill="#f2609a" />
<circle cx="874" cy="1151" r="2.6" fill="#8a1a3a"/>
<circle cx="874" cy="1151" r="2.2" fill="#f2c05a"/>
<path d="M867,1178 C871,1174.4 867.4,1170 867,1170 C866.6,1170 863,1174.4 867,1178 Z" fill="#e63f7c" />
<path d="M867,1178 C872.4,1178.3 872.9,1172.6 872.7,1172.3 C872.4,1172.1 866.7,1172.6 867,1178 Z" fill="#e63f7c" />
<path d="M867,1178 C870.6,1182 875,1178.4 875,1178 C875,1177.6 870.6,1174 867,1178 Z" fill="#e63f7c" />
<path d="M867,1178 C866.7,1183.4 872.4,1183.9 872.7,1183.7 C872.9,1183.4 872.4,1177.7 867,1178 Z" fill="#e63f7c" />
<path d="M867,1178 C863,1181.6 866.6,1186 867,1186 C867.4,1186 871,1181.6 867,1178 Z" fill="#e63f7c" />
<path d="M867,1178 C861.6,1177.7 861.1,1183.4 861.3,1183.7 C861.6,1183.9 867.3,1183.4 867,1178 Z" fill="#e63f7c" />
<path d="M867,1178 C863.4,1174 859,1177.6 859,1178 C859,1178.4 863.4,1182 867,1178 Z" fill="#e63f7c" />
<path d="M867,1178 C867.3,1172.6 861.6,1172.1 861.3,1172.3 C861.1,1172.6 861.6,1178.3 867,1178 Z" fill="#e63f7c" />
<path d="M867,1178 C871,1176.7 869.6,1172.6 869.3,1172.5 C869,1172.3 865.1,1174.3 867,1178 Z" fill="#f2609a" />
<path d="M867,1178 C870.7,1179.9 872.7,1176 872.5,1175.7 C872.4,1175.4 868.3,1174 867,1178 Z" fill="#f2609a" />
<path d="M867,1178 C868.3,1182 872.4,1180.6 872.5,1180.3 C872.7,1180 870.7,1176.1 867,1178 Z" fill="#f2609a" />
<path d="M867,1178 C865.1,1181.7 869,1183.7 869.3,1183.5 C869.6,1183.4 871,1179.3 867,1178 Z" fill="#f2609a" />
<path d="M867,1178 C863,1179.3 864.4,1183.4 864.7,1183.5 C865,1183.7 868.9,1181.7 867,1178 Z" fill="#f2609a" />
<path d="M867,1178 C863.3,1176.1 861.3,1180 861.5,1180.3 C861.6,1180.6 865.7,1182 867,1178 Z" fill="#f2609a" />
<path d="M867,1178 C865.7,1174 861.6,1175.4 861.5,1175.7 C861.3,1176 863.3,1179.9 867,1178 Z" fill="#f2609a" />
<path d="M867,1178 C868.9,1174.3 865,1172.3 864.7,1172.5 C864.4,1172.6 863,1176.7 867,1178 Z" fill="#f2609a" />
<circle cx="867" cy="1178" r="2.6" fill="#8a1a3a"/>
<circle cx="867" cy="1178" r="2.2" fill="#f2c05a"/>
<path d="M1067,1057.6 C1082.4,1043.6 1068.5,1026.6 1067,1026.6 C1065.5,1026.6 1051.6,1043.6 1067,1057.6 Z" fill="#e63f7c" />
<path d="M1067,1057.6 C1087.7,1058.6 1090,1036.8 1088.9,1035.7 C1087.8,1034.6 1066,1036.9 1067,1057.6 Z" fill="#e63f7c" />
<path d="M1067,1057.6 C1081,1073 1098,1059.1 1098,1057.6 C1098,1056.1 1081,1042.2 1067,1057.6 Z" fill="#e63f7c" />
<path d="M1067,1057.6 C1066,1078.3 1087.8,1080.6 1088.9,1079.5 C1090,1078.4 1087.7,1056.6 1067,1057.6 Z" fill="#e63f7c" />
<path d="M1067,1057.6 C1051.6,1071.5 1065.5,1088.6 1067,1088.6 C1068.5,1088.6 1082.4,1071.5 1067,1057.6 Z" fill="#e63f7c" />
<path d="M1067,1057.6 C1046.3,1056.6 1044,1078.4 1045.1,1079.5 C1046.2,1080.6 1068,1078.3 1067,1057.6 Z" fill="#e63f7c" />
<path d="M1067,1057.6 C1053,1042.2 1036,1056.1 1036,1057.6 C1036,1059.1 1053,1073 1067,1057.6 Z" fill="#e63f7c" />
<path d="M1067,1057.6 C1068,1036.9 1046.2,1034.6 1045.1,1035.7 C1044,1036.8 1046.3,1058.6 1067,1057.6 Z" fill="#e63f7c" />
<path d="M1067,1057.6 C1082.5,1052.7 1077,1036.6 1075.9,1036.1 C1074.8,1035.6 1059.5,1043.2 1067,1057.6 Z" fill="#f2609a" />
<path d="M1067,1057.6 C1081.4,1065.1 1089,1049.8 1088.5,1048.7 C1088,1047.6 1071.9,1042.1 1067,1057.6 Z" fill="#f2609a" />
<path d="M1067,1057.6 C1071.9,1073.1 1088,1067.6 1088.5,1066.5 C1089,1065.4 1081.4,1050.1 1067,1057.6 Z" fill="#f2609a" />
<path d="M1067,1057.6 C1059.5,1072 1074.8,1079.6 1075.9,1079.1 C1077,1078.6 1082.5,1062.5 1067,1057.6 Z" fill="#f2609a" />
<path d="M1067,1057.6 C1051.5,1062.5 1057,1078.6 1058.1,1079.1 C1059.2,1079.6 1074.5,1072 1067,1057.6 Z" fill="#f2609a" />
<path d="M1067,1057.6 C1052.6,1050.1 1045,1065.4 1045.5,1066.5 C1046,1067.6 1062.1,1073.1 1067,1057.6 Z" fill="#f2609a" />
<path d="M1067,1057.6 C1062.1,1042.1 1046,1047.6 1045.5,1048.7 C1045,1049.8 1052.6,1065.1 1067,1057.6 Z" fill="#f2609a" />
<path d="M1067,1057.6 C1074.5,1043.2 1059.2,1035.6 1058.1,1036.1 C1057,1036.6 1051.5,1052.7 1067,1057.6 Z" fill="#f2609a" />
<circle cx="1067" cy="1057.6" r="10.2" fill="#8a1a3a"/>
<circle cx="1067" cy="1057.6" r="8.4" fill="#f2c05a"/>
<path d="M1036,1028 C1040.5,1024 1036.4,1019 1036,1019 C1035.6,1019 1031.5,1024 1036,1028 Z" fill="#e63f7c" />
<path d="M1036,1028 C1042,1028.3 1042.7,1022 1042.4,1021.6 C1042,1021.3 1035.7,1022 1036,1028 Z" fill="#e63f7c" />
<path d="M1036,1028 C1040,1032.5 1045,1028.4 1045,1028 C1045,1027.6 1040,1023.5 1036,1028 Z" fill="#e63f7c" />
<path d="M1036,1028 C1035.7,1034 1042,1034.7 1042.4,1034.4 C1042.7,1034 1042,1027.7 1036,1028 Z" fill="#e63f7c" />
<path d="M1036,1028 C1031.5,1032 1035.6,1037 1036,1037 C1036.4,1037 1040.5,1032 1036,1028 Z" fill="#e63f7c" />
<path d="M1036,1028 C1030,1027.7 1029.3,1034 1029.6,1034.4 C1030,1034.7 1036.3,1034 1036,1028 Z" fill="#e63f7c" />
<path d="M1036,1028 C1032,1023.5 1027,1027.6 1027,1028 C1027,1028.4 1032,1032.5 1036,1028 Z" fill="#e63f7c" />
<path d="M1036,1028 C1036.3,1022 1030,1021.3 1029.6,1021.6 C1029.3,1022 1030,1028.3 1036,1028 Z" fill="#e63f7c" />
<path d="M1036,1028 C1040.5,1026.6 1038.9,1021.9 1038.6,1021.8 C1038.3,1021.6 1033.8,1023.8 1036,1028 Z" fill="#f2609a" />
<path d="M1036,1028 C1040.2,1030.2 1042.4,1025.7 1042.2,1025.4 C1042.1,1025.1 1037.4,1023.5 1036,1028 Z" fill="#f2609a" />
<path d="M1036,1028 C1037.4,1032.5 1042.1,1030.9 1042.2,1030.6 C1042.4,1030.3 1040.2,1025.8 1036,1028 Z" fill="#f2609a" />
<path d="M1036,1028 C1033.8,1032.2 1038.3,1034.4 1038.6,1034.2 C1038.9,1034.1 1040.5,1029.4 1036,1028 Z" fill="#f2609a" />
<path d="M1036,1028 C1031.5,1029.4 1033.1,1034.1 1033.4,1034.2 C1033.7,1034.4 1038.2,1032.2 1036,1028 Z" fill="#f2609a" />
<path d="M1036,1028 C1031.8,1025.8 1029.6,1030.3 1029.8,1030.6 C1029.9,1030.9 1034.6,1032.5 1036,1028 Z" fill="#f2609a" />
<path d="M1036,1028 C1034.6,1023.5 1029.9,1025.1 1029.8,1025.4 C1029.6,1025.7 1031.8,1030.2 1036,1028 Z" fill="#f2609a" />
<path d="M1036,1028 C1038.2,1023.8 1033.7,1021.6 1033.4,1021.8 C1033.1,1021.9 1031.5,1026.6 1036,1028 Z" fill="#f2609a" />
<circle cx="1036" cy="1028" r="3" fill="#8a1a3a"/>
<circle cx="1036" cy="1028" r="2.4" fill="#f2c05a"/>
<path d="M1071,1099.5 C1076.5,1094.5 1071.5,1088.5 1071,1088.5 C1070.5,1088.5 1065.5,1094.5 1071,1099.5 Z" fill="#e63f7c" />
<path d="M1071,1099.5 C1078.4,1099.9 1079.2,1092.1 1078.8,1091.7 C1078.4,1091.3 1070.6,1092.1 1071,1099.5 Z" fill="#e63f7c" />
<path d="M1071,1099.5 C1076,1105 1082,1100 1082,1099.5 C1082,1099 1076,1094 1071,1099.5 Z" fill="#e63f7c" />
<path d="M1071,1099.5 C1070.6,1106.9 1078.4,1107.7 1078.8,1107.3 C1079.2,1106.9 1078.4,1099.1 1071,1099.5 Z" fill="#e63f7c" />
<path d="M1071,1099.5 C1065.5,1104.5 1070.5,1110.5 1071,1110.5 C1071.5,1110.5 1076.5,1104.5 1071,1099.5 Z" fill="#e63f7c" />
<path d="M1071,1099.5 C1063.6,1099.1 1062.8,1106.9 1063.2,1107.3 C1063.6,1107.7 1071.4,1106.9 1071,1099.5 Z" fill="#e63f7c" />
<path d="M1071,1099.5 C1066,1094 1060,1099 1060,1099.5 C1060,1100 1066,1105 1071,1099.5 Z" fill="#e63f7c" />
<path d="M1071,1099.5 C1071.4,1092.1 1063.6,1091.3 1063.2,1091.7 C1062.8,1092.1 1063.6,1099.9 1071,1099.5 Z" fill="#e63f7c" />
<path d="M1071,1099.5 C1076.5,1097.8 1074.6,1092 1074.2,1091.9 C1073.8,1091.7 1068.4,1094.4 1071,1099.5 Z" fill="#f2609a" />
<path d="M1071,1099.5 C1076.1,1102.1 1078.8,1096.7 1078.6,1096.3 C1078.5,1095.9 1072.7,1094 1071,1099.5 Z" fill="#f2609a" />
<path d="M1071,1099.5 C1072.7,1105 1078.5,1103.1 1078.6,1102.7 C1078.8,1102.3 1076.1,1096.9 1071,1099.5 Z" fill="#f2609a" />
<path d="M1071,1099.5 C1068.4,1104.6 1073.8,1107.3 1074.2,1107.1 C1074.6,1107 1076.5,1101.2 1071,1099.5 Z" fill="#f2609a" />
<path d="M1071,1099.5 C1065.5,1101.2 1067.4,1107 1067.8,1107.1 C1068.2,1107.3 1073.6,1104.6 1071,1099.5 Z" fill="#f2609a" />
<path d="M1071,1099.5 C1065.9,1096.9 1063.2,1102.3 1063.4,1102.7 C1063.5,1103.1 1069.3,1105 1071,1099.5 Z" fill="#f2609a" />
<path d="M1071,1099.5 C1069.3,1094 1063.5,1095.9 1063.4,1096.3 C1063.2,1096.7 1065.9,1102.1 1071,1099.5 Z" fill="#f2609a" />
<path d="M1071,1099.5 C1073.6,1094.4 1068.2,1091.7 1067.8,1091.9 C1067.4,1092 1065.5,1097.8 1071,1099.5 Z" fill="#f2609a" />
<circle cx="1071" cy="1099.5" r="3.6" fill="#8a1a3a"/>
<circle cx="1071" cy="1099.5" r="3" fill="#f2c05a"/>
<!-- t12.py -->
<circle cx="1158.8" cy="981.6" r="15.3" fill="#7b7b7b"/><path d="M1152.8,977.8 L1155.6,980.8 L1158.8,976.6 L1162,980.8 L1164.8,977.8 V987.6 H1152.8 Z" fill="#fbb30f"/>
<path d="M1190,1078 C1192.1,1059.3 1178.8,1039.9 1166,1032 C1165.2,1047.1 1173.5,1069.1 1190,1078 Z" fill="#5e8a5e" />
<path d="M1200,1086 C1213.3,1077 1215.3,1058.8 1210.5,1047 C1200.4,1054.7 1193,1071.6 1200,1086 Z" fill="#5e8a5e" />
<path d="M1204,1110 C1194.6,1089.9 1169.6,1081 1152,1083 C1160.4,1098.5 1182.2,1113.9 1204,1110 Z" fill="#5e8a5e" />
<path d="M1212,1129 C1202.5,1119.3 1185.4,1117.6 1175,1121 C1183.1,1128.4 1199.3,1133.9 1212,1129 Z" fill="#5e8a5e" />
<path d="M1363,1102 C1380.6,1104.9 1395.5,1091.4 1400,1078 C1386,1076.6 1367.6,1084.7 1363,1102 Z" fill="#5e8a5e" />
<path d="M1341.6,1072 C1342.5,1061 1333.5,1052.8 1325,1051 C1324.8,1059.7 1330.7,1070.4 1341.6,1072 Z" fill="#5e8a5e" />
<path d="M1245.7,1222 C1250.5,1206.3 1240.7,1189.8 1229.5,1183 C1226.4,1195.7 1231.1,1214.3 1245.7,1222 Z" fill="#5e8a5e" />
<path d="M1256,1165 C1261.8,1178.5 1278.2,1188.2 1290,1190 C1284.8,1179.3 1270.6,1166.5 1256,1165 Z" fill="#5e8a5e" />
<path d="M1345,1065 C1340,1040 1330,1020 1312,1005 M1330,1020 L1333,1015 M1320,1012 L1302,1015 M1340,1045 L1352,1052 L1368,1056 M1346,1055 L1362,1052" stroke="#5a8a6a" stroke-width="1.6" fill="none"/>
<path d="M1330,1165 L1348,1164 M1332,1170 L1343,1185 M1328,1178 L1330,1200" stroke="#5a8a6a" stroke-width="1.8" fill="none"/>
<circle cx="1305" cy="1006" r="4.5" fill="#d42525"/>
<circle cx="1313" cy="1001" r="4" fill="#d42525"/>
<circle cx="1301" cy="1015.7" r="4" fill="#d42525"/>
<circle cx="1333.5" cy="1015.7" r="5" fill="#d42525"/>
<circle cx="1347" cy="1021" r="4" fill="#d42525"/>
<circle cx="1341" cy="1023" r="3.5" fill="#d42525"/>
<circle cx="1352.4" cy="1052" r="4" fill="#d42525"/>
<circle cx="1362" cy="1052" r="4.5" fill="#d42525"/>
<circle cx="1368.6" cy="1056" r="3.5" fill="#d42525"/>
<circle cx="1322" cy="1007" r="3" fill="#8aaa80"/>
<circle cx="1318" cy="1018" r="3" fill="#8aaa80"/>
<circle cx="1367" cy="1066" r="3" fill="#8aaa80"/>
<circle cx="1341" cy="1053" r="3" fill="#8aaa80"/>
<ellipse cx="1224" cy="1094" rx="22" ry="38" transform="rotate(12 1224 1094)" fill="#ecb2b2"/>
<ellipse cx="1345" cy="1090" rx="20" ry="24" fill="#eeb6b6"/>
<ellipse cx="1290" cy="1050" rx="32" ry="20" fill="#f0c2c2"/>
<ellipse cx="1258" cy="1082" rx="29" ry="35" fill="#f0b6b6" stroke="#f8d8d8" stroke-width="3"/>
<ellipse cx="1308" cy="1074" rx="27" ry="32" fill="#f5cfcf" stroke="#fae0e0" stroke-width="2"/>
<ellipse cx="1292" cy="1112" rx="40" ry="22" fill="#eeb0b0"/>
<path d="M1266,1170 C1280,1195 1310,1198 1323,1172 Z" fill="#f0b8b8"/>
<circle cx="1311" cy="1103" r="3.4" fill="#8e4a48"/>
<circle cx="1309.4" cy="1110.7" r="3.4" fill="#8e4a48"/>
<circle cx="1304.8" cy="1117.1" r="3.4" fill="#8e4a48"/>
<circle cx="1298" cy="1121.5" r="3.4" fill="#8e4a48"/>
<circle cx="1290" cy="1123" r="3.4" fill="#8e4a48"/>
<circle cx="1282" cy="1121.5" r="3.4" fill="#8e4a48"/>
<circle cx="1275.2" cy="1117.1" r="3.4" fill="#8e4a48"/>
<circle cx="1270.6" cy="1110.7" r="3.4" fill="#8e4a48"/>
<circle cx="1269" cy="1103" r="3.4" fill="#8e4a48"/>
<circle cx="1270.6" cy="1095.3" r="3.4" fill="#8e4a48"/>
<circle cx="1275.2" cy="1088.9" r="3.4" fill="#8e4a48"/>
<circle cx="1282" cy="1084.5" r="3.4" fill="#8e4a48"/>
<circle cx="1290" cy="1083" r="3.4" fill="#8e4a48"/>
<circle cx="1298" cy="1084.5" r="3.4" fill="#8e4a48"/>
<circle cx="1304.8" cy="1088.9" r="3.4" fill="#8e4a48"/>
<circle cx="1309.4" cy="1095.3" r="3.4" fill="#8e4a48"/>
<circle cx="1290" cy="1103" r="17" fill="#e8b828"/>
<line x1="1297" y1="1103" x2="1305" y2="1103" stroke="#f8e08a" stroke-width="1"/>
<line x1="1296.1" y1="1106.5" x2="1303" y2="1110.5" stroke="#f8e08a" stroke-width="1"/>
<line x1="1293.5" y1="1109.1" x2="1297.5" y2="1116" stroke="#f8e08a" stroke-width="1"/>
<line x1="1290" y1="1110" x2="1290" y2="1118" stroke="#f8e08a" stroke-width="1"/>
<line x1="1286.5" y1="1109.1" x2="1282.5" y2="1116" stroke="#f8e08a" stroke-width="1"/>
<line x1="1283.9" y1="1106.5" x2="1277" y2="1110.5" stroke="#f8e08a" stroke-width="1"/>
<line x1="1283" y1="1103" x2="1275" y2="1103" stroke="#f8e08a" stroke-width="1"/>
<line x1="1283.9" y1="1099.5" x2="1277" y2="1095.5" stroke="#f8e08a" stroke-width="1"/>
<line x1="1286.5" y1="1096.9" x2="1282.5" y2="1090" stroke="#f8e08a" stroke-width="1"/>
<line x1="1290" y1="1096" x2="1290" y2="1088" stroke="#f8e08a" stroke-width="1"/>
<line x1="1293.5" y1="1096.9" x2="1297.5" y2="1090" stroke="#f8e08a" stroke-width="1"/>
<line x1="1296.1" y1="1099.5" x2="1303" y2="1095.5" stroke="#f8e08a" stroke-width="1"/>
<circle cx="1290" cy="1105" r="6.5" fill="#8a6218"/>
<path d="M1401,1086 L1424,1080.5 L1417,1102 L1433.5,1119.7 L1402.4,1126.5 Z" fill="#efc95a"/>
<path d="M1174,1175 L1141.6,1191 L1166,1207.6 L1162,1222.4 L1195.7,1203.5 Z" fill="#efc95a"/>
<path d="M1171.4,1129 C1230,1125 1270,1108 1320,1106 C1350,1105 1380,1104 1401,1105 L1404.3,1164.3 C1370,1163 1340,1166 1300,1176 C1260,1186 1210,1189 1175.4,1188.6 Z" fill="#f9d877"/>
<circle cx="1348" cy="1164" r="8.5" fill="#c81e1e"/>
<circle cx="1346" cy="1161" r="3.4" fill="#e85a5a"/>
<circle cx="1343" cy="1184.6" r="10" fill="#c81e1e"/>
<circle cx="1341" cy="1181.6" r="4" fill="#e85a5a"/>
<circle cx="1329.5" cy="1199.5" r="8.5" fill="#c81e1e"/>
<circle cx="1327.5" cy="1196.5" r="3.4" fill="#e85a5a"/>
<circle cx="1358" cy="1176" r="4" fill="#8aaa80"/>
<path d="M1199.7,1198 C1205,1194.5 1204,1191 1199.7,1191 C1195.4,1191 1194.5,1194.5 1199.7,1198 Z" fill="#f2c0c8" />
<path d="M1199.7,1198 C1204.7,1201.9 1207.7,1200 1206.4,1195.8 C1205,1191.7 1201.4,1191.9 1199.7,1198 Z" fill="#f2c0c8" />
<path d="M1199.7,1198 C1197.5,1203.9 1200.3,1206.2 1203.8,1203.7 C1207.3,1201.1 1206,1197.7 1199.7,1198 Z" fill="#f2c0c8" />
<path d="M1199.7,1198 C1193.4,1197.7 1192.1,1201.1 1195.6,1203.7 C1199.1,1206.2 1201.9,1203.9 1199.7,1198 Z" fill="#f2c0c8" />
<path d="M1199.7,1198 C1198,1191.9 1194.4,1191.7 1193,1195.8 C1191.7,1200 1194.7,1201.9 1199.7,1198 Z" fill="#f2c0c8" />
<circle cx="1199.7" cy="1198" r="2.2" fill="#e0b030"/>
<path d="M1256.5,1194 C1261.8,1190.5 1260.8,1187 1256.5,1187 C1252.2,1187 1251.2,1190.5 1256.5,1194 Z" fill="#f2c0c8" />
<path d="M1256.5,1194 C1261.5,1197.9 1264.5,1196 1263.2,1191.8 C1261.8,1187.7 1258.2,1187.9 1256.5,1194 Z" fill="#f2c0c8" />
<path d="M1256.5,1194 C1254.3,1199.9 1257.1,1202.2 1260.6,1199.7 C1264.1,1197.1 1262.8,1193.7 1256.5,1194 Z" fill="#f2c0c8" />
<path d="M1256.5,1194 C1250.2,1193.7 1248.9,1197.1 1252.4,1199.7 C1255.9,1202.2 1258.7,1199.9 1256.5,1194 Z" fill="#f2c0c8" />
<path d="M1256.5,1194 C1254.8,1187.9 1251.2,1187.7 1249.8,1191.8 C1248.5,1196 1251.5,1197.9 1256.5,1194 Z" fill="#f2c0c8" />
<circle cx="1256.5" cy="1194" r="2.2" fill="#e0b030"/>
</svg>
 <!-- title -->
 <div style="position:absolute;left:78px;top:163px;font-size:16px;font-weight:normal;-webkit-text-stroke:0.5px #3a3a3a;color:#3a3a3a;letter-spacing:0px">Clip art</div>
 <div style="position:absolute;left:140px;top:164px;font-size:14px;color:#777">12.3k results</div>
 <div style="position:absolute;left:1380px;top:163px;font-size:14px;color:#222">Relevance</div>
 <svg class="ic" style="left:1456px;top:166px" width="12" height="10" viewBox="0 0 12 10" fill="none" stroke="#222" stroke-width="1.4"><polyline points="2.5,3 6,6.5 9.5,3"/></svg>
</div>
</body></html>
